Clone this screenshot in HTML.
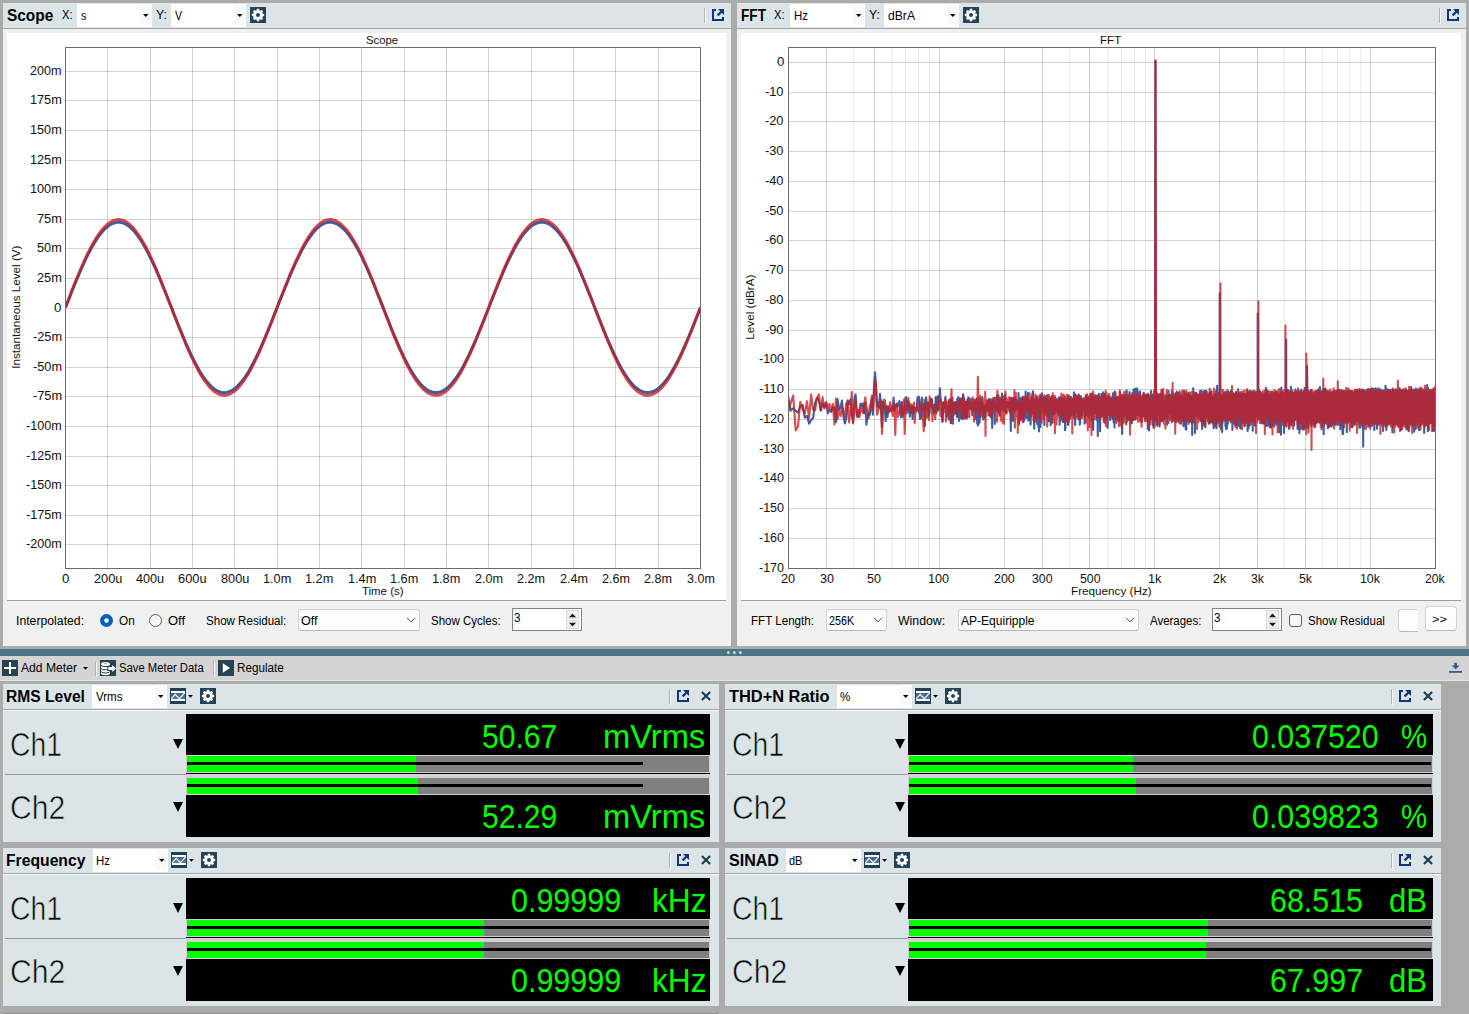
<!DOCTYPE html>
<html lang="en"><head><meta charset="utf-8"><title>Audio Analyzer</title>
<style>
html,body{margin:0;padding:0}
body{width:1469px;height:1014px;overflow:hidden;background:#ababab;position:relative;font-family:"Liberation Sans", sans-serif}
#root{position:absolute;left:0;top:0;width:1469px;height:1014px;overflow:hidden}
#root div{position:absolute}
.ic{position:absolute;display:block;overflow:visible}
.t{position:absolute;white-space:pre;line-height:1;transform-origin:0 50%;font-family:"Liberation Sans", sans-serif}
</style></head>
<body><div id="root">
<div style="left:3px;top:3px;width:728px;height:25px;background:#dbe5e7;"></div>
<div style="left:3px;top:28px;width:728px;height:1px;background:#a2a2a2;"></div>
<div style="left:3px;top:29px;width:728px;height:617px;background:#f0f0f0;"></div>
<div style="left:7px;top:33px;width:719px;height:567px;background:#fff;"></div>
<div style="left:7px;top:600px;width:719px;height:1px;background:#9f9f9f;"></div>
<div style="left:77px;top:4px;width:75px;height:23px;background:#fff;"></div>
<div style="left:140px;top:5px;width:11px;height:20px;background:#f9f9f9;"></div>
<svg class="ic" style="left:142.8px;top:13.9px" width="5.5" height="3" viewBox="0 0 5.5 3"><path d="M0 0H5.5L2.75 3Z" fill="#000"/></svg>
<div style="left:171px;top:4px;width:75px;height:23px;background:#fff;"></div>
<div style="left:234px;top:5px;width:11px;height:20px;background:#f9f9f9;"></div>
<svg class="ic" style="left:236.8px;top:13.9px" width="5.5" height="3" viewBox="0 0 5.5 3"><path d="M0 0H5.5L2.75 3Z" fill="#000"/></svg>
<svg class="ic" style="left:250px;top:7px" width="16" height="16" viewBox="0 0 16 16"><rect width="16" height="16" fill="#264356"/><path d="M6.61 3.51 L6.91 1.85 L9.09 1.85 L9.39 3.51 L10.19 3.84 L11.58 2.88 L13.12 4.42 L12.16 5.81 L12.49 6.61 L14.15 6.91 L14.15 9.09 L12.49 9.39 L12.16 10.19 L13.12 11.58 L11.58 13.12 L10.19 12.16 L9.39 12.49 L9.09 14.15 L6.91 14.15 L6.61 12.49 L5.81 12.16 L4.42 13.12 L2.88 11.58 L3.84 10.19 L3.51 9.39 L1.85 9.09 L1.85 6.91 L3.51 6.61 L3.84 5.81 L2.88 4.42 L4.42 2.88 L5.81 3.84Z M6.00 8.00 a2.00 2.00 0 1 0 4.00 0 a2.00 2.00 0 1 0 -4.00 0Z" fill="#fff" fill-rule="evenodd"/></svg>
<div style="left:704px;top:8px;width:1px;height:15px;background:#b4b4b4;"></div>
<div style="left:705px;top:9px;width:1px;height:15px;background:#fbfbfb;"></div>
<svg class="ic" style="left:712px;top:9px" width="12" height="12" viewBox="0 0 12 12"><path d="M0 0H4V2H2V10H10V8H12V12H0Z" fill="#12357e"/><path d="M6 0H12V6Z" fill="#12357e"/><path d="M10.8 1.2L5.6 6.4" stroke="#12357e" stroke-width="2.2" fill="none"/></svg>
<div style="left:737px;top:3px;width:729px;height:25px;background:#dbe5e7;"></div>
<div style="left:737px;top:28px;width:729px;height:1px;background:#a2a2a2;"></div>
<div style="left:737px;top:29px;width:729px;height:617px;background:#f0f0f0;"></div>
<div style="left:741px;top:33px;width:720px;height:567px;background:#fff;"></div>
<div style="left:741px;top:600px;width:720px;height:1px;background:#9f9f9f;"></div>
<div style="left:790px;top:4px;width:75px;height:23px;background:#fff;"></div>
<div style="left:853px;top:5px;width:11px;height:20px;background:#f9f9f9;"></div>
<svg class="ic" style="left:855.8px;top:13.9px" width="5.5" height="3" viewBox="0 0 5.5 3"><path d="M0 0H5.5L2.75 3Z" fill="#000"/></svg>
<div style="left:884px;top:4px;width:75px;height:23px;background:#fff;"></div>
<div style="left:947px;top:5px;width:11px;height:20px;background:#f9f9f9;"></div>
<svg class="ic" style="left:949.8px;top:13.9px" width="5.5" height="3" viewBox="0 0 5.5 3"><path d="M0 0H5.5L2.75 3Z" fill="#000"/></svg>
<svg class="ic" style="left:963px;top:7px" width="16" height="16" viewBox="0 0 16 16"><rect width="16" height="16" fill="#264356"/><path d="M6.61 3.51 L6.91 1.85 L9.09 1.85 L9.39 3.51 L10.19 3.84 L11.58 2.88 L13.12 4.42 L12.16 5.81 L12.49 6.61 L14.15 6.91 L14.15 9.09 L12.49 9.39 L12.16 10.19 L13.12 11.58 L11.58 13.12 L10.19 12.16 L9.39 12.49 L9.09 14.15 L6.91 14.15 L6.61 12.49 L5.81 12.16 L4.42 13.12 L2.88 11.58 L3.84 10.19 L3.51 9.39 L1.85 9.09 L1.85 6.91 L3.51 6.61 L3.84 5.81 L2.88 4.42 L4.42 2.88 L5.81 3.84Z M6.00 8.00 a2.00 2.00 0 1 0 4.00 0 a2.00 2.00 0 1 0 -4.00 0Z" fill="#fff" fill-rule="evenodd"/></svg>
<div style="left:1439px;top:8px;width:1px;height:15px;background:#b4b4b4;"></div>
<div style="left:1440px;top:9px;width:1px;height:15px;background:#fbfbfb;"></div>
<svg class="ic" style="left:1447px;top:9px" width="12" height="12" viewBox="0 0 12 12"><path d="M0 0H4V2H2V10H10V8H12V12H0Z" fill="#12357e"/><path d="M6 0H12V6Z" fill="#12357e"/><path d="M10.8 1.2L5.6 6.4" stroke="#12357e" stroke-width="2.2" fill="none"/></svg>
<svg class="ic" style="left:0;top:0" width="1469" height="646" viewBox="0 0 1469 646"><path d="M107.5 47.5V568.0M150.5 47.5V568.0M192.5 47.5V568.0M234.5 47.5V568.0M277.5 47.5V568.0M319.5 47.5V568.0M361.5 47.5V568.0M404.5 47.5V568.0M446.5 47.5V568.0M488.5 47.5V568.0M531.5 47.5V568.0M573.5 47.5V568.0M615.5 47.5V568.0M658.5 47.5V568.0" stroke="rgba(0,0,0,0.175)" stroke-width="1" fill="none" shape-rendering="crispEdges"/><path d="M65.5 544.5H700.5M65.5 515.5H700.5M65.5 485.5H700.5M65.5 456.5H700.5M65.5 426.5H700.5M65.5 396.5H700.5M65.5 367.5H700.5M65.5 337.5H700.5M65.5 308.5H700.5M65.5 278.5H700.5M65.5 248.5H700.5M65.5 219.5H700.5M65.5 189.5H700.5M65.5 160.5H700.5M65.5 130.5H700.5M65.5 100.5H700.5M65.5 71.5H700.5" stroke="rgba(0,0,0,0.175)" stroke-width="1" fill="none" shape-rendering="crispEdges"/><clipPath id="c1"><rect x="65.5" y="47.5" width="635.0" height="520.5"/></clipPath><g clip-path="url(#c1)" fill="none" stroke-linejoin="round"><path d="M65.5 307.4L67.1 303.4L68.7 299.4L70.3 295.4L71.8 291.4L73.4 287.5L75.0 283.6L76.6 279.8L78.2 276.1L79.8 272.4L81.4 268.7L83.0 265.2L84.5 261.8L86.1 258.4L87.7 255.2L89.3 252.1L90.9 249.1L92.5 246.2L94.1 243.5L95.7 240.9L97.2 238.5L98.8 236.2L100.4 234.1L102.0 232.1L103.6 230.3L105.2 228.7L106.8 227.3L108.4 226.0L109.9 224.9L111.5 224.0L113.1 223.3L114.7 222.8L116.3 222.4L117.9 222.3L119.5 222.3L121.1 222.5L122.7 222.9L124.2 223.5L125.8 224.3L127.4 225.3L129.0 226.4L130.6 227.7L132.2 229.2L133.8 230.9L135.4 232.8L136.9 234.8L138.5 237.0L140.1 239.3L141.7 241.8L143.3 244.4L144.9 247.2L146.5 250.1L148.1 253.1L149.6 256.3L151.2 259.5L152.8 262.9L154.4 266.4L156.0 269.9L157.6 273.6L159.2 277.3L160.8 281.1L162.3 284.9L163.9 288.8L165.5 292.8L167.1 296.7L168.7 300.7L170.3 304.7L171.9 308.7L173.4 312.7L175.0 316.7L176.6 320.7L178.2 324.7L179.8 328.6L181.4 332.4L183.0 336.2L184.6 340.0L186.1 343.7L187.7 347.2L189.3 350.7L190.9 354.2L192.5 357.5L194.1 360.6L195.7 363.7L197.3 366.7L198.8 369.5L200.4 372.2L202.0 374.7L203.6 377.1L205.2 379.3L206.8 381.4L208.4 383.3L210.0 385.0L211.5 386.6L213.1 388.0L214.7 389.2L216.3 390.2L217.9 391.1L219.5 391.7L221.1 392.2L222.7 392.5L224.2 392.6L225.8 392.5L227.4 392.2L229.0 391.7L230.6 391.1L232.2 390.2L233.8 389.2L235.4 388.0L237.0 386.6L238.5 385.0L240.1 383.3L241.7 381.4L243.3 379.3L244.9 377.1L246.5 374.7L248.1 372.2L249.7 369.5L251.2 366.7L252.8 363.7L254.4 360.6L256.0 357.5L257.6 354.2L259.2 350.8L260.8 347.3L262.4 343.7L263.9 340.0L265.5 336.3L267.1 332.4L268.7 328.6L270.3 324.7L271.9 320.7L273.5 316.8L275.0 312.8L276.6 308.7L278.2 304.7L279.8 300.7L281.4 296.7L283.0 292.8L284.6 288.8L286.2 284.9L287.8 281.1L289.3 277.3L290.9 273.6L292.5 269.9L294.1 266.4L295.7 262.9L297.3 259.5L298.9 256.3L300.5 253.1L302.0 250.1L303.6 247.2L305.2 244.4L306.8 241.8L308.4 239.3L310.0 237.0L311.6 234.8L313.1 232.8L314.7 230.9L316.3 229.2L317.9 227.7L319.5 226.4L321.1 225.3L322.7 224.3L324.3 223.5L325.8 222.9L327.4 222.5L329.0 222.3L330.6 222.3L332.2 222.4L333.8 222.8L335.4 223.3L337.0 224.0L338.6 224.9L340.1 226.0L341.7 227.3L343.3 228.7L344.9 230.3L346.5 232.1L348.1 234.1L349.7 236.2L351.2 238.5L352.8 240.9L354.4 243.5L356.0 246.2L357.6 249.1L359.2 252.1L360.8 255.2L362.4 258.4L363.9 261.8L365.5 265.2L367.1 268.7L368.7 272.3L370.3 276.0L371.9 279.8L373.5 283.6L375.1 287.5L376.6 291.4L378.2 295.4L379.8 299.4L381.4 303.4L383.0 307.4L384.6 311.4L386.2 315.4L387.8 319.4L389.4 323.3L390.9 327.3L392.5 331.2L394.1 335.0L395.7 338.7L397.3 342.4L398.9 346.1L400.5 349.6L402.1 353.0L403.6 356.4L405.2 359.6L406.8 362.7L408.4 365.7L410.0 368.5L411.6 371.3L413.2 373.9L414.8 376.3L416.3 378.6L417.9 380.7L419.5 382.7L421.1 384.5L422.7 386.1L424.3 387.5L425.9 388.8L427.4 389.9L429.0 390.8L430.6 391.5L432.2 392.0L433.8 392.4L435.4 392.5L437.0 392.5L438.6 392.3L440.2 391.9L441.7 391.3L443.3 390.5L444.9 389.5L446.5 388.4L448.1 387.1L449.7 385.6L451.3 383.9L452.8 382.0L454.4 380.0L456.0 377.8L457.6 375.5L459.2 373.0L460.8 370.4L462.4 367.6L464.0 364.7L465.5 361.7L467.1 358.5L468.7 355.3L470.3 351.9L471.9 348.4L473.5 344.9L475.1 341.2L476.7 337.5L478.2 333.7L479.8 329.9L481.4 326.0L483.0 322.1L484.6 318.1L486.2 314.1L487.8 310.1L489.4 306.1L490.9 302.1L492.5 298.1L494.1 294.1L495.7 290.1L497.3 286.2L498.9 282.4L500.5 278.6L502.1 274.8L503.6 271.2L505.2 267.6L506.8 264.1L508.4 260.7L510.0 257.4L511.6 254.2L513.2 251.1L514.8 248.1L516.3 245.3L517.9 242.7L519.5 240.1L521.1 237.7L522.7 235.5L524.3 233.4L525.9 231.5L527.5 229.8L529.0 228.2L530.6 226.8L532.2 225.6L533.8 224.6L535.4 223.8L537.0 223.1L538.6 222.6L540.2 222.3L541.8 222.2L543.3 222.3L544.9 222.6L546.5 223.1L548.1 223.7L549.7 224.6L551.3 225.6L552.9 226.8L554.5 228.2L556.0 229.8L557.6 231.5L559.2 233.4L560.8 235.5L562.4 237.7L564.0 240.1L565.6 242.6L567.2 245.3L568.7 248.1L570.3 251.1L571.9 254.1L573.5 257.3L575.1 260.6L576.7 264.0L578.3 267.5L579.9 271.1L581.4 274.8L583.0 278.5L584.6 282.3L586.2 286.2L587.8 290.1L589.4 294.1L591.0 298.0L592.6 302.0L594.1 306.0L595.7 310.1L597.3 314.1L598.9 318.1L600.5 322.0L602.1 326.0L603.7 329.9L605.2 333.7L606.8 337.5L608.4 341.2L610.0 344.9L611.6 348.4L613.2 351.9L614.8 355.3L616.4 358.5L617.9 361.7L619.5 364.7L621.1 367.6L622.7 370.4L624.3 373.0L625.9 375.5L627.5 377.8L629.1 380.0L630.6 382.0L632.2 383.9L633.8 385.6L635.4 387.1L637.0 388.4L638.6 389.5L640.2 390.5L641.8 391.3L643.4 391.9L644.9 392.3L646.5 392.5L648.1 392.5L649.7 392.4L651.3 392.0L652.9 391.5L654.5 390.8L656.1 389.9L657.6 388.8L659.2 387.5L660.8 386.1L662.4 384.5L664.0 382.7L665.6 380.7L667.2 378.6L668.8 376.3L670.3 373.9L671.9 371.3L673.5 368.6L675.1 365.7L676.7 362.7L678.3 359.6L679.9 356.4L681.5 353.0L683.0 349.6L684.6 346.1L686.2 342.5L687.8 338.8L689.4 335.0L691.0 331.2L692.6 327.3L694.1 323.4L695.7 319.4L697.3 315.4L698.9 311.4L700.5 307.4" stroke="#3f5ea2" stroke-width="2.9"/><path d="M65.5 307.4L67.1 303.3L68.7 299.1L70.3 295.0L71.8 290.9L73.4 286.9L75.0 282.9L76.6 278.9L78.2 275.1L79.8 271.2L81.4 267.5L83.0 263.9L84.5 260.3L86.1 256.9L87.7 253.5L89.3 250.3L90.9 247.2L92.5 244.3L94.1 241.5L95.7 238.8L97.2 236.3L98.8 234.0L100.4 231.8L102.0 229.7L103.6 227.9L105.2 226.2L106.8 224.7L108.4 223.4L109.9 222.3L111.5 221.4L113.1 220.6L114.7 220.1L116.3 219.7L117.9 219.5L119.5 219.6L121.1 219.8L122.7 220.2L124.2 220.8L125.8 221.6L127.4 222.6L129.0 223.8L130.6 225.2L132.2 226.8L133.8 228.5L135.4 230.4L136.9 232.5L138.5 234.7L140.1 237.1L141.7 239.7L143.3 242.4L144.9 245.3L146.5 248.3L148.1 251.4L149.6 254.6L151.2 258.0L152.8 261.5L154.4 265.1L156.0 268.7L157.6 272.5L159.2 276.3L160.8 280.2L162.3 284.2L163.9 288.2L165.5 292.3L167.1 296.4L168.7 300.5L170.3 304.6L171.9 308.8L173.4 312.9L175.0 317.0L176.6 321.1L178.2 325.2L179.8 329.2L181.4 333.2L183.0 337.2L184.6 341.0L186.1 344.8L187.7 348.5L189.3 352.1L190.9 355.6L192.5 359.0L194.1 362.3L195.7 365.5L197.3 368.5L198.8 371.5L200.4 374.2L202.0 376.8L203.6 379.3L205.2 381.6L206.8 383.7L208.4 385.7L210.0 387.5L211.5 389.1L213.1 390.5L214.7 391.8L216.3 392.8L217.9 393.7L219.5 394.4L221.1 394.9L222.7 395.2L224.2 395.3L225.8 395.2L227.4 394.9L229.0 394.4L230.6 393.7L232.2 392.8L233.8 391.8L235.4 390.5L237.0 389.1L238.5 387.5L240.1 385.7L241.7 383.7L243.3 381.6L244.9 379.3L246.5 376.8L248.1 374.2L249.7 371.5L251.2 368.6L252.8 365.5L254.4 362.3L256.0 359.1L257.6 355.6L259.2 352.1L260.8 348.5L262.4 344.8L263.9 341.0L265.5 337.2L267.1 333.2L268.7 329.3L270.3 325.2L271.9 321.2L273.5 317.0L275.0 312.9L276.6 308.8L278.2 304.6L279.8 300.5L281.4 296.4L283.0 292.3L284.6 288.2L286.2 284.2L287.8 280.3L289.3 276.3L290.9 272.5L292.5 268.7L294.1 265.1L295.7 261.5L297.3 258.0L298.9 254.6L300.5 251.4L302.0 248.3L303.6 245.3L305.2 242.4L306.8 239.7L308.4 237.1L310.0 234.7L311.6 232.5L313.1 230.4L314.7 228.5L316.3 226.8L317.9 225.2L319.5 223.8L321.1 222.6L322.7 221.6L324.3 220.8L325.8 220.2L327.4 219.8L329.0 219.6L330.6 219.5L332.2 219.7L333.8 220.1L335.4 220.6L337.0 221.4L338.6 222.3L340.1 223.4L341.7 224.7L343.3 226.2L344.9 227.9L346.5 229.7L348.1 231.8L349.7 234.0L351.2 236.3L352.8 238.8L354.4 241.5L356.0 244.3L357.6 247.2L359.2 250.3L360.8 253.5L362.4 256.9L363.9 260.3L365.5 263.9L367.1 267.5L368.7 271.2L370.3 275.0L371.9 278.9L373.5 282.9L375.1 286.9L376.6 290.9L378.2 295.0L379.8 299.1L381.4 303.3L383.0 307.4L384.6 311.5L386.2 315.7L387.8 319.8L389.4 323.9L390.9 327.9L392.5 331.9L394.1 335.9L395.7 339.7L397.3 343.6L398.9 347.3L400.5 350.9L402.1 354.5L403.6 357.9L405.2 361.2L406.8 364.5L408.4 367.5L410.0 370.5L411.6 373.3L413.2 376.0L414.8 378.5L416.3 380.8L417.9 383.0L419.5 385.1L421.1 386.9L422.7 388.6L424.3 390.1L425.9 391.4L427.4 392.5L429.0 393.4L430.6 394.2L432.2 394.7L433.8 395.1L435.4 395.3L437.0 395.2L438.6 395.0L440.2 394.6L441.7 394.0L443.3 393.2L444.9 392.2L446.5 391.0L448.1 389.6L449.7 388.0L451.3 386.3L452.8 384.4L454.4 382.3L456.0 380.1L457.6 377.7L459.2 375.1L460.8 372.4L462.4 369.5L464.0 366.5L465.5 363.4L467.1 360.2L468.7 356.8L470.3 353.3L471.9 349.7L473.5 346.1L475.1 342.3L476.7 338.5L478.2 334.6L479.8 330.6L481.4 326.6L483.0 322.5L484.6 318.4L486.2 314.3L487.8 310.2L489.4 306.0L490.9 301.9L492.5 297.8L494.1 293.7L495.7 289.6L497.3 285.6L498.9 281.6L500.5 277.6L502.1 273.8L503.6 270.0L505.2 266.3L506.8 262.7L508.4 259.2L510.0 255.8L511.6 252.5L513.2 249.3L514.8 246.3L516.3 243.4L517.9 240.6L519.5 238.0L521.1 235.5L522.7 233.2L524.3 231.1L525.9 229.1L527.5 227.3L529.0 225.7L530.6 224.3L532.2 223.0L533.8 222.0L535.4 221.1L537.0 220.4L538.6 219.9L540.2 219.6L541.8 219.5L543.3 219.6L544.9 219.9L546.5 220.4L548.1 221.1L549.7 222.0L551.3 223.0L552.9 224.3L554.5 225.7L556.0 227.3L557.6 229.1L559.2 231.1L560.8 233.2L562.4 235.5L564.0 238.0L565.6 240.6L567.2 243.3L568.7 246.2L570.3 249.3L571.9 252.4L573.5 255.7L575.1 259.1L576.7 262.7L578.3 266.3L579.9 270.0L581.4 273.8L583.0 277.6L584.6 281.5L586.2 285.5L587.8 289.6L589.4 293.6L591.0 297.7L592.6 301.9L594.1 306.0L595.7 310.1L597.3 314.3L598.9 318.4L600.5 322.5L602.1 326.6L603.7 330.6L605.2 334.5L606.8 338.4L608.4 342.3L610.0 346.0L611.6 349.7L613.2 353.3L614.8 356.8L616.4 360.1L617.9 363.4L619.5 366.5L621.1 369.5L622.7 372.4L624.3 375.1L625.9 377.7L627.5 380.1L629.1 382.3L630.6 384.4L632.2 386.3L633.8 388.0L635.4 389.6L637.0 391.0L638.6 392.2L640.2 393.2L641.8 394.0L643.4 394.6L644.9 395.0L646.5 395.2L648.1 395.3L649.7 395.1L651.3 394.7L652.9 394.2L654.5 393.4L656.1 392.5L657.6 391.4L659.2 390.1L660.8 388.6L662.4 386.9L664.0 385.1L665.6 383.0L667.2 380.9L668.8 378.5L670.3 376.0L671.9 373.3L673.5 370.5L675.1 367.6L676.7 364.5L678.3 361.3L679.9 357.9L681.5 354.5L683.0 350.9L684.6 347.3L686.2 343.6L687.8 339.8L689.4 335.9L691.0 331.9L692.6 327.9L694.1 323.9L695.7 319.8L697.3 315.7L698.9 311.6L700.5 307.4" stroke="rgba(201,28,30,0.78)" stroke-width="2.9"/></g><rect x="65.5" y="47.5" width="635.0" height="521.0" fill="none" stroke="#6c6c6c" stroke-width="1" shape-rendering="crispEdges"/><path d="M853.5 47.5V568.0M891.5 47.5V568.0M905.5 47.5V568.0M918.5 47.5V568.0M929.5 47.5V568.0M1069.5 47.5V568.0M1107.5 47.5V568.0M1121.5 47.5V568.0M1134.5 47.5V568.0M1145.5 47.5V568.0M1284.5 47.5V568.0M1322.5 47.5V568.0M1337.5 47.5V568.0M1349.5 47.5V568.0M1360.5 47.5V568.0" stroke="rgba(0,0,0,0.065)" stroke-width="1" fill="none" shape-rendering="crispEdges"/><path d="M826.5 47.5V568.0M874.5 47.5V568.0M939.5 47.5V568.0M1004.5 47.5V568.0M1042.5 47.5V568.0M1089.5 47.5V568.0M1154.5 47.5V568.0M1219.5 47.5V568.0M1257.5 47.5V568.0M1305.5 47.5V568.0M1370.5 47.5V568.0" stroke="rgba(0,0,0,0.175)" stroke-width="1" fill="none" shape-rendering="crispEdges"/><path d="M788.5 62.5H1435.5M788.5 92.5H1435.5M788.5 121.5H1435.5M788.5 151.5H1435.5M788.5 181.5H1435.5M788.5 211.5H1435.5M788.5 240.5H1435.5M788.5 270.5H1435.5M788.5 300.5H1435.5M788.5 330.5H1435.5M788.5 359.5H1435.5M788.5 389.5H1435.5M788.5 419.5H1435.5M788.5 449.5H1435.5M788.5 478.5H1435.5M788.5 508.5H1435.5M788.5 538.5H1435.5" stroke="rgba(0,0,0,0.175)" stroke-width="1" fill="none" shape-rendering="crispEdges"/><clipPath id="c2"><rect x="788.5" y="47.5" width="647.0" height="520.5"/></clipPath><g clip-path="url(#c2)" fill="none" stroke-linejoin="round" stroke-width="2.1"><path d="M788.2 396.5L790.7 410.6L793.2 408.3L795.7 410.9L798.0 412.7L800.3 405.8L802.6 405.0L804.8 417.6L807.0 415.8L809.1 423.7L811.1 420.0L813.1 418.0L815.1 402.8L817.0 397.5L818.9 400.4L820.8 410.5L822.6 403.5L824.4 407.5L826.1 402.7L827.9 413.3L829.5 409.6L831.2 411.9L832.8 407.3L834.4 407.5L836.0 422.1L837.6 399.1L839.1 409.3L840.6 407.2L842.0 400.5L843.5 417.0L844.9 423.5L846.3 418.2L847.7 400.4L849.1 404.0L850.4 399.6L851.8 414.8L853.1 422.1L854.4 399.0L855.6 394.2L856.9 414.6L858.1 417.0L859.4 411.2L860.6 403.5L861.8 405.1L862.9 403.5L864.1 413.3L865.3 402.9L866.4 424.7L867.5 416.7L868.6 413.2L869.7 414.8L870.8 408.7L871.9 399.0L872.9 414.6L874.0 385.9L875.0 372.2L876.0 385.9L877.1 406.5L878.1 402.0L879.0 407.3L880.0 393.9L881.0 407.9L882.0 427.0L882.9 401.6L883.8 403.9L884.8 408.3L885.7 421.1L886.6 406.0L887.5 417.0L888.4 407.4L889.3 410.8L890.2 408.5L891.1 411.1L891.9 406.4L892.8 409.5L893.6 397.5L894.5 411.2L895.3 408.7L896.1 405.0L896.9 406.5L897.8 403.9L898.6 405.6L899.4 401.1L900.1 412.8L900.9 417.1L901.7 402.0L902.5 417.2L903.2 416.0L904.0 406.6L904.7 413.0L905.5 397.4L906.2 397.1L907.0 410.3L907.7 401.2L908.4 412.5L909.1 402.6L909.9 416.8L910.6 406.4L911.3 408.4L912.0 406.0L912.6 419.0L913.3 407.6L914.0 412.9L914.7 407.7L915.4 410.5L916.0 407.7L916.7 410.3L917.4 397.5L918.0 397.1L918.7 396.5L919.3 399.6L919.9 419.0L920.6 418.8L921.2 416.6L921.8 397.5L922.4 407.2L923.1 409.8L923.7 404.8L924.3 404.4L924.9 426.3L925.5 404.8L926.1 397.3L926.7 402.6L927.3 409.7L927.9 402.9L928.5 416.2L929.0 415.1L929.6 412.4L930.2 400.3L930.8 406.0L931.3 398.7L931.9 399.5L932.4 406.8L933.0 408.6L933.5 413.5L934.1 404.8L934.6 405.8L935.2 411.0L935.7 397.0L936.3 413.3L936.8 409.2L937.3 397.4L937.9 396.1L938.4 410.5L938.9 400.3L939.4 401.3L939.9 388.4L940.5 398.9L941.0 399.8L941.5 404.0L942.0 410.5L942.5 421.6L943.0 409.3L943.5 402.2L944.0 404.2L944.5 406.9L944.9 408.4L945.4 396.9L945.9 405.9L946.4 412.8L946.9 416.5L947.4 414.7L947.8 406.2L948.3 406.7L948.8 419.7L949.2 401.3L949.7 403.2L950.2 399.4L950.6 408.8L951.1 423.3L951.5 416.4L952.0 405.9L952.4 397.7L952.9 423.7L953.3 406.2L953.8 415.0L954.2 403.3L954.7 405.9L955.1 402.0L955.5 409.3L956.0 413.7L956.4 410.7L956.8 408.3L957.3 398.7L957.7 416.7L958.1 403.0L958.5 397.1L959.0 420.9L959.4 408.4L959.8 418.3L960.2 398.7L960.6 404.8L961.0 398.2L961.5 418.4L961.9 400.4L962.3 401.5L962.7 419.3L963.1 394.4L963.5 407.0L963.9 408.7L964.3 398.6L964.7 418.2L965.1 404.7L965.5 402.1L965.8 405.7L966.2 403.6L966.6 413.5L967.0 418.3L967.4 399.8L967.8 409.9L968.2 397.4L968.5 405.0L968.9 407.6L969.3 403.0L969.7 398.6L970.0 408.9L970.4 403.5L970.8 403.7L971.2 399.6L971.5 402.9L971.9 404.9L972.3 415.2L972.6 402.6L973.0 406.5L973.3 403.2L973.7 410.8L974.1 399.8L974.4 408.5L974.8 407.3L975.1 406.8L975.5 418.6L975.8 415.6L976.2 402.8L976.5 398.8L976.9 402.5L977.2 423.4L977.6 414.6L977.9 425.4L978.3 425.1L978.6 403.4L978.9 409.3L979.3 398.0L979.6 422.6L980.0 408.9L980.3 414.6L980.6 409.8L981.0 406.5L981.3 400.3L981.6 410.5L981.9 404.4L982.3 396.8L982.6 407.1L982.9 409.3L983.2 419.6L983.6 418.0L983.9 413.3L984.2 407.4L984.5 406.0L984.9 408.6L985.2 417.6L985.5 405.1L985.8 409.6L986.1 406.6L986.4 411.7L986.7 408.0L987.1 401.3L987.4 408.5L987.7 410.0L988.0 403.7L988.3 405.3L988.6 399.3L988.9 404.1L989.2 402.5L989.5 415.6L989.8 399.2L990.1 410.4L990.4 400.0L990.7 416.9L991.0 408.7L991.3 399.4L991.6 405.7L991.9 407.7L992.2 428.0L992.5 400.6L992.8 404.8L993.1 400.4L993.4 410.6L993.7 410.2L994.0 404.0L994.2 403.5L994.5 397.9L994.8 424.0L995.1 402.2L995.4 410.8L995.7 408.6L996.0 407.4L996.2 405.8L996.5 410.8L996.8 409.4L997.1 398.0L997.4 395.0L997.6 405.2L997.9 396.4L998.2 406.9L998.5 395.2L998.7 410.8L999.0 413.2L999.3 403.4L999.6 398.5L999.8 415.6L1000.1 411.5L1000.4 406.1L1000.7 409.9L1000.9 403.5L1001.2 408.5L1001.5 406.0L1001.7 401.4L1002.0 393.6L1002.3 405.2L1002.5 402.7L1002.8 400.1L1003.0 410.0L1003.3 401.9L1003.6 403.2L1003.8 410.1L1004.1 405.2L1004.3 408.7L1004.6 411.5L1004.9 402.9L1005.1 394.9L1005.4 407.9L1005.6 404.2L1005.9 412.4L1006.1 404.8L1006.4 407.6L1006.6 402.4L1006.9 402.3L1007.1 406.7L1007.4 402.3L1007.6 406.8L1007.9 402.0L1008.1 404.1L1008.4 402.1L1008.6 402.1L1008.9 402.2L1009.1 407.9L1009.4 403.0L1009.6 401.4L1009.9 412.2L1010.1 402.2L1010.4 399.1L1010.6 418.6L1010.8 431.1L1011.1 398.3L1011.3 412.8L1011.6 402.8L1011.8 411.2L1012.0 402.5L1012.3 412.1L1012.5 398.5L1012.5 398.5L1013.0 421.1L1013.0 421.1L1013.2 409.0L1013.5 408.8L1013.7 413.4L1013.9 405.2L1014.2 400.7L1014.4 412.6L1014.6 397.3L1014.9 403.6L1015.1 409.6L1015.3 398.9L1015.5 404.3L1015.8 410.1L1016.0 403.0L1016.2 405.6L1016.5 400.3L1016.5 400.3L1016.7 406.7L1016.9 402.4L1017.1 405.1L1017.4 408.6L1017.6 403.5L1017.8 407.9L1018.0 405.0L1018.3 406.9L1018.5 393.1L1018.5 393.1L1018.7 404.1L1018.9 424.4L1019.2 409.6L1019.4 412.3L1019.6 409.3L1019.8 417.0L1020.0 400.5L1020.2 398.4L1020.5 417.0L1020.5 417.0L1020.7 408.4L1020.9 414.6L1021.1 419.3L1021.3 411.2L1021.6 398.6L1021.6 398.6L1022.0 411.9L1022.0 411.9L1022.2 416.0L1022.4 412.9L1022.6 402.0L1022.8 397.6L1023.0 403.3L1023.0 403.3L1023.5 422.3L1023.5 422.3L1023.7 398.3L1023.9 412.3L1024.1 409.5L1024.3 403.0L1024.5 420.1L1024.5 420.1L1024.7 398.3L1024.9 402.2L1025.1 399.4L1025.3 403.9L1025.6 391.5L1025.6 391.5L1025.8 412.9L1026.0 403.8L1026.2 405.4L1026.4 414.6L1026.6 411.0L1026.6 411.0L1026.8 417.9L1027.0 412.0L1027.2 415.4L1027.4 405.0L1027.6 395.8L1027.8 400.2L1028.0 392.9L1028.0 392.9L1028.2 413.2L1028.4 420.6L1028.6 401.9L1028.6 401.9L1029.0 419.5L1029.0 419.5L1029.2 403.6L1029.4 402.9L1029.6 400.5L1029.6 400.5L1029.8 403.4L1030.0 401.8L1030.2 400.9L1030.4 406.1L1030.6 424.5L1030.6 424.5L1031.0 402.6L1031.0 402.6L1031.2 411.3L1031.4 416.3L1031.5 397.4L1031.5 397.4L1031.9 413.2L1031.9 413.2L1032.1 408.6L1032.3 409.3L1032.5 396.6L1032.7 392.6L1032.9 403.3L1032.9 403.3L1033.1 391.4L1033.1 391.4L1033.3 404.5L1033.5 400.9L1033.7 402.2L1033.8 415.1L1034.0 408.5L1034.2 428.7L1034.4 407.6L1034.4 407.6L1034.6 409.9L1034.8 407.4L1035.0 417.2L1035.0 417.2L1035.2 400.1L1035.3 407.5L1035.5 411.8L1035.7 418.0L1035.9 402.3L1035.9 402.3L1036.1 411.1L1036.1 411.1L1036.3 396.5L1036.4 406.0L1036.6 401.0L1036.6 401.0L1037.0 411.5L1037.0 411.5L1037.2 424.1L1037.4 399.3L1037.5 399.3L1037.5 399.3L1037.7 405.8L1037.9 405.6L1038.1 410.4L1038.1 410.4L1038.3 405.5L1038.4 406.5L1038.6 427.2L1038.8 402.0L1039.0 431.5L1039.0 431.5L1039.2 417.7L1039.3 409.2L1039.5 417.9L1039.5 417.9L1039.7 395.2L1039.9 408.7L1040.1 426.3L1040.2 413.6L1040.4 427.1L1040.4 427.1L1040.6 406.7L1040.8 407.3L1040.9 404.0L1040.9 404.0L1041.1 413.0L1041.1 413.0L1041.5 400.7L1041.5 400.7L1041.6 405.5L1041.6 405.5L1041.8 393.3L1042.0 403.8L1042.1 402.2L1042.1 402.2L1042.3 405.9L1042.5 402.7L1042.7 408.0L1042.8 409.0L1043.0 400.8L1043.0 400.8L1043.2 403.8L1043.4 401.5L1043.5 397.5L1043.5 397.5L1043.9 409.9L1043.9 409.9L1044.0 413.6L1044.2 398.8L1044.4 425.0L1044.4 425.0L1044.5 405.5L1044.7 397.1L1044.9 408.9L1044.9 408.9L1045.0 406.3L1045.0 406.3L1045.2 401.8L1045.4 405.3L1045.5 396.5L1045.5 396.5L1045.7 411.3L1045.9 406.0L1046.0 402.3L1046.2 404.8L1046.4 395.9L1046.4 395.9L1046.5 402.5L1046.7 403.5L1046.9 399.8L1046.9 399.8L1047.0 403.4L1047.0 403.4L1047.2 413.1L1047.4 410.1L1047.5 417.1L1047.5 417.1L1047.7 395.1L1047.8 409.3L1048.0 406.5L1048.0 406.5L1048.3 414.1L1048.5 410.8L1048.7 409.5L1048.8 421.2L1049.0 408.8L1049.0 408.8L1049.1 409.1L1049.3 401.1L1049.5 412.0L1049.5 412.0L1049.6 418.2L1049.6 418.2L1049.8 402.1L1049.9 407.6L1050.1 411.7L1050.1 411.7L1050.4 398.4L1050.4 398.4L1050.6 413.5L1050.7 425.3L1050.9 397.7L1050.9 397.7L1051.0 407.6L1051.0 407.6L1051.4 400.3L1051.4 400.3L1051.5 410.2L1051.7 422.6L1052.0 403.7L1052.0 403.7L1052.1 413.1L1052.3 396.1L1052.4 413.3L1052.4 413.3L1052.6 408.1L1052.8 413.7L1052.9 397.5L1052.9 397.5L1053.1 404.0L1053.1 404.0L1053.2 411.2L1053.4 408.9L1053.5 404.4L1053.7 400.5L1053.8 409.6L1054.0 408.5L1054.1 405.4L1054.3 401.2L1054.4 414.4L1054.4 414.4L1054.6 404.8L1054.7 403.7L1054.9 405.6L1054.9 405.6L1055.0 399.8L1055.2 410.7L1055.5 398.0L1055.5 398.0L1055.6 407.5L1055.8 403.5L1055.9 410.4L1055.9 410.4L1056.1 406.4L1056.1 406.4L1056.2 411.2L1056.4 407.5L1056.5 399.2L1056.5 399.2L1057.0 410.3L1057.0 410.3L1057.1 409.4L1057.1 409.4L1057.4 405.9L1057.4 405.9L1057.6 404.9L1057.6 404.9L1057.7 399.3L1057.9 403.8L1058.0 409.8L1058.3 414.6L1058.4 406.1L1058.4 406.1L1058.6 405.5L1058.7 412.3L1058.9 404.4L1058.9 404.4L1059.0 397.3L1059.0 397.3L1059.2 407.0L1059.5 400.6L1059.6 424.7L1059.6 424.7L1059.9 409.0L1059.9 409.0L1060.0 401.3L1060.0 401.3L1060.5 421.0L1060.5 421.0L1060.6 406.9L1060.6 406.9L1060.9 397.4L1060.9 397.4L1061.0 408.4L1061.0 408.4L1061.4 414.3L1061.4 414.3L1061.6 408.8L1061.7 412.7L1061.9 400.6L1061.9 400.6L1062.0 416.7L1062.0 416.7L1062.4 402.3L1062.4 402.3L1062.6 406.1L1062.6 406.1L1063.0 422.0L1063.0 422.0L1063.1 398.4L1063.1 398.4L1063.3 413.0L1063.4 407.0L1063.5 402.6L1063.5 402.6L1063.9 413.7L1063.9 413.7L1064.1 415.0L1064.1 415.0L1064.5 400.9L1064.5 400.9L1064.6 397.1L1064.6 397.1L1064.9 409.0L1064.9 409.0L1065.0 430.3L1065.0 430.3L1065.3 403.1L1065.4 428.5L1065.6 415.9L1065.7 420.4L1065.8 406.9L1066.0 407.7L1066.1 403.5L1066.1 403.5L1066.2 414.3L1066.4 407.6L1066.5 407.0L1066.6 420.4L1066.9 401.1L1066.9 401.1L1067.0 404.0L1067.0 404.0L1067.4 421.5L1067.4 421.5L1067.6 398.0L1067.7 397.8L1068.0 425.0L1068.0 425.0L1068.1 402.8L1068.4 396.2L1068.5 409.4L1068.5 409.4L1068.6 403.6L1068.6 403.6L1068.7 422.2L1068.9 411.7L1069.0 404.6L1069.1 415.9L1069.3 399.4L1069.4 413.2L1069.5 414.2L1069.7 404.7L1069.8 417.2L1069.9 405.5L1070.0 401.3L1070.3 400.8L1070.4 412.6L1070.4 412.6L1070.6 398.6L1070.8 396.8L1070.9 414.5L1070.9 414.5L1071.1 409.3L1071.3 411.5L1071.4 399.3L1071.4 399.3L1071.6 413.5L1071.7 413.9L1071.8 404.9L1071.9 407.4L1072.1 414.6L1072.1 414.6L1072.3 399.0L1072.4 403.5L1072.6 406.3L1072.8 399.1L1072.9 413.9L1072.9 413.9L1073.1 403.3L1073.2 400.5L1073.3 413.2L1073.4 403.8L1073.6 410.9L1073.6 410.9L1073.9 392.4L1073.9 392.4L1074.1 414.5L1074.2 417.6L1074.3 410.8L1074.4 412.2L1074.5 410.2L1074.5 410.2L1074.9 405.1L1074.9 405.1L1075.0 410.3L1075.2 425.0L1075.4 394.6L1075.4 394.6L1075.5 405.0L1075.6 395.5L1075.9 409.0L1075.9 409.0L1076.0 410.9L1076.0 410.9L1076.1 401.5L1076.5 404.5L1076.6 403.8L1076.7 400.3L1077.0 411.0L1077.0 411.0L1077.1 403.8L1077.1 403.8L1077.2 412.6L1077.4 404.3L1077.6 405.2L1077.8 396.6L1077.9 416.5L1077.9 416.5L1078.0 412.3L1078.0 412.3L1078.4 396.8L1078.5 397.3L1078.6 407.7L1078.6 407.7L1078.8 395.2L1079.0 398.7L1079.1 418.0L1079.1 418.0L1079.2 397.8L1079.4 406.1L1079.5 401.8L1079.5 401.8L1079.8 424.8L1079.9 402.9L1080.0 397.7L1080.0 397.7L1080.1 423.4L1080.5 402.8L1080.6 411.3L1080.8 413.3L1080.9 400.6L1080.9 400.6L1081.0 396.4L1081.0 396.4L1081.2 403.8L1081.5 401.7L1081.6 408.8L1081.7 410.9L1081.8 400.3L1082.0 405.6L1082.1 415.5L1082.1 415.5L1082.3 400.6L1082.4 402.7L1082.5 406.6L1082.7 410.1L1083.0 403.0L1083.0 403.0L1083.1 404.3L1083.2 399.4L1083.4 409.8L1083.4 409.8L1083.5 406.6L1083.6 408.0L1083.7 398.1L1084.0 407.3L1084.1 404.7L1084.2 399.7L1084.4 410.1L1084.4 410.1L1084.5 405.9L1084.6 423.8L1085.0 403.0L1085.0 403.0L1085.1 406.3L1085.2 405.9L1085.4 411.4L1085.5 411.3L1085.6 407.5L1085.7 403.1L1085.8 415.0L1085.9 409.4L1086.0 402.1L1086.1 395.4L1086.4 409.1L1086.5 397.5L1086.6 405.2L1086.8 403.8L1086.9 411.0L1086.9 411.0L1087.0 415.0L1087.0 415.0L1087.3 404.2L1087.4 410.8L1087.5 404.2L1087.8 401.8L1088.0 416.2L1088.0 416.2L1088.1 409.3L1088.1 409.3L1088.3 397.6L1088.5 400.3L1088.6 408.4L1088.8 417.6L1088.9 402.7L1088.9 402.7L1089.0 406.8L1089.1 408.4L1089.3 398.4L1089.4 404.6L1089.5 407.7L1089.6 400.2L1089.8 409.4L1090.0 405.4L1090.1 400.3L1090.3 408.0L1090.5 393.8L1090.5 393.8L1090.6 402.2L1090.8 415.5L1091.0 396.5L1091.0 396.5L1091.1 405.6L1091.1 405.6L1091.2 397.6L1091.4 405.0L1091.5 410.4L1091.7 401.9L1091.8 420.9L1091.9 404.2L1092.0 405.9L1092.1 401.6L1092.3 418.3L1092.4 404.6L1092.5 394.0L1092.5 394.0L1092.9 427.5L1092.9 427.5L1093.0 397.2L1093.1 396.6L1093.2 430.0L1093.4 403.0L1093.5 407.9L1093.8 409.2L1093.9 397.6L1093.9 397.6L1094.0 410.4L1094.0 410.4L1094.3 402.3L1094.4 407.4L1094.5 405.4L1094.7 406.1L1094.9 399.7L1094.9 399.7L1095.0 396.3L1095.0 396.3L1095.3 413.2L1095.5 412.5L1095.6 405.5L1095.8 404.6L1096.0 411.2L1096.0 411.2L1096.1 401.0L1096.4 400.7L1096.5 419.8L1096.5 419.8L1096.6 398.1L1096.6 398.1L1096.9 414.2L1097.0 403.0L1097.0 395.6L1097.0 395.6L1097.2 410.5L1097.4 404.6L1097.5 402.2L1097.8 436.0L1097.9 399.3L1097.9 399.3L1098.0 408.3L1098.2 411.8L1098.5 398.4L1098.5 398.4L1098.6 407.2L1098.6 407.2L1098.8 393.8L1099.0 400.9L1099.0 399.4L1099.3 397.5L1099.4 421.0L1099.4 421.0L1099.5 419.9L1099.5 419.9L1100.0 401.5L1100.0 401.5L1100.1 431.3L1100.1 431.3L1100.4 402.6L1100.4 418.4L1100.5 403.6L1100.6 399.7L1100.7 415.1L1100.9 411.5L1101.0 406.7L1101.4 394.0L1101.5 416.3L1101.5 416.3L1101.6 411.0L1101.6 411.0L1101.7 403.0L1101.9 409.3L1102.0 403.5L1102.3 414.9L1102.4 396.1L1102.5 403.4L1102.6 402.1L1102.7 414.5L1102.9 396.6L1102.9 396.6L1103.0 402.2L1103.1 392.4L1103.5 411.5L1103.5 411.5L1103.5 401.1L1103.5 401.1L1103.9 414.9L1104.0 402.7L1104.1 406.4L1104.3 422.5L1104.4 394.5L1104.4 414.7L1104.5 406.6L1104.7 417.9L1105.0 393.9L1105.0 393.9L1105.1 415.2L1105.1 415.2L1105.4 396.3L1105.4 396.3L1105.5 407.0L1105.6 414.1L1105.8 399.7L1105.9 408.9L1106.0 405.0L1106.1 400.3L1106.4 417.8L1106.5 409.0L1106.6 402.3L1106.6 402.3L1107.0 415.1L1107.0 415.1L1107.1 413.3L1107.3 397.1L1107.4 414.1L1107.4 414.1L1107.5 402.8L1107.5 402.8L1107.7 427.9L1107.9 407.8L1108.0 407.2L1108.1 415.5L1108.3 398.5L1108.4 407.3L1108.5 399.5L1108.7 396.5L1108.9 407.7L1109.0 405.3L1109.0 397.8L1109.0 397.8L1109.5 410.6L1109.5 410.6L1109.5 398.5L1109.6 412.1L1109.9 398.3L1110.0 403.6L1110.0 411.1L1110.2 420.1L1110.3 401.3L1110.5 410.2L1110.5 409.6L1110.9 398.1L1111.0 411.3L1111.0 411.3L1111.0 400.4L1111.2 414.0L1111.4 397.5L1111.5 400.1L1111.5 407.1L1111.7 399.0L1111.9 409.6L1112.0 405.5L1112.0 411.9L1112.4 415.6L1112.4 402.5L1112.4 402.5L1112.5 411.8L1112.8 419.3L1112.9 393.2L1112.9 393.2L1113.0 404.1L1113.2 399.0L1113.4 414.4L1113.5 410.1L1113.6 404.2L1113.7 422.6L1113.9 395.5L1114.0 421.8L1114.1 395.0L1114.1 395.0L1114.4 418.7L1114.5 399.5L1114.5 427.4L1114.5 427.4L1114.7 391.6L1114.9 404.5L1115.0 407.9L1115.1 401.1L1115.3 419.7L1115.5 401.9L1115.6 403.9L1115.8 417.2L1116.0 402.2L1116.0 402.2L1116.0 399.8L1116.0 399.8L1116.4 405.0L1116.4 405.0L1116.5 412.3L1116.9 397.4L1117.0 416.6L1117.0 416.6L1117.1 405.7L1117.1 397.2L1117.3 415.2L1117.4 411.3L1117.5 414.7L1117.6 420.5L1117.7 400.4L1118.0 413.9L1118.1 399.9L1118.1 399.9L1118.4 412.0L1118.4 409.2L1118.5 410.6L1118.5 410.6L1118.7 400.1L1119.0 410.4L1119.1 415.5L1119.4 421.5L1119.4 397.0L1119.4 397.0L1119.5 418.8L1119.5 418.8L1119.8 399.1L1120.0 401.5L1120.0 392.2L1120.0 392.2L1120.5 413.9L1120.5 413.9L1120.6 415.7L1120.6 415.7L1120.9 397.3L1120.9 397.3L1121.0 402.9L1121.1 408.0L1121.5 401.3L1121.5 401.3L1121.5 398.5L1121.6 398.2L1122.0 425.2L1122.0 425.2L1122.1 395.5L1122.1 395.5L1122.1 433.9L1122.5 410.6L1122.6 403.4L1122.8 396.9L1122.9 412.4L1122.9 404.3L1123.0 419.2L1123.0 419.2L1123.2 399.3L1123.4 415.9L1123.5 410.9L1123.6 416.8L1123.7 402.4L1123.9 408.4L1124.0 408.4L1124.1 416.8L1124.4 398.9L1124.4 398.9L1124.5 408.5L1124.6 415.3L1124.8 395.0L1125.0 406.8L1125.0 402.4L1125.1 397.0L1125.2 413.4L1125.4 412.0L1125.5 408.2L1125.5 408.2L1125.9 395.0L1125.9 395.0L1126.0 408.8L1126.2 424.5L1126.3 395.2L1126.4 405.6L1126.5 404.2L1126.7 390.4L1126.9 412.3L1127.0 404.4L1127.1 408.3L1127.4 404.9L1127.5 419.3L1127.5 419.3L1127.6 397.9L1127.6 407.3L1127.9 397.6L1128.0 399.6L1128.0 398.3L1128.0 398.3L1128.4 419.9L1128.5 404.3L1128.5 417.4L1128.7 418.8L1128.9 395.3L1128.9 395.3L1129.0 419.6L1129.0 419.6L1129.4 398.5L1129.5 405.4L1129.5 392.0L1129.5 392.0L1129.6 410.4L1130.0 410.3L1130.0 410.0L1130.2 419.5L1130.4 398.7L1130.5 411.0L1130.6 409.0L1130.7 398.0L1130.8 414.2L1131.0 405.0L1131.0 404.9L1131.3 423.4L1131.4 397.2L1131.5 406.1L1131.6 416.0L1131.6 416.0L1131.8 396.5L1132.0 410.6L1132.0 416.0L1132.2 417.2L1132.4 395.4L1132.5 406.4L1132.6 402.2L1132.8 396.4L1133.0 405.9L1133.0 405.9L1133.0 415.5L1133.4 420.3L1133.5 396.2L1133.5 396.2L1133.5 389.5L1133.5 389.5L1133.9 416.3L1134.0 403.3L1134.1 407.3L1134.2 415.6L1134.4 392.7L1134.4 392.7L1134.5 404.4L1134.6 411.5L1135.0 393.2L1135.0 393.2L1135.0 403.1L1135.2 388.8L1135.5 419.6L1135.5 419.6L1135.5 406.0L1135.6 395.3L1135.8 415.2L1136.0 411.4L1136.0 407.6L1136.1 399.6L1136.5 415.5L1136.5 415.5L1136.6 405.4L1136.9 395.8L1136.9 415.3L1137.0 407.4L1137.1 409.1L1137.2 388.4L1137.4 413.6L1137.5 399.1L1137.6 391.1L1137.6 391.1L1137.6 413.8L1138.0 406.3L1138.1 400.9L1138.1 398.5L1138.2 414.2L1138.5 402.3L1138.5 397.9L1138.5 397.9L1138.7 415.2L1139.0 408.5L1139.0 407.1L1139.3 416.4L1139.5 402.5L1139.5 402.5L1139.5 401.3L1139.8 411.4L1140.0 391.5L1140.0 391.5L1140.0 414.4L1140.1 401.7L1140.3 415.0L1140.4 403.0L1140.5 409.2L1140.6 414.1L1140.9 398.4L1141.0 404.3L1141.0 398.5L1141.4 422.3L1141.5 397.0L1141.5 397.0L1141.5 403.7L1141.6 412.0L1141.7 400.6L1141.9 408.8L1142.0 410.5L1142.4 414.1L1142.4 396.7L1142.5 409.0L1142.5 412.9L1142.7 416.6L1142.8 394.8L1143.0 407.7L1143.0 415.6L1143.1 398.9L1143.3 415.8L1143.5 401.9L1143.5 413.2L1143.8 392.9L1143.9 416.1L1143.9 405.3L1144.0 399.3L1144.1 395.0L1144.4 412.7L1144.5 406.4L1144.5 398.6L1144.8 415.5L1144.8 396.9L1145.0 405.6L1145.0 405.2L1145.3 418.8L1145.4 399.9L1145.5 409.6L1145.5 413.0L1145.5 413.0L1145.7 395.0L1146.0 408.9L1146.0 403.1L1146.1 414.6L1146.4 397.0L1146.5 399.3L1146.5 403.5L1146.7 418.0L1146.8 399.8L1147.0 408.0L1147.0 414.8L1147.0 414.8L1147.2 397.7L1147.5 412.0L1147.5 406.5L1147.8 400.7L1147.8 428.9L1148.0 412.5L1148.1 410.0L1148.1 394.7L1148.3 417.5L1148.5 414.0L1148.6 406.4L1148.8 413.3L1149.0 400.5L1149.0 400.5L1149.1 430.5L1149.1 430.5L1149.4 397.7L1149.5 406.8L1149.5 414.0L1149.7 420.6L1149.8 397.0L1150.0 416.6L1150.0 416.6L1150.2 418.8L1150.3 400.2L1150.5 404.2L1150.5 399.3L1150.6 417.1L1150.7 394.6L1151.0 401.9L1151.0 406.5L1151.1 390.8L1151.2 419.0L1151.4 404.0L1151.5 400.2L1151.9 413.9L1151.9 399.4L1152.0 409.0L1152.0 415.3L1152.4 394.6L1152.4 421.7L1152.5 414.9L1152.5 414.6L1152.7 425.2L1152.9 400.1L1153.0 409.3L1153.0 400.7L1153.4 413.1L1153.5 396.1L1153.5 396.1L1153.5 399.6L1153.6 413.0L1153.7 396.4L1154.0 397.1L1154.0 409.1L1154.2 396.5L1154.5 413.7L1154.5 413.7L1154.5 406.5L1154.6 426.9L1154.6 400.2L1155.0 404.4L1155.0 392.1L1155.0 392.1L1155.5 70.3L1155.5 70.3L1155.5 60.7L1155.5 60.7L1156.0 396.1L1156.0 396.1L1156.0 401.8L1156.1 421.5L1156.1 393.7L1156.5 406.2L1156.5 399.4L1156.7 394.6L1156.9 424.6L1157.0 398.0L1157.0 410.4L1157.2 401.5L1157.4 415.4L1157.5 401.9L1157.5 414.4L1157.5 414.4L1157.7 398.6L1158.0 399.3L1158.0 404.0L1158.1 394.6L1158.1 408.5L1158.5 404.6L1158.5 398.0L1158.7 394.8L1158.7 414.6L1159.0 404.0L1159.0 403.4L1159.1 409.5L1159.3 394.5L1159.5 408.7L1159.5 401.4L1159.6 426.4L1159.8 398.0L1160.0 403.9L1160.0 405.5L1160.4 394.2L1160.4 420.3L1160.5 400.7L1160.5 405.9L1160.7 409.4L1160.8 397.1L1161.0 402.9L1161.0 409.1L1161.2 398.4L1161.3 421.4L1161.5 409.3L1161.5 417.7L1161.5 417.7L1161.8 396.6L1162.0 406.7L1162.0 406.3L1162.4 413.9L1162.5 391.1L1162.5 391.1L1162.5 415.3L1162.5 415.3L1162.9 396.6L1163.0 403.3L1163.0 421.2L1163.0 421.2L1163.4 399.1L1163.5 407.9L1163.5 398.8L1163.5 398.8L1163.6 411.1L1164.0 401.0L1164.0 405.0L1164.1 414.4L1164.5 399.0L1164.5 399.0L1164.5 409.8L1164.7 418.8L1164.9 398.1L1165.0 408.6L1165.0 399.8L1165.0 399.8L1165.1 415.8L1165.5 400.4L1165.5 404.3L1165.6 395.2L1165.6 413.8L1166.0 408.7L1166.0 410.8L1166.3 417.7L1166.4 396.2L1166.5 403.7L1166.5 404.7L1166.7 417.5L1166.7 396.1L1167.0 397.5L1167.0 413.1L1167.1 401.5L1167.2 424.8L1167.5 407.6L1167.5 408.2L1167.7 418.1L1167.9 397.3L1168.0 406.4L1168.0 407.0L1168.2 417.9L1168.5 390.9L1168.5 390.9L1168.5 399.0L1168.6 395.3L1168.7 413.3L1169.0 397.4L1169.0 404.7L1169.1 398.8L1169.3 410.4L1169.5 401.2L1169.5 411.0L1169.6 395.6L1169.7 413.8L1170.0 409.3L1170.0 398.6L1170.3 395.5L1170.4 413.7L1170.5 407.4L1170.5 401.0L1170.6 394.9L1170.6 413.9L1171.0 404.8L1171.0 399.6L1171.3 420.7L1171.4 396.6L1171.5 401.5L1171.5 407.9L1171.6 400.4L1171.9 422.1L1172.0 404.5L1172.0 402.9L1172.2 415.9L1172.5 397.6L1172.5 397.6L1172.5 406.3L1172.6 392.4L1173.0 416.4L1173.0 416.4L1173.0 405.6L1173.1 418.5L1173.4 398.3L1173.5 405.4L1173.5 412.1L1173.6 416.3L1173.7 396.3L1174.0 408.4L1174.0 401.4L1174.1 398.3L1174.3 414.9L1174.5 399.8L1174.5 409.9L1174.8 420.1L1175.0 395.0L1175.0 395.0L1175.0 400.9L1175.2 399.2L1175.3 418.0L1175.5 402.2L1175.5 410.3L1175.6 422.2L1175.7 393.4L1176.0 409.1L1176.0 410.9L1176.3 411.1L1176.4 396.7L1176.5 403.4L1176.5 401.0L1176.7 413.7L1176.8 391.5L1177.0 398.9L1177.0 406.4L1177.1 396.4L1177.2 412.5L1177.5 407.3L1177.5 398.2L1177.5 398.2L1177.8 421.0L1178.0 406.3L1178.0 399.6L1178.1 399.2L1178.3 416.2L1178.5 401.4L1178.5 402.8L1178.5 420.2L1178.8 392.6L1179.0 403.4L1179.0 400.8L1179.1 394.0L1179.3 413.1L1179.5 403.9L1179.5 395.1L1179.5 395.1L1179.7 411.5L1180.0 402.4L1180.0 403.4L1180.2 400.6L1180.3 419.1L1180.5 404.3L1180.5 408.2L1180.8 396.8L1180.8 423.8L1181.0 399.3L1181.0 406.3L1181.0 401.2L1181.4 416.8L1181.5 404.8L1181.5 404.0L1181.8 396.7L1182.0 418.3L1182.0 418.3L1182.0 402.5L1182.2 395.3L1182.3 417.7L1182.5 404.5L1182.5 411.8L1182.6 398.5L1182.6 418.1L1183.0 410.4L1183.0 398.4L1183.0 398.4L1183.4 426.3L1183.5 404.0L1183.5 412.0L1183.5 412.0L1183.9 390.6L1184.0 409.8L1184.0 408.1L1184.1 424.5L1184.3 396.0L1184.5 404.9L1184.5 422.5L1184.5 422.5L1184.5 397.0L1185.0 411.6L1185.0 403.8L1185.1 397.2L1185.5 420.3L1185.5 420.3L1185.5 405.5L1185.7 429.2L1185.9 400.8L1186.0 402.9L1186.0 405.7L1186.2 393.4L1186.3 429.7L1186.5 407.0L1186.5 400.8L1186.7 416.1L1187.0 397.5L1187.0 397.5L1187.0 403.9L1187.1 418.5L1187.3 395.6L1187.5 414.8L1187.5 401.1L1187.9 396.9L1188.0 420.1L1188.0 420.1L1188.0 415.2L1188.1 400.2L1188.2 421.6L1188.5 411.4L1188.5 400.1L1188.6 415.1L1188.6 392.5L1189.0 409.9L1189.0 410.9L1189.3 396.8L1189.3 412.8L1189.5 406.1L1189.5 415.2L1189.7 395.5L1190.0 421.6L1190.0 421.6L1190.0 405.3L1190.3 397.4L1190.3 416.3L1190.5 402.2L1190.5 400.6L1190.9 396.6L1190.9 420.1L1191.0 414.4L1191.0 405.8L1191.0 421.0L1191.4 399.1L1191.5 405.7L1191.5 402.3L1191.7 396.9L1191.7 411.7L1192.0 405.5L1192.0 404.2L1192.2 435.0L1192.5 396.5L1192.5 396.5L1192.5 402.0L1192.6 397.1L1192.7 416.3L1193.0 412.8L1193.0 414.3L1193.2 388.4L1193.4 421.5L1193.5 408.1L1193.5 402.0L1193.5 398.3L1193.7 417.2L1194.0 405.8L1194.0 408.5L1194.1 394.8L1194.2 418.0L1194.5 404.6L1194.5 413.1L1194.8 414.6L1195.0 396.0L1195.0 396.0L1195.0 432.9L1195.0 432.9L1195.0 395.8L1195.5 408.4L1195.5 405.2L1195.6 411.7L1195.9 392.8L1196.0 394.9L1196.0 405.5L1196.3 413.4L1196.4 393.9L1196.5 408.5L1196.5 397.2L1196.8 413.2L1196.9 395.1L1197.0 400.0L1197.0 396.1L1197.1 415.8L1197.2 395.9L1197.5 399.5L1197.5 406.2L1197.7 416.8L1197.8 396.3L1198.0 401.5L1198.0 410.2L1198.1 418.5L1198.5 395.2L1198.5 410.1L1198.5 404.3L1198.6 412.7L1198.7 399.0L1199.0 401.9L1199.0 401.4L1199.2 396.1L1199.4 416.2L1199.5 412.7L1199.5 402.8L1199.7 396.0L1199.9 417.1L1200.0 407.7L1200.0 398.7L1200.0 391.1L1200.2 417.2L1200.5 409.8L1200.5 405.7L1200.7 395.6L1200.8 421.1L1201.0 397.3L1201.0 404.9L1201.3 416.4L1201.3 398.0L1201.5 413.8L1201.5 390.6L1201.5 390.6L1201.6 417.0L1202.0 412.3L1202.0 404.4L1202.1 428.9L1202.3 395.1L1202.5 409.3L1202.5 419.1L1202.5 419.1L1202.6 398.0L1203.0 410.0L1203.0 413.4L1203.3 394.7L1203.3 415.6L1203.5 409.9L1203.5 424.4L1203.5 424.4L1203.8 400.5L1204.0 406.2L1204.0 411.7L1204.2 390.9L1204.2 421.5L1204.5 415.5L1204.5 403.5L1204.7 420.5L1205.0 391.8L1205.0 391.8L1205.0 402.7L1205.3 418.2L1205.4 396.9L1205.5 405.6L1205.5 426.8L1205.5 426.8L1205.9 390.5L1206.0 415.7L1206.0 411.3L1206.1 395.9L1206.3 416.3L1206.5 400.3L1206.5 408.9L1206.7 415.7L1207.0 393.8L1207.0 403.1L1207.0 412.7L1207.1 413.9L1207.2 395.8L1207.5 406.1L1207.5 406.6L1207.8 399.5L1207.8 415.9L1208.0 408.7L1208.0 404.6L1208.2 395.2L1208.4 420.1L1208.5 402.3L1208.5 415.0L1208.6 397.3L1208.7 423.5L1209.0 401.9L1209.0 406.0L1209.3 394.6L1209.3 419.8L1209.5 409.8L1209.5 397.8L1209.6 392.3L1209.7 422.8L1210.0 418.0L1210.0 415.7L1210.0 415.7L1210.2 396.9L1210.5 402.3L1210.5 405.5L1210.9 398.9L1210.9 422.6L1211.0 403.0L1211.0 399.1L1211.5 394.5L1211.5 418.0L1211.5 418.0L1211.5 404.4L1211.5 391.6L1211.6 415.9L1212.0 409.8L1212.0 398.2L1212.4 396.7L1212.5 422.0L1212.5 422.0L1212.5 414.9L1212.8 398.2L1212.9 420.3L1213.0 407.9L1213.0 405.6L1213.4 414.6L1213.5 397.0L1213.5 397.0L1213.5 401.3L1213.7 428.3L1213.9 398.2L1214.0 409.8L1214.0 405.5L1214.3 412.3L1214.3 398.5L1214.5 411.3L1214.5 418.2L1214.6 426.7L1214.8 393.7L1215.0 409.3L1215.0 403.0L1215.2 416.3L1215.5 395.5L1215.5 395.5L1215.5 401.8L1215.6 396.2L1215.6 417.4L1216.0 402.4L1216.0 398.9L1216.2 390.9L1216.5 428.3L1216.5 428.3L1216.5 397.0L1216.9 391.2L1217.0 417.4L1217.0 394.0L1217.0 398.6L1217.1 385.9L1217.4 416.6L1217.5 406.9L1217.5 400.4L1217.7 395.6L1217.9 415.7L1218.0 415.7L1218.0 400.0L1218.0 400.0L1218.3 420.0L1218.5 410.1L1218.5 407.9L1218.7 421.1L1218.7 398.6L1219.0 417.2L1219.0 413.1L1219.1 393.5L1219.5 426.6L1219.5 426.6L1219.5 408.4L1219.7 293.5L1219.8 418.6L1220.0 406.9L1220.0 406.1L1220.2 396.1L1220.4 415.4L1220.5 412.9L1220.5 402.4L1220.7 396.8L1220.9 421.6L1221.0 400.3L1221.0 404.4L1221.4 415.1L1221.5 396.8L1221.5 396.8L1221.5 407.7L1221.8 418.3L1221.9 395.8L1222.0 414.2L1222.0 405.8L1222.1 432.1L1222.3 395.0L1222.5 406.0L1222.5 417.4L1222.6 423.1L1222.9 396.0L1223.0 404.8L1223.0 402.5L1223.3 418.1L1223.4 394.9L1223.5 413.0L1223.5 402.6L1223.7 393.4L1223.9 415.4L1224.0 397.4L1224.0 397.6L1224.0 396.6L1224.2 415.9L1224.5 397.1L1224.5 404.3L1224.5 396.9L1224.9 412.8L1225.0 407.4L1225.0 411.4L1225.2 391.7L1225.4 425.9L1225.5 401.9L1225.5 412.9L1225.9 419.3L1225.9 397.6L1226.0 402.2L1226.0 400.8L1226.0 429.1L1226.4 392.6L1226.5 401.7L1226.5 405.8L1226.7 395.7L1226.9 428.4L1227.0 409.1L1227.0 398.6L1227.2 392.6L1227.4 416.5L1227.5 393.0L1227.5 415.1L1227.8 423.9L1227.8 394.9L1228.0 401.7L1228.0 407.1L1228.0 415.9L1228.3 391.6L1228.5 405.4L1228.5 401.3L1228.6 413.8L1228.7 396.2L1229.0 399.4L1229.0 408.7L1229.2 393.1L1229.3 419.5L1229.5 398.3L1229.5 416.2L1229.5 416.2L1229.5 397.4L1230.0 411.9L1230.0 411.3L1230.1 414.8L1230.4 392.1L1230.5 397.7L1230.5 408.2L1230.6 414.7L1231.0 390.9L1231.0 390.9L1231.0 411.0L1231.4 393.3L1231.4 421.3L1231.5 403.5L1231.5 407.8L1231.5 415.7L1231.9 393.8L1232.0 411.6L1232.0 407.1L1232.3 396.6L1232.4 430.0L1232.5 408.8L1232.5 401.6L1232.6 393.5L1232.9 420.0L1233.0 403.5L1233.0 401.9L1233.1 398.2L1233.3 417.5L1233.5 408.7L1233.5 411.8L1233.6 413.7L1233.7 393.5L1234.0 396.0L1234.0 405.3L1234.2 394.1L1234.3 416.8L1234.5 403.8L1234.5 408.3L1234.8 396.0L1234.8 424.4L1235.0 404.3L1235.0 403.5L1235.3 413.8L1235.4 395.8L1235.5 408.7L1235.5 410.8L1235.7 414.0L1235.9 392.1L1236.0 400.1L1236.0 409.2L1236.2 397.9L1236.5 427.0L1236.5 413.2L1236.5 410.6L1236.7 397.5L1236.8 425.8L1237.0 399.6L1237.0 412.2L1237.0 394.0L1237.4 420.2L1237.5 406.4L1237.5 412.3L1237.6 415.6L1237.8 394.2L1238.0 415.3L1238.0 399.9L1238.2 389.3L1238.3 418.2L1238.5 406.3L1238.5 401.1L1238.5 425.6L1238.9 393.6L1239.0 401.8L1239.0 398.7L1239.0 398.7L1239.1 419.1L1239.5 406.5L1239.5 412.1L1239.8 396.1L1240.0 413.3L1240.0 403.1L1240.0 397.1L1240.1 428.1L1240.3 393.6L1240.5 401.2L1240.5 407.7L1240.8 393.3L1240.8 428.3L1241.0 404.3L1241.0 404.2L1241.0 399.3L1241.4 415.1L1241.5 405.9L1241.5 418.1L1241.6 397.8L1241.7 419.2L1242.0 415.8L1242.0 408.4L1242.3 419.2L1242.4 397.1L1242.5 406.2L1242.5 405.1L1242.6 394.1L1242.8 422.7L1243.0 403.2L1243.0 402.5L1243.2 395.4L1243.3 418.4L1243.5 409.0L1243.5 398.8L1243.8 397.0L1244.0 415.1L1244.0 406.9L1244.0 407.0L1244.2 394.0L1244.2 417.0L1244.5 404.5L1244.5 413.1L1244.7 394.7L1244.8 426.1L1245.0 406.7L1245.0 402.5L1245.1 423.7L1245.4 395.8L1245.5 398.7L1245.5 411.3L1245.5 420.8L1245.9 394.0L1246.0 405.0L1246.0 404.0L1246.2 393.9L1246.3 414.4L1246.5 401.2L1246.5 408.7L1246.6 390.6L1246.7 417.8L1247.0 398.6L1247.0 402.4L1247.2 423.7L1247.3 394.7L1247.5 395.4L1247.5 404.5L1247.6 431.1L1247.7 396.3L1248.0 406.1L1248.0 408.5L1248.2 419.6L1248.3 392.0L1248.5 403.4L1248.5 428.5L1248.5 428.5L1248.8 391.6L1249.0 404.0L1249.0 408.7L1249.3 413.4L1249.5 397.8L1249.5 410.9L1249.5 402.2L1249.6 399.2L1249.8 425.5L1250.0 406.3L1250.0 406.3L1250.1 391.3L1250.3 416.4L1250.5 407.7L1250.5 399.1L1250.5 395.0L1250.8 416.4L1251.0 403.0L1251.0 406.6L1251.3 416.9L1251.4 392.6L1251.5 407.8L1251.5 412.4L1251.8 395.7L1251.9 413.0L1252.0 406.3L1252.0 402.8L1252.1 424.5L1252.2 393.5L1252.5 402.5L1252.5 401.3L1252.8 430.7L1252.8 391.7L1253.0 400.6L1253.0 409.7L1253.1 420.6L1253.5 395.2L1253.5 401.9L1253.5 409.5L1253.8 395.9L1253.9 418.7L1254.0 402.6L1254.0 417.9L1254.0 417.9L1254.2 390.8L1254.5 403.1L1254.5 400.4L1254.6 394.0L1255.0 425.6L1255.0 410.4L1255.0 408.7L1255.0 393.2L1255.2 417.6L1255.5 406.1L1255.5 401.2L1255.6 393.7L1255.9 415.9L1256.0 409.2L1256.0 395.4L1256.0 395.4L1256.3 414.6L1256.5 399.4L1256.5 403.8L1256.9 396.1L1257.0 416.0L1257.0 416.0L1257.0 394.3L1257.1 391.9L1257.5 417.6L1257.5 417.6L1257.5 409.8L1257.6 414.9L1257.7 313.4L1258.0 402.3L1258.0 409.0L1258.3 419.0L1258.4 396.5L1258.5 407.1L1258.5 400.2L1258.6 416.9L1258.8 396.0L1259.0 403.3L1259.0 396.6L1259.2 413.7L1259.2 390.2L1259.5 408.6L1259.5 406.7L1259.6 411.4L1260.0 392.3L1260.0 403.7L1260.0 402.8L1260.3 392.1L1260.3 423.3L1260.5 410.6L1260.5 405.2L1260.7 420.7L1260.8 397.8L1261.0 406.9L1261.0 417.6L1261.1 420.7L1261.3 395.6L1261.5 407.7L1261.5 399.7L1261.6 393.2L1261.8 422.2L1262.0 405.1L1262.0 408.9L1262.2 393.3L1262.4 419.0L1262.5 399.6L1262.5 403.7L1262.6 395.3L1262.9 423.5L1263.0 399.0L1263.0 402.1L1263.1 419.8L1263.2 397.0L1263.5 406.8L1263.5 397.9L1263.5 397.2L1263.9 419.6L1264.0 410.6L1264.0 395.0L1264.0 395.0L1264.1 423.2L1264.5 408.3L1264.5 411.4L1264.6 415.8L1265.0 393.8L1265.0 407.9L1265.0 404.9L1265.4 392.6L1265.4 418.6L1265.5 401.4L1265.5 422.2L1265.6 422.4L1265.9 387.9L1266.0 405.6L1266.0 402.9L1266.2 425.9L1266.2 389.6L1266.5 407.3L1266.5 403.3L1266.6 395.6L1266.9 413.4L1267.0 408.0L1267.0 403.5L1267.3 393.8L1267.5 423.4L1267.5 423.4L1267.5 405.7L1267.6 390.8L1267.9 425.7L1268.0 407.3L1268.0 407.3L1268.3 414.2L1268.4 395.4L1268.5 409.2L1268.5 407.2L1268.7 395.0L1268.8 417.5L1269.0 411.2L1269.0 418.6L1269.1 420.3L1269.5 394.2L1269.5 404.9L1269.5 407.0L1269.6 395.4L1269.9 427.4L1270.0 402.7L1270.0 404.3L1270.2 395.6L1270.4 418.7L1270.5 409.2L1270.5 407.9L1270.8 395.6L1271.0 417.3L1271.0 408.9L1271.0 399.7L1271.2 427.6L1271.3 392.0L1271.5 403.6L1271.5 404.4L1271.8 418.8L1271.9 394.6L1272.0 406.1L1272.0 404.2L1272.3 391.6L1272.5 421.6L1272.5 421.6L1272.5 395.9L1272.5 392.5L1272.9 425.3L1273.0 400.4L1273.0 410.9L1273.2 393.2L1273.5 412.6L1273.5 408.2L1273.5 399.8L1273.6 417.0L1274.0 395.6L1274.0 400.8L1274.0 401.0L1274.0 394.8L1274.3 426.6L1274.5 400.6L1274.5 405.7L1274.6 418.4L1274.7 392.5L1275.0 402.2L1275.0 413.1L1275.4 420.1L1275.5 392.1L1275.5 410.2L1275.5 403.2L1275.8 417.6L1275.9 394.5L1276.0 408.0L1276.0 407.2L1276.1 395.0L1276.1 423.2L1276.5 404.4L1276.5 412.7L1276.6 424.6L1276.7 395.9L1277.0 401.4L1277.0 400.0L1277.3 418.9L1277.4 392.3L1277.5 406.3L1277.5 397.9L1277.5 415.1L1277.7 395.5L1278.0 409.0L1278.0 396.1L1278.1 415.7L1278.4 394.7L1278.5 402.2L1278.5 421.7L1278.6 393.5L1279.0 424.2L1279.0 405.2L1279.0 402.3L1279.2 432.1L1279.4 394.7L1279.5 403.4L1279.5 415.4L1279.6 416.4L1279.9 393.9L1280.0 401.4L1280.0 422.9L1280.0 422.9L1280.3 395.5L1280.5 405.8L1280.5 402.8L1280.9 393.0L1281.0 434.7L1281.0 395.6L1281.0 396.8L1281.3 415.7L1281.4 387.6L1281.5 402.3L1281.5 398.1L1281.9 391.3L1282.0 421.3L1282.0 409.3L1282.0 410.3L1282.0 391.9L1282.4 420.6L1282.5 419.8L1282.5 404.0L1283.0 394.7L1283.0 421.0L1283.0 397.6L1283.0 401.9L1283.2 396.9L1283.4 419.5L1283.5 401.1L1283.5 402.3L1283.7 393.1L1284.0 433.0L1284.0 404.4L1284.0 407.2L1284.1 395.7L1284.3 419.5L1284.5 399.8L1284.5 417.9L1284.6 397.5L1284.6 419.9L1285.0 408.1L1285.0 408.5L1285.0 395.6L1285.3 412.1L1285.5 408.4L1285.5 407.7L1285.9 421.4L1286.0 393.4L1286.0 393.4L1286.0 387.7L1286.2 339.5L1286.3 426.5L1286.5 399.8L1286.5 400.4L1286.6 420.6L1287.0 390.9L1287.0 390.9L1287.0 406.4L1287.3 420.0L1287.4 395.8L1287.5 402.8L1287.5 410.6L1287.7 420.9L1287.9 389.9L1288.0 401.1L1288.0 402.4L1288.2 420.5L1288.4 393.8L1288.5 403.9L1288.5 401.7L1288.6 416.7L1288.7 392.2L1289.0 411.0L1289.0 410.7L1289.1 397.1L1289.4 428.4L1289.5 413.2L1289.5 412.9L1289.7 392.5L1290.0 422.5L1290.0 404.9L1290.0 401.7L1290.1 396.8L1290.3 419.9L1290.5 410.9L1290.5 397.0L1290.8 422.5L1290.9 386.9L1291.0 401.5L1291.0 408.0L1291.0 393.4L1291.2 424.2L1291.5 404.6L1291.5 402.6L1291.5 391.3L1291.9 419.1L1292.0 406.5L1292.0 415.0L1292.2 422.5L1292.5 393.3L1292.5 393.3L1292.5 412.6L1292.7 420.5L1293.0 395.3L1293.0 410.4L1293.0 416.0L1293.0 416.0L1293.4 396.7L1293.5 407.2L1293.5 405.0L1293.7 393.1L1293.7 418.5L1294.0 400.1L1294.0 411.4L1294.1 425.5L1294.2 395.9L1294.5 402.3L1294.5 402.4L1294.6 395.4L1294.6 418.2L1295.0 397.6L1295.0 407.0L1295.1 416.0L1295.2 389.6L1295.5 400.7L1295.5 409.8L1295.8 419.3L1296.0 392.8L1296.0 413.0L1296.0 402.7L1296.2 415.8L1296.2 395.3L1296.5 405.1L1296.5 406.6L1296.7 418.3L1296.9 395.1L1297.0 407.1L1297.0 401.4L1297.2 391.4L1297.4 416.6L1297.5 396.7L1297.5 429.0L1297.5 429.0L1297.7 390.6L1298.0 409.0L1298.0 402.1L1298.2 424.4L1298.5 392.9L1298.5 409.4L1298.5 408.0L1298.7 394.4L1298.9 419.4L1299.0 407.8L1299.0 404.8L1299.3 396.7L1299.4 433.1L1299.5 405.1L1299.5 406.1L1300.0 422.7L1300.0 391.3L1300.0 391.3L1300.0 406.7L1300.1 393.6L1300.2 423.1L1300.5 406.7L1300.5 408.4L1300.9 417.9L1300.9 394.0L1301.0 401.9L1301.0 401.0L1301.3 389.6L1301.5 417.2L1301.5 404.1L1301.5 408.1L1301.6 392.4L1301.7 416.7L1302.0 399.8L1302.0 410.1L1302.0 428.6L1302.5 392.2L1302.5 401.1L1302.5 398.7L1302.8 394.4L1302.9 429.7L1303.0 408.6L1303.0 412.5L1303.0 420.7L1303.1 393.0L1303.5 419.9L1303.5 397.8L1303.9 391.0L1303.9 424.1L1304.0 415.6L1304.0 416.8L1304.2 419.2L1304.3 393.7L1304.5 399.6L1304.5 399.1L1304.5 429.2L1304.7 387.7L1305.0 416.2L1305.0 400.2L1305.1 419.1L1305.4 391.3L1305.5 409.6L1305.5 400.4L1305.6 395.6L1306.0 422.0L1306.0 398.1L1306.0 415.5L1306.1 393.7L1306.2 417.2L1306.5 410.1L1306.5 407.9L1306.6 394.1L1306.7 427.5L1307.0 395.8L1307.0 400.5L1307.1 414.5L1307.1 365.7L1307.5 399.5L1307.5 408.3L1307.7 416.6L1307.7 390.0L1308.0 411.4L1308.0 391.3L1308.1 390.4L1308.2 427.8L1308.5 400.5L1308.5 406.8L1308.6 419.8L1308.9 396.3L1309.0 408.3L1309.0 401.3L1309.2 392.8L1309.4 418.4L1309.5 402.7L1309.5 400.9L1309.9 416.3L1310.0 393.0L1310.0 393.0L1310.0 399.0L1310.2 421.0L1310.3 395.2L1310.5 407.4L1310.5 417.9L1310.8 423.4L1311.0 390.0L1311.0 403.0L1311.0 400.2L1311.1 392.6L1311.2 426.2L1311.5 405.9L1311.5 394.4L1311.5 394.4L1311.9 417.5L1312.0 402.1L1312.0 409.0L1312.1 393.4L1312.2 423.6L1312.5 414.3L1312.5 401.9L1312.6 395.3L1312.8 423.7L1313.0 404.3L1313.0 403.7L1313.4 394.2L1313.5 423.3L1313.5 395.5L1313.5 408.1L1313.8 417.0L1314.0 393.5L1314.0 405.3L1314.0 404.5L1314.3 423.7L1314.3 394.3L1314.5 416.3L1314.5 408.9L1314.6 418.7L1314.6 391.9L1315.0 408.2L1315.0 414.6L1315.0 392.0L1315.3 426.8L1315.5 397.1L1315.5 397.8L1315.7 421.4L1315.8 393.3L1316.0 402.6L1316.0 405.7L1316.0 391.9L1316.5 422.1L1316.5 404.8L1316.5 413.0L1316.7 416.1L1316.7 394.8L1317.0 407.6L1317.0 398.0L1317.3 421.4L1317.4 394.5L1317.5 414.5L1317.5 390.3L1317.5 390.3L1317.5 418.5L1318.0 399.3L1318.0 410.8L1318.3 392.7L1318.5 417.8L1318.5 417.8L1318.5 391.1L1318.5 391.1L1318.9 419.7L1319.0 405.8L1319.0 403.6L1319.0 388.7L1319.3 422.8L1319.5 405.3L1319.5 406.7L1319.9 414.7L1319.9 387.1L1320.0 405.5L1320.0 408.2L1320.3 393.9L1320.4 419.9L1320.5 396.4L1320.5 410.1L1320.7 390.8L1321.0 421.4L1321.0 397.3L1321.0 403.4L1321.1 393.2L1321.4 416.4L1321.5 399.2L1321.5 407.3L1321.7 393.5L1321.7 424.6L1322.0 398.8L1322.0 396.5L1322.1 426.7L1322.3 391.7L1322.5 397.3L1322.5 401.5L1322.7 420.1L1323.0 393.2L1323.0 415.3L1323.0 403.8L1323.3 389.2L1323.4 416.9L1323.5 411.8L1323.5 420.3L1323.7 434.3L1323.7 394.5L1324.0 410.3L1324.0 400.9L1324.2 425.6L1324.4 394.8L1324.5 412.6L1324.5 400.5L1324.8 393.7L1324.9 423.1L1325.0 401.6L1325.0 393.2L1325.1 420.5L1325.4 388.7L1325.5 394.9L1325.5 407.9L1325.6 422.7L1325.7 393.0L1326.0 405.2L1326.0 405.7L1326.1 391.0L1326.5 423.1L1326.5 398.6L1326.5 422.1L1326.6 423.6L1326.8 391.9L1327.0 410.3L1327.0 401.5L1327.1 420.0L1327.2 393.6L1327.5 405.0L1327.5 408.5L1327.8 391.0L1327.9 428.2L1328.0 402.8L1328.0 409.4L1328.2 418.8L1328.4 394.7L1328.5 402.6L1328.5 406.9L1328.6 391.6L1328.8 419.8L1329.0 405.4L1329.0 399.9L1329.0 423.1L1329.4 392.9L1329.5 405.3L1329.5 408.8L1329.5 426.8L1329.6 394.4L1330.0 411.3L1330.0 395.2L1330.0 395.2L1330.4 424.8L1330.5 405.4L1330.5 399.8L1330.6 394.1L1330.8 419.6L1331.0 399.8L1331.0 416.6L1331.4 392.4L1331.5 426.6L1331.5 426.6L1331.5 408.8L1331.7 393.7L1331.9 425.7L1332.0 412.2L1332.0 403.3L1332.0 393.1L1332.2 423.1L1332.5 400.1L1332.5 402.3L1332.6 412.1L1332.9 391.6L1333.0 403.1L1333.0 415.7L1333.1 422.1L1333.4 393.7L1333.5 405.3L1333.5 399.1L1333.8 422.2L1333.9 392.4L1334.0 398.4L1334.0 397.3L1334.4 391.1L1334.5 424.5L1334.5 406.9L1334.5 400.4L1334.6 423.7L1334.9 396.7L1335.0 413.1L1335.0 405.0L1335.0 390.8L1335.5 419.1L1335.5 402.0L1335.5 394.9L1335.6 424.6L1335.7 391.7L1336.0 401.1L1336.0 418.1L1336.0 418.1L1336.2 391.1L1336.5 408.1L1336.5 400.6L1336.7 420.7L1336.9 390.8L1337.0 403.4L1337.0 406.5L1337.1 418.4L1337.3 391.8L1337.5 408.4L1337.5 409.6L1337.5 393.6L1337.7 425.3L1338.0 413.9L1338.0 413.8L1338.4 418.2L1338.5 394.6L1338.5 398.6L1338.5 403.1L1338.5 419.6L1339.0 395.0L1339.0 397.6L1339.0 410.9L1339.0 389.8L1339.2 423.1L1339.5 408.4L1339.5 397.8L1339.8 392.7L1339.8 424.0L1340.0 409.6L1340.0 401.3L1340.3 392.3L1340.3 429.2L1340.5 412.8L1340.5 394.6L1340.6 392.0L1340.6 424.9L1341.0 404.8L1341.0 405.2L1341.1 420.0L1341.1 393.3L1341.5 410.3L1341.5 394.0L1341.6 390.4L1341.6 424.0L1342.0 419.0L1342.0 394.7L1342.3 393.2L1342.3 421.3L1342.5 404.9L1342.5 415.1L1342.5 433.9L1342.7 392.6L1343.0 402.6L1343.0 396.8L1343.0 393.2L1343.1 434.0L1343.5 398.6L1343.5 414.3L1343.6 424.9L1343.9 390.8L1344.0 399.4L1344.0 396.5L1344.1 420.7L1344.3 393.9L1344.5 413.5L1344.5 411.2L1344.6 422.3L1344.8 391.1L1345.0 406.1L1345.0 408.6L1345.0 393.1L1345.4 417.6L1345.5 403.2L1345.5 406.4L1345.7 392.0L1346.0 422.9L1346.0 401.7L1346.0 410.8L1346.0 418.8L1346.5 394.7L1346.5 395.9L1346.5 400.8L1346.8 432.3L1347.0 392.5L1347.0 402.1L1347.0 402.6L1347.1 419.6L1347.3 391.8L1347.5 411.4L1347.5 402.1L1347.7 392.2L1348.0 420.6L1348.0 406.9L1348.0 416.7L1348.1 390.6L1348.3 421.5L1348.5 405.8L1348.5 406.9L1348.7 420.7L1348.8 393.1L1349.0 414.4L1349.0 403.0L1349.2 393.5L1349.3 419.6L1349.5 406.0L1349.5 398.4L1349.9 421.3L1350.0 391.4L1350.0 399.9L1350.0 401.7L1350.1 393.1L1350.2 419.7L1350.5 401.4L1350.5 411.8L1350.6 391.1L1351.0 420.6L1351.0 395.7L1351.0 410.4L1351.1 391.0L1351.3 427.1L1351.5 401.4L1351.5 415.8L1351.8 416.1L1351.9 394.9L1352.0 398.1L1352.0 394.3L1352.1 421.9L1352.3 392.2L1352.5 402.8L1352.5 393.9L1352.5 427.1L1352.6 392.9L1353.0 397.1L1353.0 402.3L1353.1 420.2L1353.2 393.2L1353.5 411.1L1353.5 409.1L1353.6 392.7L1353.6 421.5L1354.0 404.6L1354.0 399.1L1354.2 424.2L1354.4 394.4L1354.5 412.0L1354.5 401.9L1354.8 425.1L1354.9 391.8L1355.0 397.7L1355.0 408.8L1355.0 418.1L1355.3 393.0L1355.5 397.4L1355.5 412.7L1355.6 419.0L1355.7 395.2L1356.0 404.9L1356.0 402.3L1356.4 392.1L1356.4 421.1L1356.5 398.5L1356.5 404.7L1356.6 417.2L1356.8 389.7L1357.0 410.5L1357.0 401.8L1357.0 421.3L1357.1 390.3L1357.5 411.3L1357.5 398.3L1357.8 420.0L1358.0 391.5L1358.0 406.0L1358.0 403.3L1358.2 420.6L1358.3 390.7L1358.5 400.9L1358.5 399.6L1358.7 393.2L1358.7 422.9L1359.0 399.0L1359.0 410.4L1359.1 418.4L1359.2 389.3L1359.5 404.5L1359.5 413.3L1359.5 427.8L1359.6 392.9L1360.0 401.7L1360.0 407.2L1360.1 424.3L1360.2 392.6L1360.5 411.2L1360.5 411.4L1360.6 427.4L1360.6 393.4L1361.0 403.1L1361.0 408.5L1361.2 391.9L1361.4 415.8L1361.5 402.3L1361.5 417.2L1361.5 393.1L1361.7 423.1L1362.0 406.3L1362.0 402.2L1362.4 390.5L1362.4 422.6L1362.5 405.7L1362.5 398.1L1362.5 389.5L1362.7 416.1L1363.0 406.7L1363.0 404.5L1363.2 446.6L1363.3 395.0L1363.5 398.9L1363.5 397.8L1363.7 394.6L1363.9 418.5L1364.0 399.6L1364.0 401.8L1364.0 428.8L1364.4 390.1L1364.5 409.3L1364.5 403.9L1364.7 416.3L1364.7 391.8L1365.0 405.8L1365.0 405.0L1365.2 392.2L1365.4 423.9L1365.5 403.2L1365.5 405.2L1365.5 393.7L1366.0 420.5L1366.0 418.7L1366.0 401.4L1366.1 423.9L1366.5 391.5L1366.5 418.3L1366.5 417.9L1366.7 392.4L1367.0 423.2L1367.0 411.1L1367.0 389.8L1367.0 389.8L1367.0 421.5L1367.5 412.3L1367.5 416.2L1367.7 393.8L1367.7 420.8L1368.0 396.8L1368.0 402.3L1368.2 389.4L1368.3 418.1L1368.5 404.6L1368.5 404.8L1368.5 394.3L1368.7 426.8L1369.0 403.3L1369.0 398.2L1369.2 392.8L1369.2 420.3L1369.5 407.0L1369.5 415.6L1369.5 389.6L1369.8 416.7L1370.0 410.2L1370.0 400.3L1370.0 392.8L1370.5 425.6L1370.5 400.9L1370.5 401.9L1370.7 393.1L1371.0 422.6L1371.0 405.6L1371.0 403.3L1371.3 390.4L1371.3 421.7L1371.5 410.6L1371.5 399.7L1371.5 389.4L1371.9 422.2L1372.0 400.4L1372.0 412.4L1372.1 388.4L1372.5 419.7L1372.5 417.7L1372.5 395.7L1372.8 392.9L1372.9 417.7L1373.0 410.8L1373.0 399.2L1373.1 424.5L1373.3 392.0L1373.5 402.1L1373.5 398.6L1373.9 389.1L1373.9 424.0L1374.0 406.2L1374.0 401.7L1374.1 391.8L1374.3 430.1L1374.5 398.6L1374.5 405.7L1374.5 422.4L1374.7 393.8L1375.0 418.0L1375.0 405.2L1375.3 422.8L1375.4 388.3L1375.5 390.3L1375.5 402.2L1375.9 422.4L1375.9 392.3L1376.0 405.1L1376.0 402.5L1376.2 421.3L1376.4 391.8L1376.5 409.0L1376.5 405.8L1376.7 421.5L1376.7 388.9L1377.0 396.4L1377.0 396.4L1377.0 428.8L1377.4 393.6L1377.5 407.9L1377.5 396.5L1377.7 424.6L1378.0 393.8L1378.0 399.8L1378.0 402.8L1378.3 420.2L1378.3 390.3L1378.5 395.9L1378.5 404.0L1378.8 421.5L1378.9 391.7L1379.0 403.0L1379.0 401.6L1379.1 389.2L1379.4 423.5L1379.5 400.4L1379.5 403.5L1379.9 389.5L1379.9 423.1L1380.0 398.7L1380.0 411.3L1380.1 389.4L1380.2 423.3L1380.5 412.2L1380.5 402.6L1380.6 391.8L1380.9 421.6L1381.0 401.7L1381.0 406.4L1381.1 390.9L1381.4 423.5L1381.5 398.2L1381.5 413.3L1381.6 391.1L1381.8 418.4L1382.0 406.2L1382.0 398.2L1382.0 390.5L1382.1 425.7L1382.5 393.8L1382.5 401.7L1382.8 423.0L1383.0 390.3L1383.0 398.4L1383.0 405.2L1383.1 431.1L1383.4 391.2L1383.5 397.6L1383.5 401.6L1383.8 393.3L1383.9 423.8L1384.0 408.5L1384.0 396.8L1384.3 391.1L1384.4 422.8L1384.5 393.0L1384.5 408.9L1384.6 423.7L1384.9 390.5L1385.0 396.2L1385.0 410.5L1385.2 420.1L1385.5 385.7L1385.5 401.8L1385.5 401.8L1385.8 425.3L1385.9 391.9L1386.0 409.4L1386.0 409.5L1386.3 392.4L1386.4 430.1L1386.5 407.0L1386.5 405.4L1386.7 418.8L1386.9 389.3L1387.0 401.7L1387.0 416.6L1387.2 390.5L1387.3 424.8L1387.5 406.5L1387.5 392.7L1387.6 421.9L1387.8 390.9L1388.0 403.6L1388.0 405.8L1388.3 423.8L1388.4 389.9L1388.5 402.6L1388.5 399.3L1388.5 392.7L1389.0 424.1L1389.0 393.1L1389.0 400.5L1389.1 423.4L1389.4 392.9L1389.5 401.3L1389.5 405.0L1389.6 391.6L1389.9 419.7L1390.0 404.2L1390.0 389.9L1390.0 389.9L1390.4 421.7L1390.5 399.9L1390.5 400.6L1390.9 391.7L1390.9 423.5L1391.0 399.6L1391.0 405.7L1391.3 421.8L1391.4 392.7L1391.5 404.8L1391.5 409.9L1391.7 393.9L1391.7 421.7L1392.0 404.5L1392.0 401.2L1392.2 394.6L1392.4 432.5L1392.5 401.6L1392.5 406.6L1392.7 388.5L1392.9 425.5L1393.0 409.8L1393.0 402.9L1393.1 426.3L1393.2 389.9L1393.5 407.1L1393.5 404.2L1393.7 420.6L1393.7 392.3L1394.0 393.4L1394.0 409.1L1394.3 425.8L1394.5 393.2L1394.5 401.0L1394.5 400.9L1394.7 422.6L1394.7 393.0L1395.0 409.2L1395.0 415.5L1395.4 421.1L1395.4 390.3L1395.5 403.7L1395.5 408.9L1395.7 423.8L1395.7 389.3L1396.0 407.3L1396.0 408.1L1396.4 389.8L1396.4 422.6L1396.5 407.9L1396.5 406.6L1396.6 417.5L1396.7 392.2L1397.0 399.6L1397.0 398.9L1397.2 422.0L1397.3 389.9L1397.5 397.8L1397.5 401.3L1397.8 391.8L1398.0 425.9L1398.0 409.6L1398.0 402.4L1398.2 391.9L1398.5 420.3L1398.5 402.2L1398.5 407.5L1398.7 392.4L1398.9 416.9L1399.0 403.5L1399.0 400.6L1399.4 422.7L1399.4 393.5L1399.5 405.6L1399.5 411.2L1399.6 388.1L1399.9 419.6L1400.0 418.7L1400.0 398.1L1400.2 392.5L1400.4 427.2L1400.5 398.2L1400.5 407.3L1400.8 430.3L1401.0 390.1L1401.0 401.4L1401.0 406.6L1401.1 390.0L1401.4 429.3L1401.5 392.6L1401.5 404.4L1401.5 392.3L1401.7 419.5L1402.0 407.7L1402.0 398.0L1402.0 390.5L1402.4 422.5L1402.5 400.9L1402.5 402.7L1402.6 391.2L1402.7 424.8L1403.0 408.5L1403.0 405.9L1403.0 418.1L1403.3 392.5L1403.5 398.9L1403.5 399.1L1403.7 423.1L1403.8 390.9L1404.0 395.7L1404.0 402.4L1404.4 391.9L1404.5 423.5L1404.5 409.1L1404.5 406.0L1404.7 417.6L1404.9 390.8L1405.0 402.3L1405.0 400.4L1405.3 419.0L1405.3 391.8L1405.5 399.7L1405.5 407.6L1405.5 423.1L1406.0 389.4L1406.0 400.0L1406.0 401.0L1406.1 426.5L1406.2 391.2L1406.5 406.5L1406.5 408.0L1406.6 429.6L1406.6 390.6L1407.0 404.8L1407.0 400.4L1407.2 420.7L1407.5 391.5L1407.5 401.4L1407.5 396.4L1407.9 392.4L1407.9 421.0L1408.0 401.2L1408.0 401.2L1408.3 422.7L1408.4 392.2L1408.5 400.3L1408.5 403.1L1408.7 431.3L1408.9 390.9L1409.0 400.2L1409.0 414.3L1409.1 391.9L1409.2 419.1L1409.5 410.3L1409.5 400.0L1409.6 392.2L1409.9 422.3L1410.0 397.3L1410.0 411.8L1410.4 389.8L1410.4 423.7L1410.5 410.5L1410.5 406.9L1410.8 421.1L1410.9 393.3L1411.0 400.2L1411.0 412.0L1411.2 386.9L1411.3 424.9L1411.5 406.9L1411.5 408.4L1411.7 417.9L1411.8 391.2L1412.0 415.6L1412.0 407.9L1412.2 391.5L1412.2 425.2L1412.5 411.2L1412.5 399.5L1412.7 425.8L1412.8 392.9L1413.0 406.9L1413.0 405.7L1413.1 425.4L1413.4 393.0L1413.5 414.5L1413.5 389.6L1413.5 389.6L1414.0 426.1L1414.0 403.4L1414.0 407.6L1414.1 431.7L1414.3 392.2L1414.5 403.3L1414.5 401.3L1414.7 421.2L1414.7 390.1L1415.0 396.1L1415.0 410.1L1415.0 393.5L1415.3 417.3L1415.5 396.3L1415.5 406.8L1415.6 429.1L1415.8 388.5L1416.0 397.6L1416.0 401.5L1416.0 423.8L1416.5 392.1L1416.5 399.8L1416.5 411.3L1416.6 392.3L1416.7 419.6L1417.0 394.0L1417.0 408.1L1417.3 418.4L1417.3 389.2L1417.5 402.0L1417.5 404.0L1417.5 389.8L1417.9 421.9L1418.0 411.1L1418.0 391.1L1418.0 391.1L1418.4 425.1L1418.5 404.6L1418.5 403.8L1419.0 392.4L1419.0 422.7L1419.0 399.9L1419.0 405.8L1419.1 430.2L1419.3 390.5L1419.5 398.7L1419.5 399.4L1419.6 388.6L1419.9 423.1L1420.0 402.3L1420.0 397.0L1420.0 423.9L1420.3 389.8L1420.5 404.6L1420.5 400.0L1420.5 425.6L1420.8 393.4L1421.0 399.7L1421.0 402.5L1421.3 392.4L1421.4 421.0L1421.5 398.6L1421.5 406.3L1421.5 393.0L1421.6 421.4L1422.0 403.5L1422.0 406.4L1422.1 421.0L1422.5 389.8L1422.5 396.0L1422.5 397.1L1422.6 419.6L1422.8 391.2L1423.0 409.0L1423.0 399.6L1423.1 389.7L1423.2 423.1L1423.5 395.3L1423.5 404.5L1423.7 391.7L1423.9 417.4L1424.0 404.0L1424.0 400.7L1424.1 390.2L1424.2 433.0L1424.5 404.4L1424.5 405.2L1424.7 392.7L1424.9 425.6L1425.0 411.0L1425.0 409.8L1425.1 422.7L1425.2 390.6L1425.5 404.5L1425.5 399.1L1425.9 420.1L1425.9 391.0L1426.0 401.7L1426.0 410.4L1426.0 425.1L1426.3 390.9L1426.5 405.5L1426.5 400.9L1426.6 424.3L1426.8 392.1L1427.0 404.9L1427.0 412.5L1427.1 385.1L1427.2 425.2L1427.5 398.8L1427.5 398.0L1427.9 431.2L1428.0 387.8L1428.0 391.9L1428.0 395.5L1428.2 389.7L1428.3 420.5L1428.5 397.9L1428.5 412.0L1428.6 390.6L1428.7 421.3L1429.0 398.5L1429.0 403.5L1429.4 391.8L1429.5 422.9L1429.5 394.9L1429.5 412.2L1429.6 418.3L1430.0 390.6L1430.0 403.1L1430.0 407.2L1430.0 423.4L1430.2 391.0L1430.5 401.2L1430.5 414.9L1430.6 422.4L1430.7 392.8L1431.0 410.2L1431.0 397.4L1431.4 417.0L1431.5 391.0L1431.5 404.7L1431.5 403.5L1431.6 391.7L1432.0 423.2L1432.0 400.1L1432.0 395.1L1432.2 420.8L1432.3 392.8L1432.5 400.7L1432.5 398.1L1432.5 418.4L1433.0 393.0L1433.0 411.1L1433.0 404.6L1433.3 430.9L1433.4 390.8L1433.5 408.9L1433.5 410.3L1433.7 424.5L1433.7 389.4L1434.0 401.4L1434.0 397.6L1434.2 427.7L1434.2 391.6L1434.5 403.5L1434.5 406.9L1434.7 390.1L1434.8 422.9L1435.0 412.5L1435.0 405.3L1435.1 430.8L1435.3 389.6L1435.5 405.3L1435.5 400.1L1435.7 428.6L1435.8 391.7L1436.0 403.2L1436.0 399.4L1436.4 392.2L1436.5 424.2L1436.5 401.4L1436.5 409.4L1436.5 421.6L1436.6 395.5L1436.6 398.0" stroke="#3f5ea2"/><path d="M788.2 411.8L790.7 403.1L793.2 395.5L795.7 430.4L798.0 426.4L800.3 401.9L802.6 409.2L804.8 413.5L807.0 401.2L809.1 418.3L811.1 394.5L813.1 409.7L815.1 410.3L817.0 398.8L818.9 394.4L820.8 410.4L822.6 397.1L824.4 408.5L826.1 402.1L827.9 408.4L829.5 403.9L831.2 411.3L832.8 403.8L834.4 424.4L836.0 398.6L837.6 419.1L839.1 409.9L840.6 416.1L842.0 407.4L843.5 411.1L844.9 417.8L846.3 402.8L847.7 402.0L849.1 422.4L850.4 411.9L851.8 392.1L853.1 423.4L854.4 407.9L855.6 401.0L856.9 416.6L858.1 410.1L859.4 417.1L860.6 411.0L861.8 406.0L862.9 412.9L864.1 405.3L865.3 397.3L866.4 406.4L867.5 411.9L868.6 418.4L869.7 405.9L870.8 403.0L871.9 395.6L872.9 409.8L874.0 395.0L875.0 379.5L876.0 388.3L877.1 414.6L878.1 411.1L879.0 408.5L880.0 405.5L881.0 400.2L882.0 433.9L882.9 413.3L883.8 399.9L884.8 400.1L885.7 406.2L886.6 410.2L887.5 413.4L888.4 405.9L889.3 412.3L890.2 402.0L891.1 408.5L891.9 410.0L892.8 415.9L893.6 404.0L894.5 404.2L895.3 435.0L896.1 404.9L896.9 403.3L897.8 416.9L898.6 414.1L899.4 411.8L900.1 409.1L900.9 407.2L901.7 414.6L902.5 402.8L903.2 406.4L904.0 399.6L904.7 433.9L905.5 411.3L906.2 414.0L907.0 409.3L907.7 403.6L908.4 398.0L909.1 406.9L909.9 409.6L910.6 404.2L911.3 413.0L912.0 404.8L912.6 409.3L913.3 408.7L914.0 402.6L914.7 423.0L915.4 413.2L916.0 411.6L916.7 407.1L917.4 410.1L918.0 408.6L918.7 412.4L919.3 402.1L919.9 405.0L920.6 404.5L921.2 404.9L921.8 409.2L922.4 416.0L923.1 420.8L923.7 431.2L924.3 399.5L924.9 408.4L925.5 405.5L926.1 405.7L926.7 418.0L927.3 410.9L927.9 402.8L928.5 408.0L929.0 420.3L929.6 396.4L930.2 402.2L930.8 399.5L931.3 405.5L931.9 401.2L932.4 421.2L933.0 406.9L933.5 411.7L934.1 414.8L934.6 410.1L935.2 419.3L935.7 404.2L936.3 404.5L936.8 405.9L937.3 409.0L937.9 406.7L938.4 408.7L938.9 397.0L939.4 399.2L939.9 403.4L940.5 415.9L941.0 409.5L941.5 414.4L942.0 414.7L942.5 421.5L943.0 408.7L943.5 402.7L944.0 402.7L944.5 410.7L944.9 412.3L945.4 399.1L945.9 421.5L946.4 407.9L946.9 402.5L947.4 402.9L947.8 413.2L948.3 401.8L948.8 400.2L949.2 412.1L949.7 399.6L950.2 408.3L950.6 422.8L951.1 395.4L951.5 389.3L952.0 418.6L952.4 404.3L952.9 403.1L953.3 404.7L953.8 402.5L954.2 407.5L954.7 406.3L955.1 403.8L955.5 412.3L956.0 409.8L956.4 403.3L956.8 417.1L957.3 411.7L957.7 406.3L958.1 407.4L958.5 407.4L959.0 400.0L959.4 403.2L959.8 405.4L960.2 410.1L960.6 406.2L961.0 400.2L961.5 403.8L961.9 417.5L962.3 403.6L962.7 400.2L963.1 394.7L963.5 396.8L963.9 402.7L964.3 417.3L964.7 407.2L965.1 402.1L965.5 418.8L965.8 402.7L966.2 417.4L966.6 415.4L967.0 402.3L967.4 410.0L967.8 400.3L968.2 409.0L968.5 408.7L968.9 417.1L969.3 417.2L969.7 408.5L970.0 403.1L970.4 409.5L970.8 403.3L971.2 408.8L971.5 407.3L971.9 409.0L972.3 399.5L972.6 397.6L973.0 398.0L973.3 398.7L973.7 408.5L974.1 421.8L974.4 411.7L974.8 409.8L975.1 407.6L975.5 400.4L975.8 411.5L976.2 409.5L976.5 407.6L976.9 408.0L977.2 401.0L977.6 392.6L977.9 376.8L978.3 393.8L978.6 403.3L978.9 415.4L979.3 406.7L979.6 413.6L980.0 395.7L980.3 406.7L980.6 417.2L981.0 410.5L981.3 402.8L981.6 399.4L981.9 412.9L982.3 407.7L982.6 415.6L982.9 402.0L983.2 405.6L983.6 404.8L983.9 406.2L984.2 411.6L984.5 398.6L984.9 410.6L985.2 391.8L985.5 435.9L985.8 402.4L986.1 399.2L986.4 404.3L986.7 409.1L987.1 409.7L987.4 409.9L987.7 404.2L988.0 400.9L988.3 415.4L988.6 401.3L988.9 399.5L989.2 407.0L989.5 403.1L989.8 402.4L990.1 407.8L990.4 406.7L990.7 413.2L991.0 415.3L991.3 403.1L991.6 418.1L991.9 409.6L992.2 408.5L992.5 404.4L992.8 413.3L993.1 397.7L993.4 399.3L993.7 408.1L994.0 404.4L994.2 408.1L994.5 406.5L994.8 406.8L995.1 409.4L995.4 408.3L995.7 404.9L996.0 408.9L996.2 397.2L996.5 407.5L996.8 412.2L997.1 421.8L997.4 390.9L997.6 416.6L997.9 402.4L998.2 404.4L998.5 401.5L998.7 412.8L999.0 410.7L999.3 408.6L999.6 409.8L999.8 408.0L1000.1 406.6L1000.4 397.9L1000.7 400.9L1000.9 416.9L1001.2 420.9L1001.5 417.3L1001.7 408.3L1002.0 399.8L1002.3 404.5L1002.5 410.6L1002.8 422.9L1003.0 407.3L1003.3 406.7L1003.6 396.3L1003.8 412.4L1004.1 424.0L1004.3 415.4L1004.6 403.5L1004.9 409.2L1005.1 414.2L1005.4 391.6L1005.6 406.1L1005.9 401.6L1006.1 399.9L1006.4 397.8L1006.6 402.0L1006.9 413.2L1007.1 399.2L1007.4 402.3L1007.6 411.2L1007.9 404.8L1008.1 409.2L1008.4 406.8L1008.6 409.6L1008.9 400.5L1009.1 397.3L1009.4 397.0L1009.6 404.8L1009.9 407.8L1010.1 401.6L1010.4 412.7L1010.6 397.5L1010.8 401.4L1011.1 418.0L1011.3 401.4L1011.6 410.5L1011.8 398.1L1012.0 410.1L1012.3 409.0L1012.5 409.2L1012.5 409.2L1013.0 398.2L1013.0 398.2L1013.2 409.3L1013.5 407.7L1013.7 407.7L1013.9 405.3L1014.2 402.3L1014.4 390.1L1014.6 405.8L1014.9 427.8L1015.1 410.8L1015.3 399.5L1015.5 412.6L1015.8 392.9L1016.0 405.6L1016.0 405.6L1016.5 417.3L1016.5 417.3L1016.7 409.0L1016.9 401.9L1017.1 407.5L1017.4 416.7L1017.6 408.3L1017.8 433.0L1018.0 402.4L1018.0 402.4L1018.3 414.2L1018.5 410.2L1018.7 404.4L1018.9 403.7L1019.2 407.2L1019.4 405.3L1019.6 415.3L1019.8 403.0L1020.0 420.6L1020.0 420.6L1020.5 401.8L1020.5 401.8L1020.7 406.9L1020.9 402.1L1021.1 401.6L1021.3 410.7L1021.6 406.2L1021.8 411.4L1022.0 398.7L1022.0 398.7L1022.2 397.0L1022.4 406.9L1022.6 421.8L1022.8 396.5L1023.0 412.9L1023.3 410.0L1023.5 416.7L1023.5 416.7L1023.7 411.7L1023.9 413.2L1024.1 399.6L1024.3 397.1L1024.5 415.5L1024.7 417.0L1024.9 413.0L1024.9 413.0L1025.1 404.7L1025.3 404.1L1025.6 411.0L1025.6 411.0L1025.8 397.7L1026.0 403.5L1026.2 407.8L1026.4 404.7L1026.6 407.0L1026.6 407.0L1027.0 396.9L1027.0 396.9L1027.2 406.6L1027.4 402.9L1027.6 401.3L1027.6 401.3L1028.0 411.6L1028.0 411.6L1028.2 404.8L1028.4 405.5L1028.6 403.6L1028.6 403.6L1028.8 408.6L1029.0 407.4L1029.2 397.7L1029.4 410.5L1029.6 393.3L1029.6 393.3L1030.0 416.4L1030.0 416.4L1030.2 411.0L1030.4 416.9L1030.6 403.4L1030.8 402.7L1031.0 410.1L1031.0 410.1L1031.2 406.3L1031.4 404.6L1031.5 402.3L1031.5 402.3L1031.7 403.5L1031.9 402.8L1032.1 397.4L1032.3 394.3L1032.5 411.0L1032.7 414.3L1032.9 402.0L1032.9 402.0L1033.1 401.8L1033.1 401.8L1033.5 420.6L1033.5 420.6L1033.7 405.5L1033.8 405.1L1034.0 417.1L1034.0 417.1L1034.4 398.8L1034.4 398.8L1034.6 405.5L1034.8 402.6L1035.0 413.1L1035.0 413.1L1035.2 421.7L1035.3 394.5L1035.5 398.4L1035.5 398.4L1035.7 420.2L1035.9 399.0L1036.1 401.1L1036.1 401.1L1036.3 414.8L1036.4 403.4L1036.6 406.5L1036.8 399.7L1037.0 411.1L1037.0 411.1L1037.2 418.3L1037.4 417.5L1037.5 396.2L1037.5 396.2L1037.9 409.7L1037.9 409.7L1038.1 408.4L1038.1 408.4L1038.4 400.0L1038.4 400.0L1038.6 406.9L1038.6 406.9L1038.8 401.5L1039.0 403.2L1039.2 406.7L1039.3 399.4L1039.5 409.5L1039.5 409.5L1039.9 402.9L1039.9 402.9L1040.1 413.3L1040.2 412.6L1040.4 418.6L1040.4 418.6L1040.6 406.6L1040.6 406.6L1040.8 412.3L1040.9 409.1L1041.1 410.1L1041.1 410.1L1041.5 394.4L1041.5 394.4L1041.6 422.8L1041.6 422.8L1041.8 400.8L1042.0 402.8L1042.1 406.4L1042.3 403.6L1042.5 406.9L1042.5 406.9L1042.7 399.4L1042.8 401.1L1043.0 402.6L1043.0 402.6L1043.2 417.9L1043.4 407.4L1043.5 400.9L1043.5 400.9L1043.7 418.9L1043.9 413.0L1044.0 404.5L1044.0 404.5L1044.2 395.4L1044.4 402.7L1044.5 403.6L1044.7 399.3L1044.9 406.1L1044.9 406.1L1045.0 412.2L1045.0 412.2L1045.2 410.5L1045.4 411.1L1045.5 398.3L1045.5 398.3L1045.9 410.6L1045.9 410.6L1046.0 415.4L1046.0 415.4L1046.4 406.3L1046.4 406.3L1046.5 412.4L1046.5 412.4L1046.9 403.9L1046.9 403.9L1047.0 412.2L1047.2 426.6L1047.4 404.2L1047.4 404.2L1047.5 412.1L1047.5 412.1L1047.7 403.6L1047.8 407.7L1048.0 396.3L1048.0 396.3L1048.5 401.9L1048.5 401.9L1048.7 419.3L1048.7 419.3L1049.0 395.0L1049.0 395.0L1049.1 404.9L1049.1 404.9L1049.5 397.1L1049.5 397.1L1049.6 405.3L1049.8 399.4L1049.9 408.5L1049.9 408.5L1050.1 409.7L1050.1 409.7L1050.3 403.7L1050.4 407.9L1050.6 397.8L1050.6 397.8L1050.9 410.0L1050.9 410.0L1051.0 407.2L1051.0 407.2L1051.2 397.3L1051.4 405.8L1051.5 405.9L1051.5 405.9L1051.8 396.1L1052.0 400.3L1052.1 399.0L1052.1 399.0L1052.4 402.0L1052.4 402.0L1052.6 422.7L1052.6 422.7L1052.8 393.3L1052.9 419.2L1053.1 404.7L1053.2 408.9L1053.4 404.1L1053.4 404.1L1053.5 404.4L1053.7 409.1L1054.0 401.9L1054.0 401.9L1054.1 401.1L1054.3 395.7L1054.4 404.6L1054.4 404.6L1054.6 405.8L1054.7 405.7L1054.9 433.2L1054.9 433.2L1055.0 411.1L1055.0 411.1L1055.2 396.4L1055.5 407.7L1055.6 415.3L1055.6 415.3L1055.8 401.4L1055.9 413.1L1056.1 400.3L1056.1 400.3L1056.4 407.7L1056.4 407.7L1056.5 424.6L1056.5 424.6L1056.7 402.9L1057.0 409.0L1057.1 414.5L1057.3 417.7L1057.4 403.7L1057.4 403.7L1057.6 404.1L1057.6 404.1L1057.7 400.8L1057.9 401.1L1058.0 404.4L1058.0 404.4L1058.2 410.0L1058.4 406.2L1058.6 406.9L1058.7 411.7L1058.9 404.6L1058.9 404.6L1059.0 406.0L1059.3 405.5L1059.5 410.3L1059.5 410.3L1059.6 402.7L1059.6 402.7L1059.9 398.0L1059.9 398.0L1060.0 413.5L1060.0 413.5L1060.3 401.2L1060.5 406.2L1060.6 400.3L1060.6 400.3L1060.9 419.2L1060.9 419.2L1061.0 403.5L1061.2 408.4L1061.4 393.5L1061.4 393.5L1061.6 400.4L1061.6 400.4L1061.7 409.1L1061.9 404.4L1062.0 405.8L1062.1 413.6L1062.4 398.7L1062.4 398.7L1062.6 401.2L1062.6 401.2L1062.8 406.5L1063.0 404.1L1063.1 410.4L1063.1 410.4L1063.4 394.8L1063.4 394.8L1063.5 421.8L1063.5 421.8L1063.9 394.9L1063.9 394.9L1064.1 404.9L1064.4 410.4L1064.5 399.1L1064.5 399.1L1064.6 396.0L1064.6 396.0L1064.9 407.2L1064.9 407.2L1065.0 412.1L1065.2 411.0L1065.4 421.7L1065.4 421.7L1065.6 412.3L1065.6 412.3L1065.8 404.7L1066.0 411.5L1066.1 399.6L1066.1 399.6L1066.2 417.6L1066.4 408.1L1066.5 415.0L1066.5 415.0L1066.9 394.6L1066.9 394.6L1067.0 404.8L1067.2 402.3L1067.3 416.7L1067.4 415.5L1067.6 410.8L1067.7 419.7L1068.0 410.1L1068.0 410.1L1068.1 403.1L1068.2 395.6L1068.4 424.1L1068.5 403.2L1068.6 403.4L1068.7 418.9L1068.9 395.2L1068.9 395.2L1069.0 415.5L1069.0 415.5L1069.4 408.5L1069.4 408.5L1069.5 414.2L1069.8 406.7L1069.9 419.1L1069.9 419.1L1070.0 403.9L1070.0 403.9L1070.2 412.1L1070.4 407.5L1070.6 407.2L1070.7 400.8L1070.9 410.4L1070.9 410.4L1071.1 408.5L1071.1 408.5L1071.2 398.7L1071.4 402.3L1071.6 416.9L1071.6 416.9L1071.9 401.3L1071.9 401.3L1072.1 402.4L1072.2 400.5L1072.3 433.4L1072.4 406.7L1072.6 402.7L1072.6 402.7L1072.8 409.2L1072.9 404.2L1073.1 416.0L1073.1 416.0L1073.3 402.9L1073.4 408.5L1073.6 405.1L1073.7 411.2L1073.8 396.6L1073.9 410.9L1074.1 418.0L1074.1 418.0L1074.4 406.0L1074.4 406.0L1074.5 398.1L1074.5 398.1L1074.9 413.0L1074.9 413.0L1075.0 410.5L1075.0 410.5L1075.4 401.1L1075.4 401.1L1075.5 405.5L1075.6 409.1L1075.8 400.1L1075.9 405.0L1076.0 404.9L1076.0 404.9L1076.2 395.7L1076.5 397.5L1076.6 406.8L1076.8 401.4L1077.0 417.6L1077.0 417.6L1077.1 406.0L1077.2 399.1L1077.4 407.5L1077.4 407.5L1077.6 401.0L1077.8 412.6L1077.9 397.2L1077.9 397.2L1078.0 404.1L1078.1 419.2L1078.5 394.3L1078.5 394.3L1078.6 419.4L1078.6 419.4L1078.7 401.0L1079.0 404.9L1079.1 406.2L1079.2 401.3L1079.3 413.0L1079.4 408.8L1079.5 399.7L1079.5 399.7L1079.9 415.1L1079.9 415.1L1080.0 410.1L1080.1 396.4L1080.4 418.8L1080.5 404.3L1080.6 408.8L1080.7 418.3L1080.9 408.2L1080.9 408.2L1081.0 401.6L1081.0 401.6L1081.3 411.5L1081.5 410.1L1081.6 407.2L1081.7 414.9L1081.8 399.2L1082.0 412.9L1082.1 401.4L1082.1 401.4L1082.2 417.9L1082.4 408.7L1082.5 410.9L1082.5 410.9L1082.9 401.2L1083.0 402.2L1083.1 409.1L1083.1 409.1L1083.3 401.4L1083.4 403.8L1083.5 402.1L1083.6 400.2L1083.9 412.1L1084.0 409.4L1084.1 406.1L1084.3 412.9L1084.4 402.2L1084.4 402.2L1084.5 407.1L1084.8 417.8L1085.0 403.5L1085.0 403.5L1085.1 409.0L1085.2 412.4L1085.4 398.0L1085.5 408.1L1085.6 397.6L1085.7 422.6L1085.8 395.3L1085.9 409.3L1086.0 409.6L1086.1 407.3L1086.4 413.8L1086.5 411.9L1086.6 404.2L1086.7 411.4L1086.9 394.4L1086.9 394.4L1087.0 394.3L1087.0 394.3L1087.4 413.8L1087.4 413.8L1087.5 401.9L1087.8 430.4L1088.0 396.7L1088.0 396.7L1088.1 401.9L1088.1 401.9L1088.5 412.6L1088.5 412.6L1088.6 406.0L1088.7 412.8L1088.8 404.9L1088.9 411.5L1089.0 401.3L1089.1 404.0L1089.4 395.9L1089.4 395.9L1089.5 410.6L1089.6 398.4L1089.8 427.0L1090.0 400.1L1090.1 402.0L1090.2 413.0L1090.4 394.9L1090.5 396.2L1090.6 399.8L1090.8 410.7L1090.9 397.8L1091.0 402.1L1091.1 415.8L1091.1 415.8L1091.4 400.5L1091.4 400.5L1091.5 435.0L1091.5 435.0L1091.6 399.6L1091.9 415.0L1092.0 406.7L1092.0 406.7L1092.4 392.7L1092.4 392.7L1092.5 407.6L1092.5 407.6L1092.7 397.3L1092.9 406.9L1093.0 406.0L1093.1 391.4L1093.3 418.9L1093.4 409.1L1093.5 404.2L1093.6 401.0L1093.7 407.7L1093.9 404.0L1094.0 406.4L1094.0 406.4L1094.4 413.8L1094.4 413.8L1094.5 419.3L1094.5 419.3L1094.8 406.4L1094.9 413.9L1095.0 400.1L1095.2 394.9L1095.4 410.4L1095.5 400.3L1095.6 410.7L1095.6 410.7L1095.8 397.5L1096.0 404.7L1096.1 399.1L1096.1 399.1L1096.2 409.5L1096.5 400.4L1096.6 396.7L1096.6 396.7L1096.9 417.2L1097.0 411.3L1097.0 411.0L1097.0 411.0L1097.2 400.8L1097.4 403.3L1097.5 409.8L1097.6 413.9L1097.7 398.2L1097.9 408.1L1098.0 398.3L1098.0 398.3L1098.2 409.6L1098.5 407.9L1098.6 410.5L1098.7 412.8L1098.9 399.7L1099.0 404.2L1099.0 408.0L1099.1 397.0L1099.4 409.9L1099.4 409.9L1099.5 404.3L1099.5 404.3L1099.6 418.3L1100.0 416.6L1100.1 400.9L1100.2 408.7L1100.4 399.0L1100.4 405.4L1100.5 409.4L1100.6 414.0L1100.9 402.2L1100.9 402.2L1101.0 404.7L1101.2 399.6L1101.5 416.9L1101.5 416.9L1101.6 413.0L1101.6 413.0L1101.8 395.2L1101.9 407.1L1102.0 409.1L1102.0 409.1L1102.1 395.8L1102.5 406.0L1102.6 411.0L1102.6 411.0L1102.7 417.2L1102.9 415.4L1103.0 410.6L1103.0 410.6L1103.3 396.5L1103.5 404.8L1103.5 407.3L1103.8 421.4L1103.9 405.0L1104.0 405.2L1104.1 396.0L1104.1 396.0L1104.2 422.1L1104.4 412.1L1104.5 411.2L1104.5 411.2L1104.9 397.9L1105.0 401.0L1105.1 411.6L1105.2 394.6L1105.4 423.7L1105.4 423.7L1105.5 402.0L1105.7 390.9L1105.9 426.3L1105.9 410.1L1106.0 402.8L1106.1 415.5L1106.4 392.9L1106.5 411.5L1106.6 402.1L1106.7 400.5L1106.8 418.3L1107.0 401.4L1107.1 403.6L1107.2 399.3L1107.3 412.4L1107.4 402.4L1107.5 402.9L1107.7 395.6L1107.8 412.7L1107.9 409.5L1108.0 407.5L1108.3 410.6L1108.4 398.4L1108.4 398.4L1108.5 410.6L1108.7 399.6L1109.0 411.6L1109.0 411.6L1109.0 405.4L1109.1 393.8L1109.2 408.8L1109.5 402.9L1109.5 413.1L1109.5 413.1L1109.7 395.8L1110.0 405.8L1110.0 415.9L1110.0 415.9L1110.5 398.8L1110.5 398.8L1110.5 417.7L1110.5 417.7L1110.8 401.9L1111.0 408.9L1111.0 408.5L1111.2 400.1L1111.5 412.7L1111.5 412.7L1111.5 410.3L1111.5 410.3L1111.9 401.2L1112.0 407.0L1112.0 402.2L1112.0 402.2L1112.4 416.3L1112.4 415.8L1112.5 410.9L1112.8 418.9L1112.9 402.1L1112.9 415.3L1113.0 410.4L1113.3 414.5L1113.5 399.1L1113.5 399.1L1113.6 400.7L1113.9 399.4L1114.0 411.9L1114.0 411.9L1114.1 411.4L1114.4 404.2L1114.5 414.8L1114.5 414.8L1114.5 397.8L1114.5 397.8L1114.9 414.2L1114.9 414.2L1115.0 400.1L1115.3 412.4L1115.5 392.2L1115.5 392.2L1115.6 410.6L1115.6 410.6L1115.7 394.5L1116.0 404.8L1116.0 406.8L1116.1 406.1L1116.2 422.9L1116.4 408.2L1116.5 411.7L1116.6 417.3L1116.9 400.2L1117.0 409.8L1117.1 402.0L1117.1 416.7L1117.3 398.9L1117.4 413.0L1117.5 399.4L1117.8 417.7L1118.0 396.9L1118.0 396.9L1118.1 399.0L1118.1 399.0L1118.1 413.2L1118.4 406.1L1118.5 406.0L1118.7 399.5L1119.0 426.3L1119.0 426.3L1119.1 403.9L1119.1 403.9L1119.4 417.7L1119.4 417.7L1119.5 424.9L1119.5 424.9L1119.7 390.3L1120.0 405.4L1120.0 403.2L1120.2 394.6L1120.3 409.7L1120.5 403.4L1120.6 402.0L1120.6 402.0L1120.6 425.3L1120.9 404.0L1121.0 406.3L1121.1 410.4L1121.3 397.2L1121.5 406.8L1121.5 397.9L1121.5 397.9L1121.9 428.1L1122.0 403.5L1122.1 394.8L1122.1 394.8L1122.1 414.1L1122.5 411.1L1122.6 398.6L1122.6 397.5L1122.9 413.0L1122.9 413.0L1123.0 421.1L1123.1 398.6L1123.3 423.4L1123.4 418.3L1123.5 414.4L1123.9 422.4L1123.9 397.6L1123.9 397.6L1124.0 391.8L1124.0 391.8L1124.4 415.4L1124.4 399.7L1124.5 415.2L1124.5 415.2L1124.8 391.7L1125.0 406.9L1125.0 409.8L1125.1 400.7L1125.3 414.9L1125.4 406.3L1125.5 407.8L1125.6 398.6L1125.7 412.1L1125.9 405.7L1126.0 407.4L1126.3 401.5L1126.4 416.2L1126.4 416.2L1126.5 397.6L1126.5 397.6L1126.6 415.8L1127.0 402.0L1127.1 421.7L1127.1 421.7L1127.3 400.4L1127.5 412.6L1127.6 403.1L1127.6 407.0L1127.8 395.2L1128.0 406.7L1128.0 415.9L1128.1 401.2L1128.4 417.6L1128.5 410.8L1128.5 399.8L1128.5 399.8L1128.7 409.5L1128.9 402.4L1129.0 406.6L1129.3 398.5L1129.5 415.6L1129.5 415.6L1129.5 399.4L1129.9 394.1L1130.0 434.8L1130.0 434.8L1130.0 400.0L1130.2 398.2L1130.5 413.4L1130.5 413.4L1130.6 404.7L1130.6 402.0L1130.8 412.0L1131.0 408.4L1131.0 395.1L1131.0 395.1L1131.3 412.7L1131.5 407.2L1131.6 412.9L1131.6 398.4L1131.8 422.8L1132.0 398.5L1132.0 401.2L1132.2 419.1L1132.2 393.0L1132.5 409.8L1132.6 406.2L1132.7 400.6L1132.8 415.3L1133.0 402.9L1133.0 401.6L1133.1 396.4L1133.4 417.8L1133.5 403.0L1133.5 403.8L1133.6 419.0L1133.7 399.4L1134.0 406.6L1134.1 395.9L1134.1 395.9L1134.4 410.1L1134.4 403.1L1134.5 408.0L1134.6 415.1L1134.6 397.6L1135.0 403.1L1135.0 401.4L1135.3 397.8L1135.4 409.0L1135.5 406.4L1135.5 418.2L1135.5 418.2L1135.7 394.9L1136.0 408.4L1136.0 418.3L1136.1 394.2L1136.4 418.3L1136.5 406.6L1136.6 415.1L1136.6 415.1L1136.9 400.4L1137.0 400.4L1137.1 418.4L1137.2 418.5L1137.3 402.3L1137.5 413.4L1137.6 413.7L1137.9 400.1L1137.9 418.0L1138.0 406.3L1138.1 421.8L1138.1 421.8L1138.2 395.5L1138.5 410.4L1138.5 393.3L1138.5 393.3L1138.8 411.2L1139.0 408.6L1139.0 406.2L1139.2 421.2L1139.3 398.7L1139.5 406.1L1139.5 408.8L1139.8 421.1L1139.8 402.0L1140.0 403.0L1140.0 414.5L1140.0 414.5L1140.3 396.4L1140.4 409.5L1140.5 412.8L1140.5 412.8L1140.7 395.2L1141.0 404.9L1141.0 400.5L1141.0 400.5L1141.3 410.9L1141.5 401.3L1141.5 404.8L1141.6 426.8L1141.8 397.1L1141.9 397.8L1142.0 409.1L1142.1 399.2L1142.2 420.9L1142.5 409.6L1142.5 406.4L1142.7 416.8L1142.9 398.3L1143.0 407.7L1143.0 408.8L1143.1 413.5L1143.2 396.0L1143.5 408.3L1143.5 402.5L1143.6 393.5L1143.7 416.0L1143.9 407.1L1144.0 407.6L1144.1 413.5L1144.2 394.9L1144.5 404.0L1144.5 409.2L1144.8 397.8L1145.0 421.3L1145.0 421.3L1145.0 416.9L1145.0 416.9L1145.5 396.2L1145.5 396.2L1145.5 406.4L1145.7 409.0L1145.9 397.5L1146.0 406.1L1146.0 411.8L1146.2 394.6L1146.4 419.2L1146.5 412.5L1146.5 421.4L1146.5 421.4L1147.0 395.9L1147.0 395.9L1147.0 411.0L1147.3 419.2L1147.4 398.6L1147.5 417.3L1147.5 412.3L1147.5 412.3L1147.8 393.6L1148.0 404.9L1148.1 410.5L1148.1 416.4L1148.4 394.5L1148.5 397.1L1148.6 405.8L1148.6 426.6L1148.7 401.1L1149.0 404.6L1149.1 411.6L1149.2 398.1L1149.3 412.0L1149.5 409.9L1149.5 405.5L1149.6 395.7L1149.7 414.4L1150.0 402.4L1150.0 407.9L1150.3 397.4L1150.3 424.2L1150.5 400.1L1150.5 408.9L1150.6 397.5L1150.9 414.2L1151.0 400.5L1151.0 398.8L1151.1 398.6L1151.2 416.9L1151.4 408.7L1151.5 402.0L1151.8 411.0L1151.9 399.0L1152.0 408.2L1152.0 407.4L1152.1 398.5L1152.1 417.4L1152.5 400.0L1152.5 404.3L1152.8 416.0L1153.0 400.1L1153.0 400.1L1153.0 404.8L1153.3 396.8L1153.5 428.2L1153.5 428.2L1153.5 403.8L1153.6 398.6L1153.9 416.3L1154.0 405.8L1154.0 410.1L1154.1 390.6L1154.3 411.6L1154.5 398.3L1154.5 420.7L1154.5 420.7L1154.7 401.9L1155.0 408.1L1155.0 394.4L1155.0 394.4L1155.5 70.1L1155.5 70.1L1155.5 60.6L1155.5 60.6L1156.0 399.1L1156.0 399.1L1156.0 411.4L1156.1 397.3L1156.3 420.2L1156.5 405.0L1156.5 405.6L1156.6 391.9L1156.9 415.9L1157.0 402.2L1157.0 406.1L1157.4 396.9L1157.5 426.2L1157.5 426.2L1157.5 396.3L1157.7 417.6L1157.9 394.0L1158.0 412.0L1158.0 409.6L1158.2 398.4L1158.3 414.4L1158.5 400.1L1158.5 398.8L1158.8 421.7L1158.8 395.8L1159.0 400.5L1159.0 415.0L1159.4 395.3L1159.5 424.3L1159.5 424.3L1159.5 406.8L1159.7 396.6L1159.8 413.4L1160.0 406.9L1160.0 418.9L1160.0 418.9L1160.2 398.6L1160.5 410.6L1160.5 395.8L1160.6 393.4L1160.7 421.0L1161.0 417.4L1161.0 407.9L1161.1 415.7L1161.3 389.7L1161.5 405.5L1161.5 402.1L1161.7 412.6L1161.7 398.0L1162.0 407.1L1162.0 397.7L1162.0 397.7L1162.3 419.8L1162.5 411.1L1162.5 399.7L1162.7 395.3L1162.8 411.0L1163.0 401.4L1163.0 408.1L1163.2 388.8L1163.5 417.8L1163.5 417.8L1163.5 403.7L1163.6 393.4L1163.9 409.3L1164.0 404.7L1164.0 405.5L1164.1 423.8L1164.2 398.7L1164.5 417.5L1164.5 407.4L1164.7 425.0L1164.9 397.1L1165.0 414.9L1165.0 396.9L1165.0 396.9L1165.4 428.7L1165.5 412.1L1165.5 410.3L1165.6 397.3L1165.7 418.3L1166.0 406.8L1166.0 406.8L1166.1 396.0L1166.3 414.9L1166.5 403.9L1166.5 401.7L1166.7 416.4L1166.7 389.9L1167.0 400.2L1167.0 408.7L1167.0 408.7L1167.2 393.0L1167.5 396.4L1167.5 406.2L1167.7 395.8L1167.9 415.7L1168.0 414.9L1168.0 403.8L1168.3 415.0L1168.3 396.6L1168.5 402.2L1168.5 422.9L1168.5 422.9L1168.6 395.4L1169.0 406.7L1169.0 400.8L1169.0 400.8L1169.3 420.2L1169.5 405.0L1169.5 405.0L1169.9 396.7L1169.9 413.4L1170.0 407.3L1170.0 400.6L1170.0 400.6L1170.3 411.2L1170.5 409.2L1170.5 403.6L1170.8 418.1L1171.0 397.6L1171.0 401.2L1171.0 404.3L1171.3 416.8L1171.3 400.8L1171.5 408.5L1171.5 397.0L1171.7 411.1L1171.8 390.5L1172.0 401.1L1172.0 409.8L1172.3 418.7L1172.3 398.6L1172.5 407.8L1172.5 402.5L1172.6 382.7L1172.7 418.1L1173.0 402.7L1173.0 405.1L1173.3 421.0L1173.4 396.4L1173.5 413.7L1173.5 409.7L1173.7 398.3L1173.8 411.7L1174.0 404.7L1174.0 400.9L1174.2 396.6L1174.5 415.5L1174.5 415.5L1174.5 417.4L1174.5 417.4L1174.8 398.2L1175.0 405.3L1175.0 401.1L1175.2 433.8L1175.4 393.6L1175.5 394.8L1175.5 410.2L1175.8 397.1L1175.8 422.7L1176.0 407.1L1176.0 411.8L1176.1 416.3L1176.2 399.2L1176.5 404.3L1176.5 407.6L1176.7 400.3L1176.9 418.4L1177.0 413.8L1177.0 402.2L1177.2 416.8L1177.3 400.2L1177.5 400.8L1177.5 402.3L1177.9 393.8L1177.9 412.4L1178.0 408.2L1178.0 412.8L1178.3 422.0L1178.4 395.1L1178.5 402.5L1178.5 404.3L1178.7 395.0L1178.8 413.9L1179.0 406.7L1179.0 404.6L1179.3 414.7L1179.5 393.9L1179.5 393.9L1179.5 394.8L1179.6 423.5L1179.7 391.2L1180.0 409.9L1180.0 403.3L1180.2 393.1L1180.5 422.4L1180.5 403.9L1180.5 402.0L1180.7 400.9L1180.8 410.4L1181.0 406.5L1181.0 405.5L1181.2 414.3L1181.3 392.9L1181.5 403.8L1181.5 409.6L1181.6 393.0L1181.9 421.1L1182.0 403.7L1182.0 408.7L1182.2 390.9L1182.4 416.5L1182.5 401.7L1182.5 404.5L1182.7 398.0L1182.9 419.0L1183.0 402.6L1183.0 404.1L1183.4 397.7L1183.5 415.3L1183.5 415.3L1183.5 399.3L1183.6 398.5L1183.7 419.7L1184.0 402.0L1184.0 398.3L1184.1 419.7L1184.2 396.9L1184.5 410.6L1184.5 402.2L1184.6 406.5L1184.8 391.2L1185.0 406.0L1185.0 403.6L1185.4 421.2L1185.5 401.6L1185.5 403.4L1185.5 409.3L1185.6 395.2L1185.7 409.5L1186.0 401.3L1186.0 403.1L1186.4 417.2L1186.5 390.9L1186.5 390.9L1186.5 405.0L1186.6 396.2L1186.7 413.2L1187.0 397.3L1187.0 407.0L1187.1 416.7L1187.3 398.2L1187.5 401.4L1187.5 401.5L1187.6 399.3L1188.0 416.3L1188.0 402.1L1188.0 402.8L1188.2 399.7L1188.4 413.8L1188.5 410.2L1188.5 407.0L1188.6 424.0L1188.8 393.7L1189.0 398.9L1189.0 402.1L1189.1 413.3L1189.5 397.8L1189.5 397.8L1189.5 403.4L1189.6 412.5L1189.8 396.4L1190.0 397.5L1190.0 400.3L1190.3 392.5L1190.5 421.6L1190.5 421.6L1190.5 402.6L1190.7 392.6L1190.9 417.6L1191.0 413.4L1191.0 407.9L1191.1 396.2L1191.3 413.3L1191.5 400.1L1191.5 401.4L1191.5 392.0L1192.0 412.7L1192.0 412.7L1192.0 414.3L1192.1 422.6L1192.4 397.6L1192.5 400.8L1192.5 394.5L1192.5 394.5L1192.8 418.3L1193.0 404.3L1193.0 399.2L1193.1 397.9L1193.3 422.5L1193.5 403.0L1193.5 409.6L1193.5 412.1L1193.8 395.1L1194.0 405.7L1194.0 411.3L1194.2 414.4L1194.3 392.3L1194.5 412.9L1194.5 412.6L1194.5 412.6L1194.7 395.3L1195.0 401.1L1195.0 405.0L1195.0 396.3L1195.3 414.6L1195.5 407.3L1195.5 408.2L1195.7 395.7L1195.9 420.2L1196.0 407.1L1196.0 408.4L1196.4 392.7L1196.4 418.8L1196.5 401.0L1196.5 406.4L1196.6 397.0L1197.0 412.9L1197.0 409.1L1197.0 395.1L1197.1 428.9L1197.3 394.5L1197.5 403.9L1197.5 414.2L1197.7 416.6L1197.8 395.2L1198.0 403.0L1198.0 407.7L1198.0 399.4L1198.3 422.2L1198.5 406.3L1198.5 413.3L1198.9 397.9L1198.9 415.3L1199.0 405.7L1199.0 400.3L1199.0 418.2L1199.2 394.0L1199.5 401.6L1199.5 406.8L1199.8 400.3L1199.9 420.1L1200.0 405.5L1200.0 406.7L1200.1 398.5L1200.3 416.6L1200.5 409.2L1200.5 404.8L1200.7 418.5L1201.0 398.5L1201.0 398.5L1201.0 417.6L1201.1 395.9L1201.1 419.0L1201.5 407.5L1201.5 400.7L1201.6 394.6L1201.8 409.8L1202.0 409.0L1202.0 408.6L1202.0 393.1L1202.3 425.1L1202.5 410.4L1202.5 407.0L1202.7 413.5L1203.0 392.0L1203.0 392.0L1203.0 404.5L1203.1 413.6L1203.3 394.8L1203.5 412.1L1203.5 399.3L1203.7 394.4L1203.8 416.8L1204.0 412.7L1204.0 400.7L1204.4 395.5L1204.5 415.9L1204.5 415.9L1204.5 400.4L1204.5 392.9L1204.7 427.0L1205.0 408.3L1205.0 402.0L1205.4 397.4L1205.5 415.1L1205.5 415.1L1205.5 408.6L1205.7 399.6L1205.8 414.8L1206.0 407.7L1206.0 395.3L1206.0 395.3L1206.4 416.3L1206.5 395.5L1206.5 402.7L1206.7 392.2L1206.9 418.3L1207.0 400.9L1207.0 412.8L1207.0 391.7L1207.5 413.9L1207.5 411.4L1207.5 405.4L1207.8 421.2L1207.9 394.3L1208.0 398.6L1208.0 402.3L1208.2 420.8L1208.5 398.5L1208.5 403.7L1208.5 400.7L1208.7 400.1L1209.0 415.1L1209.0 415.1L1209.0 404.9L1209.1 423.7L1209.4 394.5L1209.5 415.2L1209.5 412.5L1209.7 388.8L1209.8 419.1L1210.0 405.8L1210.0 406.4L1210.1 394.4L1210.3 413.9L1210.5 411.9L1210.5 401.4L1210.6 422.1L1210.9 391.4L1211.0 397.0L1211.0 406.2L1211.3 394.9L1211.4 415.3L1211.5 396.2L1211.5 409.4L1211.7 395.5L1211.9 421.0L1212.0 399.4L1212.0 395.8L1212.1 416.4L1212.3 394.9L1212.5 406.4L1212.5 403.7L1212.9 423.9L1213.0 397.1L1213.0 397.1L1213.0 403.7L1213.0 396.8L1213.1 416.8L1213.5 415.9L1213.5 403.9L1213.5 413.9L1213.8 391.1L1214.0 411.2L1214.0 419.2L1214.0 419.2L1214.1 388.5L1214.5 413.0L1214.5 402.6L1214.6 418.4L1214.9 396.6L1215.0 414.7L1215.0 402.6L1215.2 395.6L1215.4 418.5L1215.5 409.6L1215.5 401.0L1215.6 424.0L1215.6 395.3L1216.0 402.5L1216.0 415.0L1216.2 396.5L1216.3 421.8L1216.5 398.4L1216.5 397.2L1216.5 397.2L1216.7 421.5L1217.0 404.5L1217.0 414.8L1217.3 415.6L1217.4 397.2L1217.5 404.8L1217.5 397.8L1217.6 423.6L1217.9 394.5L1218.0 404.3L1218.0 410.0L1218.0 393.7L1218.4 418.9L1218.5 403.5L1218.5 407.5L1218.6 397.0L1218.9 412.4L1219.0 401.7L1219.0 413.1L1219.0 413.1L1219.1 392.8L1219.5 406.9L1219.5 403.4L1219.8 396.6L1219.8 421.1L1220.0 419.3L1220.0 401.3L1220.3 413.8L1220.4 283.4L1220.5 357.5L1220.5 416.7L1220.7 396.9L1220.9 429.5L1221.0 408.5L1221.0 409.5L1221.2 389.5L1221.3 420.3L1221.5 419.8L1221.5 416.7L1221.5 416.7L1221.7 394.2L1222.0 408.0L1222.0 408.1L1222.2 396.9L1222.4 415.5L1222.5 413.6L1222.5 399.5L1222.9 419.9L1223.0 390.0L1223.0 390.0L1223.0 403.5L1223.2 393.8L1223.3 414.9L1223.5 408.2L1223.5 405.6L1223.6 419.0L1223.8 393.8L1224.0 404.4L1224.0 395.3L1224.0 395.3L1224.2 420.6L1224.5 399.1L1224.5 402.4L1224.6 397.5L1224.9 418.9L1225.0 401.1L1225.0 405.5L1225.1 414.3L1225.3 394.3L1225.5 397.7L1225.5 408.4L1225.9 419.2L1226.0 399.6L1226.0 399.9L1226.0 413.6L1226.3 394.7L1226.3 418.4L1226.5 411.6L1226.5 405.6L1226.7 420.0L1226.9 391.9L1227.0 399.0L1227.0 409.7L1227.1 415.2L1227.4 390.1L1227.5 403.2L1227.5 400.5L1227.7 393.6L1227.9 419.6L1228.0 399.9L1228.0 402.9L1228.0 412.5L1228.1 392.7L1228.5 408.3L1228.5 410.6L1228.7 416.7L1228.9 393.6L1229.0 406.2L1229.0 407.5L1229.2 398.5L1229.3 420.0L1229.5 398.9L1229.5 402.6L1229.8 394.9L1229.8 413.2L1230.0 409.4L1230.0 406.5L1230.3 421.7L1230.5 393.5L1230.5 393.5L1230.5 409.6L1230.8 422.5L1230.9 393.7L1231.0 399.6L1231.0 408.0L1231.3 398.5L1231.4 420.2L1231.5 404.8L1231.5 403.0L1231.9 413.5L1232.0 396.1L1232.0 401.2L1232.0 386.1L1232.0 386.1L1232.3 418.0L1232.5 408.9L1232.5 409.4L1232.8 418.2L1232.9 396.0L1233.0 400.0L1233.0 403.1L1233.1 393.0L1233.2 418.9L1233.5 409.1L1233.5 410.9L1233.9 423.5L1234.0 396.1L1234.0 411.2L1234.0 413.9L1234.1 395.2L1234.4 416.0L1234.5 403.4L1234.5 402.8L1234.6 399.8L1234.7 416.1L1235.0 411.3L1235.0 396.4L1235.0 396.4L1235.4 426.8L1235.5 411.1L1235.5 407.8L1235.9 396.5L1236.0 425.0L1236.0 398.3L1236.0 394.0L1236.2 392.1L1236.3 414.5L1236.5 400.5L1236.5 405.8L1236.9 428.9L1236.9 395.0L1237.0 409.7L1237.0 405.1L1237.2 395.0L1237.2 413.6L1237.5 409.5L1237.5 408.9L1237.6 397.4L1237.7 415.1L1238.0 405.4L1238.0 401.5L1238.2 398.4L1238.2 414.7L1238.5 407.7L1238.5 415.3L1238.5 415.3L1238.9 393.4L1239.0 406.2L1239.0 410.8L1239.2 418.9L1239.5 398.5L1239.5 398.5L1239.5 410.3L1239.6 413.2L1239.8 394.3L1240.0 395.2L1240.0 392.3L1240.0 392.3L1240.4 422.6L1240.5 400.0L1240.5 405.1L1240.7 420.2L1241.0 397.3L1241.0 397.3L1241.0 405.1L1241.1 413.5L1241.1 392.0L1241.5 406.6L1241.5 405.3L1241.9 391.5L1241.9 429.3L1242.0 400.1L1242.0 413.2L1242.2 394.7L1242.3 427.1L1242.5 418.4L1242.5 403.5L1242.6 395.1L1242.9 416.1L1243.0 413.5L1243.0 402.6L1243.2 414.6L1243.5 396.2L1243.5 396.2L1243.5 406.2L1243.5 421.2L1244.0 391.1L1244.0 391.1L1244.0 398.8L1244.2 390.2L1244.3 421.4L1244.5 406.2L1244.5 415.1L1244.5 425.6L1244.6 396.9L1245.0 417.8L1245.0 406.1L1245.1 394.9L1245.2 412.8L1245.5 405.1L1245.5 407.6L1245.7 420.5L1245.8 394.2L1246.0 395.5L1246.0 399.9L1246.0 394.4L1246.4 415.9L1246.5 397.8L1246.5 403.2L1246.6 396.3L1246.6 413.5L1247.0 411.4L1247.0 394.1L1247.3 389.1L1247.4 420.8L1247.5 405.1L1247.5 400.2L1247.7 395.6L1247.8 425.7L1248.0 403.6L1248.0 398.7L1248.3 422.3L1248.3 392.7L1248.5 396.0L1248.5 405.0L1248.8 420.2L1248.9 398.8L1249.0 416.1L1249.0 406.8L1249.3 393.2L1249.4 424.8L1249.5 397.4L1249.5 395.7L1249.5 395.7L1249.8 422.1L1250.0 402.1L1250.0 399.0L1250.4 390.7L1250.4 414.0L1250.5 402.3L1250.5 410.7L1250.6 419.0L1251.0 393.0L1251.0 393.0L1251.0 404.2L1251.2 411.8L1251.5 392.1L1251.5 403.6L1251.5 399.5L1251.5 394.9L1251.7 421.8L1252.0 401.5L1252.0 416.6L1252.1 419.0L1252.2 391.3L1252.5 399.5L1252.5 411.6L1252.5 392.0L1252.7 416.1L1253.0 411.2L1253.0 402.1L1253.2 393.1L1253.3 420.0L1253.5 398.3L1253.5 411.8L1253.5 422.0L1253.6 394.9L1254.0 400.1L1254.0 410.5L1254.3 394.5L1254.4 416.9L1254.5 399.4L1254.5 400.0L1254.8 393.4L1255.0 418.4L1255.0 402.8L1255.0 403.8L1255.2 393.4L1255.3 418.6L1255.5 400.3L1255.5 399.8L1255.9 394.1L1256.0 433.3L1256.0 404.0L1256.0 407.9L1256.1 391.5L1256.1 418.8L1256.5 398.8L1256.5 401.3L1256.5 396.7L1256.7 422.5L1257.0 402.8L1257.0 398.5L1257.1 422.4L1257.4 394.0L1257.5 421.1L1257.5 399.8L1257.6 420.0L1258.0 395.4L1258.0 395.4L1258.0 404.7L1258.3 419.6L1258.4 301.5L1258.5 409.1L1258.5 404.7L1258.8 393.9L1258.9 414.2L1259.0 408.3L1259.0 397.6L1259.3 419.8L1259.5 391.1L1259.5 410.7L1259.5 413.2L1259.5 397.7L1259.9 419.5L1260.0 397.8L1260.0 411.3L1260.1 393.5L1260.2 416.9L1260.5 402.3L1260.5 412.5L1260.8 396.2L1261.0 418.6L1261.0 414.1L1261.0 416.5L1261.0 416.5L1261.3 396.3L1261.5 403.3L1261.5 407.0L1261.8 394.6L1261.9 423.2L1262.0 408.0L1262.0 397.4L1262.2 395.1L1262.4 414.8L1262.5 399.8L1262.5 414.7L1262.8 391.5L1262.9 423.2L1263.0 403.3L1263.0 401.2L1263.1 395.0L1263.4 418.6L1263.5 406.2L1263.5 396.5L1263.8 391.2L1263.9 417.1L1264.0 405.8L1264.0 394.8L1264.3 394.6L1264.4 422.1L1264.5 397.2L1264.5 401.6L1264.8 390.5L1264.8 434.2L1265.0 409.8L1265.0 419.3L1265.0 419.3L1265.1 395.1L1265.5 402.1L1265.5 409.6L1265.7 391.9L1265.8 415.9L1266.0 399.3L1266.0 402.6L1266.2 393.4L1266.4 414.6L1266.5 413.8L1266.5 408.6L1266.6 418.8L1266.8 397.0L1267.0 406.6L1267.0 398.2L1267.1 416.8L1267.4 391.7L1267.5 413.9L1267.5 411.5L1267.7 393.8L1267.7 413.8L1268.0 408.6L1268.0 416.1L1268.0 416.1L1268.3 396.0L1268.5 397.1L1268.5 408.6L1268.8 393.5L1268.9 416.9L1269.0 401.9L1269.0 394.8L1269.0 394.8L1269.3 422.4L1269.5 407.0L1269.5 391.5L1269.5 391.5L1270.0 424.1L1270.0 412.3L1270.0 400.1L1270.4 420.0L1270.5 392.6L1270.5 395.8L1270.5 408.0L1270.8 418.6L1270.8 392.1L1271.0 402.7L1271.0 404.9L1271.2 391.9L1271.2 426.6L1271.5 395.3L1271.5 399.0L1271.7 394.6L1271.9 416.4L1272.0 402.7L1272.0 405.2L1272.2 392.1L1272.5 434.4L1272.5 407.1L1272.5 407.8L1272.7 420.8L1273.0 394.5L1273.0 394.5L1273.0 405.9L1273.2 394.5L1273.4 417.3L1273.5 412.4L1273.5 411.7L1273.7 421.6L1273.9 394.8L1274.0 406.3L1274.0 410.8L1274.1 416.6L1274.1 397.4L1274.5 403.4L1274.5 407.2L1274.6 390.0L1275.0 417.7L1275.0 417.7L1275.0 403.0L1275.3 391.0L1275.4 419.2L1275.5 400.6L1275.5 399.3L1275.5 395.5L1275.9 419.7L1276.0 408.5L1276.0 399.5L1276.2 421.2L1276.5 393.9L1276.5 407.6L1276.5 403.5L1276.5 394.6L1276.9 417.1L1277.0 404.8L1277.0 408.9L1277.1 391.4L1277.4 414.4L1277.5 397.0L1277.5 401.2L1277.5 395.6L1277.6 432.5L1278.0 407.2L1278.0 410.8L1278.2 427.9L1278.5 391.3L1278.5 408.2L1278.5 414.0L1278.8 389.5L1278.9 417.9L1279.0 409.3L1279.0 397.5L1279.0 419.5L1279.1 394.6L1279.5 398.4L1279.5 403.4L1279.7 389.0L1279.8 418.6L1280.0 402.9L1280.0 400.8L1280.1 393.4L1280.3 416.7L1280.5 405.5L1280.5 407.9L1280.6 393.9L1280.6 416.7L1281.0 405.9L1281.0 413.6L1281.0 413.6L1281.4 392.9L1281.5 410.4L1281.5 411.0L1281.7 421.7L1281.8 391.2L1282.0 403.3L1282.0 398.4L1282.2 395.2L1282.5 415.8L1282.5 415.8L1282.5 406.0L1282.7 425.0L1282.8 395.3L1283.0 399.8L1283.0 410.7L1283.1 423.2L1283.5 395.9L1283.5 395.9L1283.5 402.4L1283.5 423.0L1283.9 395.1L1284.0 406.7L1284.0 407.3L1284.1 390.3L1284.2 423.9L1284.5 399.6L1284.5 402.5L1284.7 418.8L1284.9 394.1L1285.0 400.5L1285.0 404.4L1285.3 423.6L1285.4 325.6L1285.5 407.1L1285.5 417.1L1285.7 421.8L1285.9 396.8L1286.0 396.8L1286.0 404.0L1286.4 396.8L1286.4 425.6L1286.5 404.1L1286.5 407.7L1286.7 420.7L1286.9 395.6L1287.0 402.9L1287.0 416.0L1287.2 395.2L1287.3 422.3L1287.5 401.8L1287.5 401.6L1287.5 390.5L1287.8 412.8L1288.0 404.8L1288.0 413.2L1288.1 418.6L1288.3 393.7L1288.5 395.3L1288.5 395.8L1288.8 428.7L1288.9 391.4L1289.0 405.3L1289.0 393.7L1289.0 393.7L1289.2 418.8L1289.5 399.7L1289.5 397.4L1289.7 392.9L1289.8 419.0L1290.0 398.4L1290.0 407.0L1290.2 391.4L1290.3 421.1L1290.5 404.6L1290.5 410.0L1290.7 393.0L1290.9 419.4L1291.0 410.3L1291.0 400.6L1291.4 392.8L1291.4 425.7L1291.5 402.3L1291.5 400.6L1291.7 421.0L1291.8 394.7L1292.0 405.7L1292.0 406.3L1292.1 392.7L1292.2 421.1L1292.5 407.3L1292.5 401.8L1292.5 390.3L1293.0 420.2L1293.0 416.1L1293.0 413.4L1293.1 429.0L1293.3 393.5L1293.5 400.8L1293.5 403.8L1293.7 395.5L1293.9 417.2L1294.0 401.7L1294.0 414.4L1294.0 424.1L1294.4 394.3L1294.5 403.0L1294.5 410.4L1294.5 395.6L1294.6 414.8L1295.0 398.7L1295.0 413.6L1295.1 420.2L1295.1 392.9L1295.5 398.5L1295.5 410.4L1295.8 417.8L1295.9 393.2L1296.0 411.0L1296.0 409.1L1296.1 417.7L1296.4 391.9L1296.5 404.0L1296.5 411.8L1296.7 414.7L1297.0 393.0L1297.0 393.0L1297.0 396.0L1297.4 392.8L1297.4 422.6L1297.5 399.0L1297.5 398.2L1297.6 424.1L1298.0 388.2L1298.0 405.0L1298.0 411.6L1298.1 424.0L1298.3 393.3L1298.5 402.9L1298.5 398.6L1298.6 418.0L1298.6 391.0L1299.0 401.5L1299.0 406.2L1299.3 418.1L1299.4 393.3L1299.5 401.1L1299.5 401.3L1299.9 416.9L1300.0 394.5L1300.0 402.9L1300.0 411.1L1300.2 429.4L1300.5 393.3L1300.5 393.3L1300.5 409.0L1300.5 422.3L1300.7 394.9L1301.0 414.4L1301.0 399.0L1301.1 421.4L1301.3 394.6L1301.5 409.9L1301.5 412.9L1301.9 423.6L1302.0 392.9L1302.0 404.7L1302.0 409.1L1302.3 418.5L1302.5 394.9L1302.5 406.1L1302.5 420.8L1302.5 420.8L1302.9 393.2L1303.0 404.1L1303.0 409.4L1303.1 417.2L1303.2 391.8L1303.5 402.8L1303.5 406.8L1303.5 392.0L1304.0 428.7L1304.0 428.7L1304.0 402.0L1304.2 416.0L1304.3 390.9L1304.5 402.5L1304.5 395.9L1304.6 390.8L1304.8 424.9L1305.0 408.4L1305.0 398.5L1305.1 422.3L1305.3 394.3L1305.5 399.8L1305.5 404.4L1305.8 417.7L1305.9 392.0L1306.0 397.5L1306.0 404.9L1306.3 353.5L1306.3 434.2L1306.5 394.7L1306.5 405.4L1306.6 394.3L1306.9 421.4L1307.0 401.4L1307.0 399.4L1307.2 392.3L1307.5 422.3L1307.5 403.8L1307.5 408.1L1307.6 390.9L1307.8 426.0L1308.0 403.7L1308.0 405.5L1308.2 417.6L1308.5 390.8L1308.5 397.9L1308.5 397.1L1308.6 432.4L1308.7 390.8L1309.0 396.2L1309.0 407.7L1309.4 393.0L1309.5 422.5L1309.5 403.3L1309.5 423.7L1309.5 423.7L1309.6 395.1L1310.0 399.1L1310.0 415.8L1310.1 393.0L1310.4 424.0L1310.5 421.4L1310.5 416.6L1310.9 392.2L1310.9 418.9L1311.0 406.6L1311.0 398.9L1311.2 392.6L1311.3 419.7L1311.5 401.0L1311.5 411.0L1311.5 449.9L1311.8 389.7L1312.0 402.5L1312.0 402.3L1312.3 420.8L1312.4 394.0L1312.5 397.7L1312.5 399.9L1312.7 424.7L1312.9 391.5L1313.0 400.4L1313.0 413.8L1313.1 419.7L1313.3 393.0L1313.5 411.0L1313.5 411.5L1313.6 419.8L1313.6 393.5L1314.0 409.3L1314.0 407.8L1314.2 427.3L1314.4 392.8L1314.5 409.6L1314.5 400.4L1314.7 394.2L1314.9 415.2L1315.0 404.8L1315.0 396.1L1315.2 393.7L1315.5 420.5L1315.5 420.5L1315.5 416.3L1315.6 390.8L1315.8 422.8L1316.0 410.3L1316.0 401.7L1316.3 422.4L1316.4 396.1L1316.5 409.7L1316.5 398.7L1316.7 423.3L1316.9 391.4L1317.0 399.5L1317.0 397.9L1317.1 393.3L1317.3 418.2L1317.5 410.0L1317.5 409.2L1317.8 390.5L1317.8 416.8L1318.0 401.8L1318.0 407.8L1318.1 393.6L1318.3 418.2L1318.5 401.9L1318.5 416.4L1318.5 416.4L1318.7 392.8L1319.0 406.8L1319.0 403.6L1319.1 392.4L1319.4 422.0L1319.5 404.6L1319.5 401.3L1319.6 419.4L1320.0 393.6L1320.0 395.8L1320.0 404.3L1320.4 393.8L1320.4 418.3L1320.5 399.7L1320.5 397.0L1320.7 426.9L1320.9 393.3L1321.0 414.9L1321.0 405.1L1321.3 418.9L1321.5 394.1L1321.5 411.3L1321.5 405.2L1321.5 429.5L1321.6 394.6L1322.0 398.9L1322.0 405.4L1322.2 415.6L1322.4 392.1L1322.5 403.3L1322.5 402.1L1322.6 392.8L1322.7 418.6L1323.0 401.4L1323.0 410.2L1323.2 419.0L1323.3 378.6L1323.5 392.8L1323.5 403.8L1323.5 388.9L1323.7 423.1L1324.0 412.9L1324.0 399.4L1324.2 394.1L1324.4 423.4L1324.5 398.6L1324.5 402.8L1324.5 391.9L1324.8 418.6L1325.0 401.1L1325.0 411.8L1325.1 418.0L1325.4 388.7L1325.5 396.1L1325.5 406.6L1325.8 393.2L1325.9 419.6L1326.0 398.4L1326.0 407.9L1326.4 420.8L1326.5 395.1L1326.5 395.1L1326.5 422.0L1326.5 422.0L1326.9 394.3L1327.0 412.3L1327.0 399.2L1327.2 394.6L1327.3 421.4L1327.5 402.9L1327.5 412.2L1327.7 393.7L1327.9 426.8L1328.0 402.1L1328.0 408.0L1328.0 426.2L1328.1 393.8L1328.5 401.9L1328.5 405.2L1328.5 391.3L1328.6 422.7L1329.0 407.5L1329.0 411.2L1329.2 426.1L1329.2 393.2L1329.5 413.5L1329.5 395.3L1329.6 392.9L1330.0 420.2L1330.0 420.2L1330.0 417.6L1330.0 417.6L1330.2 389.2L1330.5 399.0L1330.5 398.0L1330.7 422.7L1330.8 395.8L1331.0 402.2L1331.0 406.6L1331.0 418.9L1331.0 391.6L1331.5 409.9L1331.5 398.0L1331.8 393.5L1331.9 417.4L1332.0 411.2L1332.0 407.6L1332.2 395.6L1332.4 420.1L1332.5 414.6L1332.5 401.8L1332.6 394.5L1332.9 424.1L1333.0 405.2L1333.0 412.1L1333.1 395.0L1333.2 413.9L1333.5 402.4L1333.5 412.6L1333.6 388.4L1333.7 421.6L1334.0 403.2L1334.0 396.3L1334.1 428.8L1334.3 395.4L1334.5 411.6L1334.5 392.7L1334.8 392.3L1334.8 419.1L1335.0 410.7L1335.0 400.6L1335.2 422.5L1335.4 393.5L1335.5 402.1L1335.5 403.4L1335.7 392.4L1335.9 418.2L1336.0 399.7L1336.0 402.3L1336.3 393.6L1336.5 421.6L1336.5 406.0L1336.5 404.3L1336.6 390.9L1336.8 417.5L1337.0 398.5L1337.0 400.6L1337.2 419.4L1337.3 390.9L1337.5 418.6L1337.5 400.8L1337.5 421.5L1337.8 381.2L1338.0 404.7L1338.0 403.8L1338.1 392.2L1338.4 420.0L1338.5 406.7L1338.5 398.7L1338.5 393.3L1338.7 417.0L1339.0 410.8L1339.0 404.2L1339.1 390.1L1339.2 420.0L1339.5 400.7L1339.5 411.7L1339.7 418.5L1340.0 391.8L1340.0 418.4L1340.0 414.1L1340.1 394.5L1340.2 425.1L1340.5 421.3L1340.5 404.6L1340.7 390.4L1340.9 417.7L1341.0 406.7L1341.0 410.6L1341.3 418.0L1341.4 393.5L1341.5 399.8L1341.5 408.2L1341.6 419.7L1341.6 392.9L1342.0 407.9L1342.0 402.1L1342.1 390.6L1342.3 420.6L1342.5 408.6L1342.5 397.4L1342.5 394.0L1342.6 418.9L1343.0 401.1L1343.0 408.8L1343.1 395.9L1343.4 426.7L1343.5 407.6L1343.5 401.8L1343.6 416.2L1344.0 391.2L1344.0 408.1L1344.0 401.9L1344.0 427.4L1344.1 391.7L1344.5 405.5L1344.5 404.2L1344.6 393.0L1344.7 422.2L1345.0 407.9L1345.0 401.5L1345.1 393.5L1345.3 421.3L1345.5 408.9L1345.5 407.6L1345.6 418.8L1345.6 391.2L1346.0 399.6L1346.0 407.2L1346.2 387.9L1346.2 421.0L1346.5 407.3L1346.5 407.6L1346.5 420.7L1346.7 390.0L1347.0 415.5L1347.0 410.5L1347.0 417.3L1347.3 393.8L1347.5 406.5L1347.5 409.4L1347.6 423.4L1347.9 395.7L1348.0 397.6L1348.0 403.1L1348.3 418.6L1348.4 388.2L1348.5 406.8L1348.5 401.1L1348.7 392.9L1349.0 419.0L1349.0 403.0L1349.0 397.1L1349.3 423.7L1349.4 390.2L1349.5 394.4L1349.5 400.3L1349.6 391.2L1349.7 430.8L1350.0 401.1L1350.0 399.5L1350.4 392.2L1350.5 420.8L1350.5 397.2L1350.5 410.2L1350.6 394.2L1350.6 419.0L1351.0 402.5L1351.0 400.4L1351.0 421.0L1351.4 393.0L1351.5 405.4L1351.5 406.6L1351.6 393.2L1351.8 419.8L1352.0 402.9L1352.0 402.3L1352.2 426.6L1352.3 391.1L1352.5 400.9L1352.5 401.4L1352.5 391.1L1352.7 420.9L1353.0 406.6L1353.0 404.6L1353.2 416.9L1353.3 393.3L1353.5 401.5L1353.5 408.5L1353.6 395.3L1353.6 421.3L1354.0 407.2L1354.0 398.1L1354.2 415.0L1354.4 391.9L1354.5 402.1L1354.5 412.2L1354.6 420.4L1354.8 389.5L1355.0 409.6L1355.0 398.3L1355.1 389.7L1355.4 423.6L1355.5 404.3L1355.5 409.6L1355.6 415.8L1355.6 392.7L1356.0 408.6L1356.0 412.4L1356.2 420.6L1356.4 391.7L1356.5 397.5L1356.5 399.3L1356.8 389.7L1356.9 424.2L1357.0 403.7L1357.0 402.7L1357.1 390.9L1357.1 432.9L1357.5 412.5L1357.5 415.8L1357.6 420.2L1357.6 394.2L1358.0 401.4L1358.0 401.1L1358.3 393.2L1358.3 415.6L1358.5 415.0L1358.5 414.1L1358.6 390.9L1358.9 417.9L1359.0 400.9L1359.0 411.4L1359.1 424.3L1359.5 392.7L1359.5 403.3L1359.5 410.1L1359.6 389.3L1360.0 418.3L1360.0 397.9L1360.0 409.4L1360.4 392.2L1360.5 423.9L1360.5 400.2L1360.5 403.3L1360.6 392.6L1360.6 417.1L1361.0 416.7L1361.0 400.7L1361.1 389.5L1361.1 417.7L1361.5 404.9L1361.5 395.3L1361.6 419.5L1362.0 390.7L1362.0 390.7L1362.0 400.7L1362.1 425.2L1362.5 390.6L1362.5 406.7L1362.5 407.3L1362.5 417.9L1362.5 391.9L1363.0 412.5L1363.0 399.2L1363.2 422.0L1363.4 391.1L1363.5 405.4L1363.5 405.1L1363.6 422.4L1363.7 393.3L1364.0 400.2L1364.0 407.3L1364.1 422.4L1364.2 393.3L1364.5 399.9L1364.5 398.8L1364.8 421.9L1364.9 392.0L1365.0 413.0L1365.0 404.3L1365.1 392.7L1365.2 420.5L1365.5 395.3L1365.5 417.5L1365.8 429.3L1366.0 391.6L1366.0 394.8L1366.0 402.6L1366.0 395.2L1366.3 420.0L1366.5 409.0L1366.5 411.2L1366.7 427.2L1366.8 392.8L1367.0 410.3L1367.0 407.1L1367.1 422.8L1367.4 391.4L1367.5 409.1L1367.5 409.4L1367.9 415.5L1368.0 390.6L1368.0 407.7L1368.0 403.6L1368.3 425.1L1368.3 389.3L1368.5 408.8L1368.5 405.0L1368.5 424.2L1368.8 394.8L1369.0 404.4L1369.0 409.1L1369.1 393.5L1369.2 420.6L1369.5 414.1L1369.5 403.8L1369.8 393.7L1369.9 419.8L1370.0 408.3L1370.0 406.9L1370.2 428.7L1370.4 390.1L1370.5 397.2L1370.5 395.7L1370.7 422.1L1370.9 388.8L1371.0 405.6L1371.0 400.1L1371.1 391.9L1371.5 421.9L1371.5 401.2L1371.5 397.5L1371.8 393.0L1372.0 426.1L1372.0 400.8L1372.0 407.9L1372.3 388.7L1372.4 419.6L1372.5 405.9L1372.5 411.3L1372.8 391.9L1373.0 422.1L1373.0 407.0L1373.0 412.1L1373.2 392.2L1373.3 421.9L1373.5 401.6L1373.5 405.4L1373.6 391.8L1373.9 423.2L1374.0 408.7L1374.0 404.8L1374.1 392.9L1374.2 422.7L1374.5 404.6L1374.5 399.6L1374.5 422.7L1374.7 393.9L1375.0 398.5L1375.0 401.8L1375.4 418.2L1375.4 395.0L1375.5 409.2L1375.5 401.8L1375.8 424.0L1375.9 391.3L1376.0 403.6L1376.0 397.9L1376.2 419.7L1376.2 393.5L1376.5 406.0L1376.5 400.4L1376.8 394.6L1376.8 418.8L1377.0 407.8L1377.0 401.7L1377.0 392.6L1377.1 416.2L1377.5 405.3L1377.5 396.5L1377.6 394.3L1377.8 421.2L1378.0 408.3L1378.0 404.9L1378.2 393.4L1378.3 424.6L1378.5 420.9L1378.5 402.1L1378.5 388.2L1378.8 422.4L1379.0 398.8L1379.0 403.0L1379.1 424.1L1379.3 390.4L1379.5 400.4L1379.5 397.7L1379.6 390.6L1379.9 420.1L1380.0 413.3L1380.0 402.6L1380.4 434.0L1380.5 393.9L1380.5 393.9L1380.5 393.0L1380.9 423.4L1380.9 390.6L1381.0 406.2L1381.0 402.5L1381.1 421.0L1381.1 395.4L1381.5 402.6L1381.5 399.0L1381.8 391.9L1382.0 419.9L1382.0 401.5L1382.0 406.1L1382.3 391.9L1382.3 421.5L1382.5 405.4L1382.5 403.6L1382.5 421.7L1382.7 391.0L1383.0 409.9L1383.0 399.2L1383.2 416.9L1383.3 393.3L1383.5 410.4L1383.5 405.4L1383.7 422.8L1383.8 391.5L1384.0 396.3L1384.0 399.6L1384.0 392.6L1384.4 421.6L1384.5 405.6L1384.5 401.7L1384.7 423.6L1384.8 394.0L1385.0 412.9L1385.0 400.1L1385.0 394.6L1385.1 426.3L1385.5 408.8L1385.5 398.1L1385.5 419.0L1385.9 392.0L1386.0 406.0L1386.0 409.2L1386.1 427.5L1386.4 391.9L1386.5 396.3L1386.5 404.3L1386.8 391.9L1386.9 424.2L1387.0 400.0L1387.0 403.5L1387.3 393.1L1387.5 425.7L1387.5 399.0L1387.5 399.3L1387.5 391.2L1387.6 418.3L1388.0 403.0L1388.0 408.9L1388.2 421.7L1388.3 390.5L1388.5 406.3L1388.5 403.0L1388.8 420.7L1388.9 392.2L1389.0 405.4L1389.0 401.4L1389.3 422.5L1389.4 390.4L1389.5 408.8L1389.5 393.7L1389.6 422.4L1389.9 389.8L1390.0 407.8L1390.0 418.0L1390.4 423.7L1390.5 392.7L1390.5 401.9L1390.5 413.6L1390.8 426.6L1390.9 392.2L1391.0 397.2L1391.0 408.2L1391.4 421.0L1391.5 393.1L1391.5 406.4L1391.5 398.6L1391.5 422.7L1391.8 394.0L1392.0 403.8L1392.0 402.4L1392.2 389.9L1392.3 425.9L1392.5 405.7L1392.5 401.9L1392.9 393.9L1392.9 421.2L1393.0 402.0L1393.0 406.3L1393.1 390.6L1393.1 427.8L1393.5 396.8L1393.5 404.6L1393.8 391.2L1393.9 422.2L1394.0 399.6L1394.0 402.9L1394.3 432.4L1394.3 390.2L1394.5 394.7L1394.5 412.9L1394.5 419.5L1394.8 389.7L1395.0 401.5L1395.0 418.2L1395.3 392.7L1395.3 426.6L1395.5 402.2L1395.5 400.3L1395.7 420.4L1395.7 394.5L1396.0 401.4L1396.0 405.9L1396.1 392.5L1396.3 422.6L1396.5 401.1L1396.5 412.0L1396.5 392.7L1396.6 424.2L1397.0 396.3L1397.0 404.3L1397.3 420.7L1397.5 392.4L1397.5 399.8L1397.5 402.5L1397.6 417.0L1397.9 380.5L1398.0 407.5L1398.0 394.7L1398.0 391.5L1398.3 420.3L1398.5 395.5L1398.5 400.3L1398.7 427.4L1398.8 390.8L1399.0 411.4L1399.0 410.9L1399.2 391.7L1399.4 419.7L1399.5 405.3L1399.5 400.9L1399.7 390.8L1399.9 430.9L1400.0 401.3L1400.0 404.3L1400.1 424.4L1400.1 392.1L1400.5 396.2L1400.5 407.3L1400.5 425.6L1400.6 391.9L1401.0 406.7L1401.0 408.7L1401.2 394.1L1401.3 420.6L1401.5 396.7L1401.5 410.7L1401.5 391.7L1402.0 421.5L1402.0 421.5L1402.0 400.7L1402.1 392.0L1402.2 429.2L1402.5 392.7L1402.5 415.1L1402.7 419.5L1402.9 392.4L1403.0 404.9L1403.0 410.7L1403.2 422.9L1403.3 389.1L1403.5 415.6L1403.5 404.5L1403.6 391.7L1403.9 425.9L1404.0 418.5L1404.0 402.0L1404.0 425.1L1404.5 392.3L1404.5 397.2L1404.5 404.5L1404.6 422.1L1405.0 393.1L1405.0 393.1L1405.0 412.2L1405.4 388.4L1405.4 427.5L1405.5 406.7L1405.5 397.4L1406.0 390.4L1406.0 418.8L1406.0 401.7L1406.0 402.1L1406.5 419.2L1406.5 393.5L1406.5 411.2L1406.5 404.3L1406.6 391.9L1406.7 420.1L1407.0 401.9L1407.0 398.6L1407.1 416.9L1407.1 392.6L1407.5 411.4L1407.5 395.4L1407.7 427.3L1407.9 390.7L1408.0 417.0L1408.0 414.4L1408.3 423.2L1408.5 391.5L1408.5 411.9L1408.5 393.7L1408.5 393.7L1408.9 430.3L1409.0 401.2L1409.0 406.0L1409.1 386.8L1409.3 422.1L1409.5 397.3L1409.5 400.7L1409.7 388.2L1409.7 418.3L1410.0 410.9L1410.0 401.2L1410.3 391.0L1410.4 420.0L1410.5 404.2L1410.5 405.2L1410.5 417.9L1410.8 391.3L1411.0 404.7L1411.0 406.5L1411.3 389.4L1411.3 424.6L1411.5 409.1L1411.5 410.3L1411.6 427.2L1411.7 390.0L1412.0 402.9L1412.0 397.6L1412.1 432.9L1412.4 392.0L1412.5 408.2L1412.5 412.7L1412.5 390.6L1412.6 421.6L1413.0 403.0L1413.0 403.3L1413.2 422.2L1413.2 390.3L1413.5 407.3L1413.5 406.0L1413.6 391.0L1414.0 420.6L1414.0 403.2L1414.0 411.7L1414.2 390.9L1414.4 425.7L1414.5 400.2L1414.5 410.0L1414.9 391.3L1414.9 423.3L1415.0 405.3L1415.0 402.6L1415.1 423.3L1415.2 391.5L1415.5 400.9L1415.5 405.7L1415.9 390.9L1415.9 423.6L1416.0 411.7L1416.0 399.5L1416.3 391.5L1416.4 422.1L1416.5 396.5L1416.5 396.0L1416.7 391.4L1416.9 420.4L1417.0 404.1L1417.0 403.6L1417.2 427.8L1417.5 392.1L1417.5 406.2L1417.5 403.9L1417.7 424.6L1418.0 391.9L1418.0 408.9L1418.0 404.5L1418.1 420.1L1418.4 390.7L1418.5 400.9L1418.5 407.2L1418.6 392.8L1418.7 416.9L1419.0 404.5L1419.0 404.9L1419.0 390.0L1419.5 420.7L1419.5 406.0L1419.5 395.6L1419.7 423.9L1420.0 389.7L1420.0 389.7L1420.0 405.0L1420.4 387.6L1420.4 429.6L1420.5 398.4L1420.5 402.3L1420.7 426.1L1420.8 390.7L1421.0 406.7L1421.0 399.1L1421.1 420.5L1421.2 391.1L1421.5 406.0L1421.5 412.9L1421.6 417.0L1421.7 388.3L1422.0 404.1L1422.0 397.6L1422.1 424.5L1422.4 389.4L1422.5 410.0L1422.5 403.0L1422.8 416.4L1422.9 391.6L1423.0 405.6L1423.0 404.6L1423.4 390.2L1423.4 422.9L1423.5 398.8L1423.5 407.2L1423.7 421.9L1423.9 391.0L1424.0 408.6L1424.0 403.7L1424.1 391.0L1424.4 421.6L1424.5 399.8L1424.5 406.0L1424.7 426.9L1424.9 385.9L1425.0 392.5L1425.0 416.9L1425.1 419.9L1425.5 391.8L1425.5 391.8L1425.5 401.0L1425.5 392.0L1425.8 420.2L1426.0 402.7L1426.0 406.7L1426.1 391.4L1426.3 422.5L1426.5 400.7L1426.5 403.3L1426.6 391.4L1426.9 423.5L1427.0 404.2L1427.0 395.5L1427.3 420.7L1427.4 391.3L1427.5 407.8L1427.5 407.0L1427.6 391.8L1427.8 424.2L1428.0 402.6L1428.0 397.1L1428.3 427.6L1428.3 391.9L1428.5 398.8L1428.5 408.9L1428.6 391.3L1428.8 423.4L1429.0 399.7L1429.0 402.1L1429.2 429.9L1429.2 393.5L1429.5 405.6L1429.5 404.0L1429.6 391.0L1429.7 422.9L1430.0 408.0L1430.0 399.4L1430.0 418.5L1430.2 389.5L1430.5 409.1L1430.5 400.9L1430.7 421.6L1431.0 390.8L1431.0 403.7L1431.0 400.3L1431.0 420.7L1431.0 391.4L1431.5 407.6L1431.5 389.7L1431.5 389.7L1431.6 421.8L1432.0 392.5L1432.0 402.0L1432.1 431.3L1432.3 390.5L1432.5 405.2L1432.5 405.9L1432.6 389.7L1433.0 419.9L1433.0 399.6L1433.0 401.0L1433.1 425.8L1433.4 388.4L1433.5 403.9L1433.5 412.5L1433.9 392.2L1433.9 420.3L1434.0 402.1L1434.0 406.0L1434.4 392.4L1434.5 426.1L1434.5 403.4L1434.5 406.0L1434.6 427.1L1435.0 386.7L1435.0 401.5L1435.0 399.7L1435.5 425.7L1435.5 390.3L1435.5 404.1L1435.5 410.8L1435.8 430.8L1435.9 392.1L1436.0 403.1L1436.0 408.5L1436.0 389.3L1436.4 418.7L1436.5 412.4L1436.5 407.4L1436.5 393.8L1436.5 414.0L1436.6 402.3" stroke="rgba(201,28,30,0.78)"/></g><rect x="788.5" y="47.5" width="647.0" height="521.0" fill="none" stroke="#6c6c6c" stroke-width="1" shape-rendering="crispEdges"/></svg>
<svg class="ic" style="left:99px;top:613px" width="15" height="15" viewBox="0 0 15 15"><circle cx="7.5" cy="7.5" r="6.5" fill="#0560bf"/><circle cx="7.5" cy="7.5" r="2.3" fill="#fff"/></svg>
<svg class="ic" style="left:148px;top:613px" width="15" height="15" viewBox="0 0 15 15"><circle cx="7.5" cy="7.5" r="6" fill="#f6f6f6" stroke="#5c5c5c" stroke-width="1"/></svg>
<div style="left:297.5px;top:608.5px;width:122px;height:22.5px;background:#fdfdfd;border:1px solid #d2d2d2;border-bottom-color:#b9b9b9;border-radius:3px;box-sizing:border-box"></div>
<svg class="ic" style="left:406px;top:617.45px" width="10" height="6" viewBox="0 0 10 6"><path d="M1 0.8L5 4.8L9 0.8" fill="none" stroke="#4a4a4a" stroke-width="1"/></svg>
<div style="left:512px;top:608px;width:69.5px;height:23px;background:#fff;border:1px solid #7c8393;box-sizing:border-box"></div>
<div style="left:566.3px;top:610px;width:13px;height:8.9px;background:#f1f1f1;border:1px solid #dadada;box-sizing:border-box"></div>
<div style="left:566.3px;top:620.1px;width:13px;height:8.9px;background:#f1f1f1;border:1px solid #dadada;box-sizing:border-box"></div>
<svg class="ic" style="left:569.3px;top:612.5px" width="7" height="14" viewBox="0 0 7 14"><path d="M0 4.2L3.5 0.6L7 4.2Z M0 9.8L3.5 13.4L7 9.8Z" fill="#1a1a1a"/></svg>
<div style="left:825.5px;top:608.5px;width:61px;height:22.5px;background:#fdfdfd;border:1px solid #d2d2d2;border-bottom-color:#b9b9b9;border-radius:3px;box-sizing:border-box"></div>
<svg class="ic" style="left:873px;top:617.45px" width="10" height="6" viewBox="0 0 10 6"><path d="M1 0.8L5 4.8L9 0.8" fill="none" stroke="#4a4a4a" stroke-width="1"/></svg>
<div style="left:957.5px;top:608.5px;width:181px;height:22.5px;background:#fdfdfd;border:1px solid #d2d2d2;border-bottom-color:#b9b9b9;border-radius:3px;box-sizing:border-box"></div>
<svg class="ic" style="left:1125px;top:617.45px" width="10" height="6" viewBox="0 0 10 6"><path d="M1 0.8L5 4.8L9 0.8" fill="none" stroke="#4a4a4a" stroke-width="1"/></svg>
<div style="left:1212px;top:608px;width:69.5px;height:23px;background:#fff;border:1px solid #7c8393;box-sizing:border-box"></div>
<div style="left:1266.3px;top:610px;width:13px;height:8.9px;background:#f1f1f1;border:1px solid #dadada;box-sizing:border-box"></div>
<div style="left:1266.3px;top:620.1px;width:13px;height:8.9px;background:#f1f1f1;border:1px solid #dadada;box-sizing:border-box"></div>
<svg class="ic" style="left:1269.3px;top:612.5px" width="7" height="14" viewBox="0 0 7 14"><path d="M0 4.2L3.5 0.6L7 4.2Z M0 9.8L3.5 13.4L7 9.8Z" fill="#1a1a1a"/></svg>
<div style="left:1289px;top:613.5px;width:13px;height:13px;background:#f7f7f7;border:1px solid #5c5c5c;border-radius:3px;box-sizing:border-box"></div>
<div style="left:1397.5px;top:609px;width:20.5px;height:22.5px;background:#fdfdfd;border:1px solid #d2d2d2;border-right:none;border-bottom-color:#b9b9b9;border-radius:4px 0 0 4px;box-sizing:border-box"></div>
<div style="left:1425px;top:606px;width:31.5px;height:24.7px;background:#fdfdfd;border:1px solid #d2d2d2;border-bottom-color:#b9b9b9;border-radius:4px;box-sizing:border-box"></div>
<div style="left:0px;top:649px;width:1469px;height:7px;background:#497584;"></div>
<svg class="ic" style="left:725px;top:649px" width="20" height="7" viewBox="0 0 20 7"><g fill="#c9d6da"><circle cx="3.4" cy="3.5" r="1.5"/><circle cx="9.4" cy="3.5" r="1.5"/><circle cx="15.4" cy="3.5" r="1.5"/></g></svg>
<div style="left:0px;top:656px;width:1469px;height:24.5px;background:#d4d4d4;"></div>
<div style="left:0px;top:680.4px;width:1469px;height:1px;background:#dde6e8;"></div>
<svg class="ic" style="left:2px;top:660px" width="16" height="16" viewBox="0 0 16 16"><rect width="16" height="16" fill="#264356"/><path d="M8 2V14M2 8H14" stroke="#fff" stroke-width="2"/></svg>
<svg class="ic" style="left:83px;top:667px" width="5" height="2.8" viewBox="0 0 5 2.8"><path d="M0 0H5L2.5 2.8Z" fill="#000"/></svg>
<div style="left:95px;top:661px;width:1px;height:15px;background:#b4b4b4;"></div>
<div style="left:96px;top:662px;width:1px;height:15px;background:#fbfbfb;"></div>
<svg class="ic" style="left:100px;top:660px;overflow:hidden" width="16" height="16" viewBox="0 0 16 16"><rect width="16" height="16" fill="#264356"/><g fill="#fff"><ellipse cx="5.5" cy="4" rx="4.5" ry="2.1"/><path d="M1 5.6c0.6 2 8.4 2 9 0v2.3c0 1.9-9 1.9-9 0z"/><path d="M1 8.9c0.6 1.8 8.4 1.8 9 0v2.2c0 1.9-9 1.9-9 0z"/><path d="M1 12.1c0.6 1.8 8.4 1.8 9 0v1.5c0 2.1-9 2.1-9 0z"/></g><ellipse cx="5.5" cy="3.7" rx="1.5" ry="0.55" fill="#4f8a95"/><path d="M8.3 7H12.2V4.9L16 8.5L12.2 12.1V10H8.3z" fill="#fff" stroke="#264356" stroke-width="2" paint-order="stroke" stroke-linejoin="miter"/></svg>
<div style="left:213px;top:661px;width:1px;height:15px;background:#b4b4b4;"></div>
<div style="left:214px;top:662px;width:1px;height:15px;background:#fbfbfb;"></div>
<svg class="ic" style="left:218px;top:660px" width="16" height="16" viewBox="0 0 16 16"><rect width="16" height="16" fill="#264356"/><path d="M4.8 3.2L12 8L4.8 12.8Z" fill="#fff"/></svg>
<svg class="ic" style="left:1449px;top:662px" width="14" height="12" viewBox="0 0 14 12"><path d="M5.3 0.8h2.6v2.6h2.9L6.6 7.2 2.4 3.4h2.9z" fill="#3b5786"/><rect x="0" y="9" width="13" height="1.8" fill="#3b5786"/></svg>
<div style="left:3px;top:684px;width:716px;height:158px;background:#dbe5e7;"></div>
<div style="left:3px;top:709px;width:716px;height:1px;background:#a6a6a6;"></div>
<div style="left:3px;top:710px;width:716px;height:1px;background:#f6f8f8;"></div>
<div style="left:92px;top:685px;width:75px;height:23px;background:#fff;"></div>
<div style="left:155px;top:686px;width:11px;height:20px;background:#f9f9f9;"></div>
<svg class="ic" style="left:157.8px;top:694.9px" width="5.5" height="3" viewBox="0 0 5.5 3"><path d="M0 0H5.5L2.75 3Z" fill="#000"/></svg>
<svg class="ic" style="left:170.2px;top:688px" width="16" height="16" viewBox="0 0 16 16"><rect width="16" height="16" fill="#1f3f52"/><rect x="1" y="3" width="14" height="10" fill="#fff"/><rect x="1" y="5" width="14" height="3" fill="#505fa0"/><rect x="1" y="8" width="14" height="3" fill="#4a7c8a"/><path d="M1 11 L5.2 6.4 L9.3 10.6 L15 4.6" fill="none" stroke="#fff" stroke-width="1.1"/></svg>
<svg class="ic" style="left:188px;top:694.8px" width="5" height="2.8" viewBox="0 0 5 2.8"><path d="M0 0H5L2.5 2.8Z" fill="#000"/></svg>
<svg class="ic" style="left:200.2px;top:688px" width="16" height="16" viewBox="0 0 16 16"><rect width="16" height="16" fill="#264356"/><path d="M6.61 3.51 L6.91 1.85 L9.09 1.85 L9.39 3.51 L10.19 3.84 L11.58 2.88 L13.12 4.42 L12.16 5.81 L12.49 6.61 L14.15 6.91 L14.15 9.09 L12.49 9.39 L12.16 10.19 L13.12 11.58 L11.58 13.12 L10.19 12.16 L9.39 12.49 L9.09 14.15 L6.91 14.15 L6.61 12.49 L5.81 12.16 L4.42 13.12 L2.88 11.58 L3.84 10.19 L3.51 9.39 L1.85 9.09 L1.85 6.91 L3.51 6.61 L3.84 5.81 L2.88 4.42 L4.42 2.88 L5.81 3.84Z M6.00 8.00 a2.00 2.00 0 1 0 4.00 0 a2.00 2.00 0 1 0 -4.00 0Z" fill="#fff" fill-rule="evenodd"/></svg>
<div style="left:669px;top:689px;width:1px;height:15px;background:#b4b4b4;"></div>
<div style="left:670px;top:690px;width:1px;height:15px;background:#fbfbfb;"></div>
<svg class="ic" style="left:677px;top:690px" width="12" height="12" viewBox="0 0 12 12"><path d="M0 0H4V2H2V10H10V8H12V12H0Z" fill="#12357e"/><path d="M6 0H12V6Z" fill="#12357e"/><path d="M10.8 1.2L5.6 6.4" stroke="#12357e" stroke-width="2.2" fill="none"/></svg>
<svg class="ic" style="left:701px;top:691px" width="10" height="10" viewBox="0 0 10 10"><path d="M0.9 0.9L9.1 9.1M9.1 0.9L0.9 9.1" stroke="#1c3a4c" stroke-width="2.1" fill="none"/></svg>
<svg class="ic" style="left:173px;top:739px" width="10" height="10" viewBox="0 0 10 10"><path d="M0 0H10L5 10Z" fill="#000"/></svg>
<svg class="ic" style="left:173px;top:802px" width="10" height="10" viewBox="0 0 10 10"><path d="M0 0H10L5 10Z" fill="#000"/></svg>
<div style="left:5px;top:774px;width:181px;height:1px;background:#9a9a9a;"></div>
<div style="left:186px;top:714px;width:524px;height:41px;background:#000;"></div>
<div style="left:186px;top:795px;width:524px;height:42px;background:#000;"></div>
<div style="left:186px;top:773px;width:524px;height:1px;background:#000;"></div>
<div style="left:186px;top:774px;width:524px;height:3px;background:#d2d2d2;"></div>
<div style="left:186px;top:755px;width:524px;height:18px;background:#808080;border:1px solid #d4d0d0;box-sizing:border-box"></div>
<div style="left:187px;top:756px;width:229.3px;height:16px;background:#00ff00;"></div>
<div style="left:187px;top:762px;width:456.3px;height:3px;background:#000;"></div>
<div style="left:186px;top:777px;width:524px;height:18px;background:#808080;border:1px solid #d4d0d0;box-sizing:border-box"></div>
<div style="left:187px;top:778px;width:230.5px;height:16px;background:#00ff00;"></div>
<div style="left:187px;top:784px;width:456.3px;height:3px;background:#000;"></div>
<div style="left:725px;top:684px;width:716px;height:158px;background:#dbe5e7;"></div>
<div style="left:725px;top:709px;width:716px;height:1px;background:#a6a6a6;"></div>
<div style="left:725px;top:710px;width:716px;height:1px;background:#f6f8f8;"></div>
<div style="left:836.8px;top:685px;width:75px;height:23px;background:#fff;"></div>
<div style="left:899.8px;top:686px;width:11px;height:20px;background:#f9f9f9;"></div>
<svg class="ic" style="left:902.6px;top:694.9px" width="5.5" height="3" viewBox="0 0 5.5 3"><path d="M0 0H5.5L2.75 3Z" fill="#000"/></svg>
<svg class="ic" style="left:915px;top:688px" width="16" height="16" viewBox="0 0 16 16"><rect width="16" height="16" fill="#1f3f52"/><rect x="1" y="3" width="14" height="10" fill="#fff"/><rect x="1" y="5" width="14" height="3" fill="#505fa0"/><rect x="1" y="8" width="14" height="3" fill="#4a7c8a"/><path d="M1 11 L5.2 6.4 L9.3 10.6 L15 4.6" fill="none" stroke="#fff" stroke-width="1.1"/></svg>
<svg class="ic" style="left:932.8px;top:694.8px" width="5" height="2.8" viewBox="0 0 5 2.8"><path d="M0 0H5L2.5 2.8Z" fill="#000"/></svg>
<svg class="ic" style="left:945px;top:688px" width="16" height="16" viewBox="0 0 16 16"><rect width="16" height="16" fill="#264356"/><path d="M6.61 3.51 L6.91 1.85 L9.09 1.85 L9.39 3.51 L10.19 3.84 L11.58 2.88 L13.12 4.42 L12.16 5.81 L12.49 6.61 L14.15 6.91 L14.15 9.09 L12.49 9.39 L12.16 10.19 L13.12 11.58 L11.58 13.12 L10.19 12.16 L9.39 12.49 L9.09 14.15 L6.91 14.15 L6.61 12.49 L5.81 12.16 L4.42 13.12 L2.88 11.58 L3.84 10.19 L3.51 9.39 L1.85 9.09 L1.85 6.91 L3.51 6.61 L3.84 5.81 L2.88 4.42 L4.42 2.88 L5.81 3.84Z M6.00 8.00 a2.00 2.00 0 1 0 4.00 0 a2.00 2.00 0 1 0 -4.00 0Z" fill="#fff" fill-rule="evenodd"/></svg>
<div style="left:1391px;top:689px;width:1px;height:15px;background:#b4b4b4;"></div>
<div style="left:1392px;top:690px;width:1px;height:15px;background:#fbfbfb;"></div>
<svg class="ic" style="left:1399px;top:690px" width="12" height="12" viewBox="0 0 12 12"><path d="M0 0H4V2H2V10H10V8H12V12H0Z" fill="#12357e"/><path d="M6 0H12V6Z" fill="#12357e"/><path d="M10.8 1.2L5.6 6.4" stroke="#12357e" stroke-width="2.2" fill="none"/></svg>
<svg class="ic" style="left:1423px;top:691px" width="10" height="10" viewBox="0 0 10 10"><path d="M0.9 0.9L9.1 9.1M9.1 0.9L0.9 9.1" stroke="#1c3a4c" stroke-width="2.1" fill="none"/></svg>
<svg class="ic" style="left:895px;top:739px" width="10" height="10" viewBox="0 0 10 10"><path d="M0 0H10L5 10Z" fill="#000"/></svg>
<svg class="ic" style="left:895px;top:802px" width="10" height="10" viewBox="0 0 10 10"><path d="M0 0H10L5 10Z" fill="#000"/></svg>
<div style="left:727px;top:774px;width:181px;height:1px;background:#9a9a9a;"></div>
<div style="left:908px;top:714px;width:524.5px;height:41px;background:#000;"></div>
<div style="left:908px;top:795px;width:524.5px;height:42px;background:#000;"></div>
<div style="left:908px;top:773px;width:524.5px;height:1px;background:#000;"></div>
<div style="left:908px;top:774px;width:524.5px;height:3px;background:#d2d2d2;"></div>
<div style="left:908px;top:755px;width:524.5px;height:18px;background:#808080;border:1px solid #d4d0d0;box-sizing:border-box"></div>
<div style="left:909px;top:756px;width:224.3px;height:16px;background:#00ff00;"></div>
<div style="left:909px;top:762px;width:522px;height:3px;background:#000;"></div>
<div style="left:908px;top:777px;width:524.5px;height:18px;background:#808080;border:1px solid #d4d0d0;box-sizing:border-box"></div>
<div style="left:909px;top:778px;width:226.6px;height:16px;background:#00ff00;"></div>
<div style="left:909px;top:784px;width:522px;height:3px;background:#000;"></div>
<div style="left:3px;top:848px;width:716px;height:158px;background:#dbe5e7;"></div>
<div style="left:3px;top:873px;width:716px;height:1px;background:#a6a6a6;"></div>
<div style="left:3px;top:874px;width:716px;height:1px;background:#f6f8f8;"></div>
<div style="left:92.9px;top:849px;width:75px;height:23px;background:#fff;"></div>
<div style="left:155.9px;top:850px;width:11px;height:20px;background:#f9f9f9;"></div>
<svg class="ic" style="left:158.7px;top:858.9px" width="5.5" height="3" viewBox="0 0 5.5 3"><path d="M0 0H5.5L2.75 3Z" fill="#000"/></svg>
<svg class="ic" style="left:171.1px;top:852px" width="16" height="16" viewBox="0 0 16 16"><rect width="16" height="16" fill="#1f3f52"/><rect x="1" y="3" width="14" height="10" fill="#fff"/><rect x="1" y="5" width="14" height="3" fill="#505fa0"/><rect x="1" y="8" width="14" height="3" fill="#4a7c8a"/><path d="M1 11 L5.2 6.4 L9.3 10.6 L15 4.6" fill="none" stroke="#fff" stroke-width="1.1"/></svg>
<svg class="ic" style="left:188.9px;top:858.8px" width="5" height="2.8" viewBox="0 0 5 2.8"><path d="M0 0H5L2.5 2.8Z" fill="#000"/></svg>
<svg class="ic" style="left:201.1px;top:852px" width="16" height="16" viewBox="0 0 16 16"><rect width="16" height="16" fill="#264356"/><path d="M6.61 3.51 L6.91 1.85 L9.09 1.85 L9.39 3.51 L10.19 3.84 L11.58 2.88 L13.12 4.42 L12.16 5.81 L12.49 6.61 L14.15 6.91 L14.15 9.09 L12.49 9.39 L12.16 10.19 L13.12 11.58 L11.58 13.12 L10.19 12.16 L9.39 12.49 L9.09 14.15 L6.91 14.15 L6.61 12.49 L5.81 12.16 L4.42 13.12 L2.88 11.58 L3.84 10.19 L3.51 9.39 L1.85 9.09 L1.85 6.91 L3.51 6.61 L3.84 5.81 L2.88 4.42 L4.42 2.88 L5.81 3.84Z M6.00 8.00 a2.00 2.00 0 1 0 4.00 0 a2.00 2.00 0 1 0 -4.00 0Z" fill="#fff" fill-rule="evenodd"/></svg>
<div style="left:669px;top:853px;width:1px;height:15px;background:#b4b4b4;"></div>
<div style="left:670px;top:854px;width:1px;height:15px;background:#fbfbfb;"></div>
<svg class="ic" style="left:677px;top:854px" width="12" height="12" viewBox="0 0 12 12"><path d="M0 0H4V2H2V10H10V8H12V12H0Z" fill="#12357e"/><path d="M6 0H12V6Z" fill="#12357e"/><path d="M10.8 1.2L5.6 6.4" stroke="#12357e" stroke-width="2.2" fill="none"/></svg>
<svg class="ic" style="left:701px;top:855px" width="10" height="10" viewBox="0 0 10 10"><path d="M0.9 0.9L9.1 9.1M9.1 0.9L0.9 9.1" stroke="#1c3a4c" stroke-width="2.1" fill="none"/></svg>
<svg class="ic" style="left:173px;top:903px" width="10" height="10" viewBox="0 0 10 10"><path d="M0 0H10L5 10Z" fill="#000"/></svg>
<svg class="ic" style="left:173px;top:966px" width="10" height="10" viewBox="0 0 10 10"><path d="M0 0H10L5 10Z" fill="#000"/></svg>
<div style="left:5px;top:938px;width:181px;height:1px;background:#9a9a9a;"></div>
<div style="left:186px;top:878px;width:524px;height:41px;background:#000;"></div>
<div style="left:186px;top:959px;width:524px;height:42px;background:#000;"></div>
<div style="left:186px;top:937px;width:524px;height:1px;background:#000;"></div>
<div style="left:186px;top:938px;width:524px;height:3px;background:#d2d2d2;"></div>
<div style="left:186px;top:919px;width:524px;height:18px;background:#808080;border:1px solid #d4d0d0;box-sizing:border-box"></div>
<div style="left:187px;top:920px;width:296.8px;height:16px;background:#00ff00;"></div>
<div style="left:187px;top:926px;width:522px;height:3px;background:#000;"></div>
<div style="left:186px;top:941px;width:524px;height:18px;background:#808080;border:1px solid #d4d0d0;box-sizing:border-box"></div>
<div style="left:187px;top:942px;width:296.8px;height:16px;background:#00ff00;"></div>
<div style="left:187px;top:948px;width:522px;height:3px;background:#000;"></div>
<div style="left:725px;top:848px;width:716px;height:158px;background:#dbe5e7;"></div>
<div style="left:725px;top:873px;width:716px;height:1px;background:#a6a6a6;"></div>
<div style="left:725px;top:874px;width:716px;height:1px;background:#f6f8f8;"></div>
<div style="left:785.8px;top:849px;width:75px;height:23px;background:#fff;"></div>
<div style="left:848.8px;top:850px;width:11px;height:20px;background:#f9f9f9;"></div>
<svg class="ic" style="left:851.6px;top:858.9px" width="5.5" height="3" viewBox="0 0 5.5 3"><path d="M0 0H5.5L2.75 3Z" fill="#000"/></svg>
<svg class="ic" style="left:864px;top:852px" width="16" height="16" viewBox="0 0 16 16"><rect width="16" height="16" fill="#1f3f52"/><rect x="1" y="3" width="14" height="10" fill="#fff"/><rect x="1" y="5" width="14" height="3" fill="#505fa0"/><rect x="1" y="8" width="14" height="3" fill="#4a7c8a"/><path d="M1 11 L5.2 6.4 L9.3 10.6 L15 4.6" fill="none" stroke="#fff" stroke-width="1.1"/></svg>
<svg class="ic" style="left:881.8px;top:858.8px" width="5" height="2.8" viewBox="0 0 5 2.8"><path d="M0 0H5L2.5 2.8Z" fill="#000"/></svg>
<svg class="ic" style="left:894px;top:852px" width="16" height="16" viewBox="0 0 16 16"><rect width="16" height="16" fill="#264356"/><path d="M6.61 3.51 L6.91 1.85 L9.09 1.85 L9.39 3.51 L10.19 3.84 L11.58 2.88 L13.12 4.42 L12.16 5.81 L12.49 6.61 L14.15 6.91 L14.15 9.09 L12.49 9.39 L12.16 10.19 L13.12 11.58 L11.58 13.12 L10.19 12.16 L9.39 12.49 L9.09 14.15 L6.91 14.15 L6.61 12.49 L5.81 12.16 L4.42 13.12 L2.88 11.58 L3.84 10.19 L3.51 9.39 L1.85 9.09 L1.85 6.91 L3.51 6.61 L3.84 5.81 L2.88 4.42 L4.42 2.88 L5.81 3.84Z M6.00 8.00 a2.00 2.00 0 1 0 4.00 0 a2.00 2.00 0 1 0 -4.00 0Z" fill="#fff" fill-rule="evenodd"/></svg>
<div style="left:1391px;top:853px;width:1px;height:15px;background:#b4b4b4;"></div>
<div style="left:1392px;top:854px;width:1px;height:15px;background:#fbfbfb;"></div>
<svg class="ic" style="left:1399px;top:854px" width="12" height="12" viewBox="0 0 12 12"><path d="M0 0H4V2H2V10H10V8H12V12H0Z" fill="#12357e"/><path d="M6 0H12V6Z" fill="#12357e"/><path d="M10.8 1.2L5.6 6.4" stroke="#12357e" stroke-width="2.2" fill="none"/></svg>
<svg class="ic" style="left:1423px;top:855px" width="10" height="10" viewBox="0 0 10 10"><path d="M0.9 0.9L9.1 9.1M9.1 0.9L0.9 9.1" stroke="#1c3a4c" stroke-width="2.1" fill="none"/></svg>
<svg class="ic" style="left:895px;top:903px" width="10" height="10" viewBox="0 0 10 10"><path d="M0 0H10L5 10Z" fill="#000"/></svg>
<svg class="ic" style="left:895px;top:966px" width="10" height="10" viewBox="0 0 10 10"><path d="M0 0H10L5 10Z" fill="#000"/></svg>
<div style="left:727px;top:938px;width:181px;height:1px;background:#9a9a9a;"></div>
<div style="left:908px;top:878px;width:524.5px;height:41px;background:#000;"></div>
<div style="left:908px;top:959px;width:524.5px;height:42px;background:#000;"></div>
<div style="left:908px;top:937px;width:524.5px;height:1px;background:#000;"></div>
<div style="left:908px;top:938px;width:524.5px;height:3px;background:#d2d2d2;"></div>
<div style="left:908px;top:919px;width:524.5px;height:18px;background:#808080;border:1px solid #d4d0d0;box-sizing:border-box"></div>
<div style="left:909px;top:920px;width:298.8px;height:16px;background:#00ff00;"></div>
<div style="left:909px;top:926px;width:522px;height:3px;background:#000;"></div>
<div style="left:908px;top:941px;width:524.5px;height:18px;background:#808080;border:1px solid #d4d0d0;box-sizing:border-box"></div>
<div style="left:909px;top:942px;width:296.8px;height:16px;background:#00ff00;"></div>
<div style="left:909px;top:948px;width:522px;height:3px;background:#000;"></div>
<div style="left:3px;top:1013px;width:715px;height:1px;background:#8e8e8e;"></div>
<span class="t" id="t1" style="left:6.86px;top:8px;font-size:16px;font-weight:700;color:#000;transform:scaleX(0.9637);">Scope</span>
<span class="t" id="t2" style="left:62.15px;top:9px;font-size:12.5px;font-weight:400;color:#000;transform:scaleX(0.8856);">X:</span>
<span class="t" id="t3" style="left:81.21px;top:10px;font-size:12.5px;font-weight:400;color:#000;transform:scaleX(0.8440);">s</span>
<span class="t" id="t4" style="left:155.73px;top:9px;font-size:12.5px;font-weight:400;color:#000;transform:scaleX(0.9789);">Y:</span>
<span class="t" id="t5" style="left:175.45px;top:10px;font-size:12.5px;font-weight:400;color:#000;transform:scaleX(0.8508);">V</span>
<span class="t" id="t6" style="left:740.69px;top:8px;font-size:16px;font-weight:700;color:#000;transform:scaleX(0.8512);">FFT</span>
<span class="t" id="t7" style="left:774.35px;top:9px;font-size:12.5px;font-weight:400;color:#000;transform:scaleX(0.8856);">X:</span>
<span class="t" id="t8" style="left:793.56px;top:10px;font-size:12.5px;font-weight:400;color:#000;transform:scaleX(0.9172);">Hz</span>
<span class="t" id="t9" style="left:869.03px;top:9px;font-size:12.5px;font-weight:400;color:#000;transform:scaleX(0.9789);">Y:</span>
<span class="t" id="t10" style="left:887.99px;top:10px;font-size:12.5px;font-weight:400;color:#000;transform:scaleX(0.9728);">dBrA</span>
<span class="t" id="t11" style="left:25.99px;top:538px;font-size:12px;font-weight:400;color:#111;transform:scaleX(1.0477);">-200m</span>
<span class="t" id="t12" style="left:25.99px;top:509px;font-size:12px;font-weight:400;color:#111;transform:scaleX(1.0477);">-175m</span>
<span class="t" id="t13" style="left:25.99px;top:479px;font-size:12px;font-weight:400;color:#111;transform:scaleX(1.0477);">-150m</span>
<span class="t" id="t14" style="left:25.99px;top:450px;font-size:12px;font-weight:400;color:#111;transform:scaleX(1.0477);">-125m</span>
<span class="t" id="t15" style="left:25.99px;top:420px;font-size:12px;font-weight:400;color:#111;transform:scaleX(1.0477);">-100m</span>
<span class="t" id="t16" style="left:32.53px;top:390px;font-size:12px;font-weight:400;color:#111;transform:scaleX(1.0647);">-75m</span>
<span class="t" id="t17" style="left:32.53px;top:361px;font-size:12px;font-weight:400;color:#111;transform:scaleX(1.0647);">-50m</span>
<span class="t" id="t18" style="left:32.53px;top:331px;font-size:12px;font-weight:400;color:#111;transform:scaleX(1.0647);">-25m</span>
<span class="t" id="t19" style="left:53.99px;top:302px;font-size:12px;font-weight:400;color:#111;transform:scaleX(1.0983);">0</span>
<span class="t" id="t20" style="left:36.76px;top:272px;font-size:12px;font-weight:400;color:#111;transform:scaleX(1.0661);">25m</span>
<span class="t" id="t21" style="left:36.89px;top:242px;font-size:12px;font-weight:400;color:#111;transform:scaleX(1.0602);">50m</span>
<span class="t" id="t22" style="left:36.74px;top:213px;font-size:12px;font-weight:400;color:#111;transform:scaleX(1.0667);">75m</span>
<span class="t" id="t23" style="left:29.88px;top:183px;font-size:12px;font-weight:400;color:#111;transform:scaleX(1.0578);">100m</span>
<span class="t" id="t24" style="left:29.88px;top:154px;font-size:12px;font-weight:400;color:#111;transform:scaleX(1.0578);">125m</span>
<span class="t" id="t25" style="left:29.88px;top:124px;font-size:12px;font-weight:400;color:#111;transform:scaleX(1.0578);">150m</span>
<span class="t" id="t26" style="left:29.88px;top:94px;font-size:12px;font-weight:400;color:#111;transform:scaleX(1.0578);">175m</span>
<span class="t" id="t27" style="left:30.22px;top:65px;font-size:12px;font-weight:400;color:#111;transform:scaleX(1.0464);">200m</span>
<span class="t" id="t28" style="left:61.84px;top:573px;font-size:12px;font-weight:400;color:#111;transform:scaleX(1.0983);">0</span>
<span class="t" id="t29" style="left:93.69px;top:573px;font-size:12px;font-weight:400;color:#111;transform:scaleX(1.0674);">200u</span>
<span class="t" id="t30" style="left:136.38px;top:573px;font-size:12px;font-weight:400;color:#111;transform:scaleX(1.0537);">400u</span>
<span class="t" id="t31" style="left:178.35px;top:573px;font-size:12px;font-weight:400;color:#111;transform:scaleX(1.0677);">600u</span>
<span class="t" id="t32" style="left:220.78px;top:573px;font-size:12px;font-weight:400;color:#111;transform:scaleX(1.0640);">800u</span>
<span class="t" id="t33" style="left:262.95px;top:573px;font-size:12px;font-weight:400;color:#111;transform:scaleX(1.0612);">1.0m</span>
<span class="t" id="t34" style="left:305.28px;top:573px;font-size:12px;font-weight:400;color:#111;transform:scaleX(1.0612);">1.2m</span>
<span class="t" id="t35" style="left:347.61px;top:573px;font-size:12px;font-weight:400;color:#111;transform:scaleX(1.0612);">1.4m</span>
<span class="t" id="t36" style="left:389.95px;top:573px;font-size:12px;font-weight:400;color:#111;transform:scaleX(1.0612);">1.6m</span>
<span class="t" id="t37" style="left:432.28px;top:573px;font-size:12px;font-weight:400;color:#111;transform:scaleX(1.0612);">1.8m</span>
<span class="t" id="t38" style="left:474.95px;top:573px;font-size:12px;font-weight:400;color:#111;transform:scaleX(1.0481);">2.0m</span>
<span class="t" id="t39" style="left:517.28px;top:573px;font-size:12px;font-weight:400;color:#111;transform:scaleX(1.0481);">2.2m</span>
<span class="t" id="t40" style="left:559.62px;top:573px;font-size:12px;font-weight:400;color:#111;transform:scaleX(1.0481);">2.4m</span>
<span class="t" id="t41" style="left:601.95px;top:573px;font-size:12px;font-weight:400;color:#111;transform:scaleX(1.0481);">2.6m</span>
<span class="t" id="t42" style="left:644.28px;top:573px;font-size:12px;font-weight:400;color:#111;transform:scaleX(1.0481);">2.8m</span>
<span class="t" id="t43" style="left:686.77px;top:573px;font-size:12px;font-weight:400;color:#111;transform:scaleX(1.0421);">3.0m</span>
<span class="t" id="t44" style="left:366.49px;top:35px;font-size:11.5px;font-weight:400;color:#111;transform:scaleX(0.9818);">Scope</span>
<span class="t" id="t45" style="left:361.99px;top:586px;font-size:11.5px;font-weight:400;color:#111;transform:scaleX(0.9936);">Time (s)</span>
<span class="t" id="t46" style="left:21.00px;top:358.54px;font-size:11.5px;font-weight:400;color:#111;transform-origin:0 9.73px;transform:rotate(-90deg) scaleX(1.0143);">Instantaneous Level (V)</span>
<span class="t" id="t47" style="left:776.59px;top:56px;font-size:12px;font-weight:400;color:#111;transform:scaleX(1.0983);">0</span>
<span class="t" id="t48" style="left:765.43px;top:86px;font-size:12px;font-weight:400;color:#111;transform:scaleX(1.0648);">-10</span>
<span class="t" id="t49" style="left:765.43px;top:115px;font-size:12px;font-weight:400;color:#111;transform:scaleX(1.0648);">-20</span>
<span class="t" id="t50" style="left:765.43px;top:145px;font-size:12px;font-weight:400;color:#111;transform:scaleX(1.0648);">-30</span>
<span class="t" id="t51" style="left:765.43px;top:175px;font-size:12px;font-weight:400;color:#111;transform:scaleX(1.0648);">-40</span>
<span class="t" id="t52" style="left:765.43px;top:205px;font-size:12px;font-weight:400;color:#111;transform:scaleX(1.0648);">-50</span>
<span class="t" id="t53" style="left:765.43px;top:234px;font-size:12px;font-weight:400;color:#111;transform:scaleX(1.0648);">-60</span>
<span class="t" id="t54" style="left:765.43px;top:264px;font-size:12px;font-weight:400;color:#111;transform:scaleX(1.0648);">-70</span>
<span class="t" id="t55" style="left:765.43px;top:294px;font-size:12px;font-weight:400;color:#111;transform:scaleX(1.0648);">-80</span>
<span class="t" id="t56" style="left:765.43px;top:324px;font-size:12px;font-weight:400;color:#111;transform:scaleX(1.0648);">-90</span>
<span class="t" id="t57" style="left:758.90px;top:353px;font-size:12px;font-weight:400;color:#111;transform:scaleX(1.0406);">-100</span>
<span class="t" id="t58" style="left:758.87px;top:383px;font-size:12px;font-weight:400;color:#111;transform:scaleX(1.0825);">-110</span>
<span class="t" id="t59" style="left:758.90px;top:413px;font-size:12px;font-weight:400;color:#111;transform:scaleX(1.0406);">-120</span>
<span class="t" id="t60" style="left:758.90px;top:443px;font-size:12px;font-weight:400;color:#111;transform:scaleX(1.0406);">-130</span>
<span class="t" id="t61" style="left:758.90px;top:472px;font-size:12px;font-weight:400;color:#111;transform:scaleX(1.0406);">-140</span>
<span class="t" id="t62" style="left:758.90px;top:502px;font-size:12px;font-weight:400;color:#111;transform:scaleX(1.0406);">-150</span>
<span class="t" id="t63" style="left:758.90px;top:532px;font-size:12px;font-weight:400;color:#111;transform:scaleX(1.0406);">-160</span>
<span class="t" id="t64" style="left:758.90px;top:562px;font-size:12px;font-weight:400;color:#111;transform:scaleX(1.0406);">-170</span>
<span class="t" id="t65" style="left:781.36px;top:573px;font-size:12px;font-weight:400;color:#111;transform:scaleX(1.0590);">20</span>
<span class="t" id="t66" style="left:819.50px;top:573px;font-size:12px;font-weight:400;color:#111;transform:scaleX(1.0465);">30</span>
<span class="t" id="t67" style="left:867.32px;top:573px;font-size:12px;font-weight:400;color:#111;transform:scaleX(1.0485);">50</span>
<span class="t" id="t68" style="left:928.48px;top:573px;font-size:12px;font-weight:400;color:#111;transform:scaleX(1.0516);">100</span>
<span class="t" id="t69" style="left:993.74px;top:573px;font-size:12px;font-weight:400;color:#111;transform:scaleX(1.0343);">200</span>
<span class="t" id="t70" style="left:1031.87px;top:573px;font-size:12px;font-weight:400;color:#111;transform:scaleX(1.0264);">300</span>
<span class="t" id="t71" style="left:1079.70px;top:573px;font-size:12px;font-weight:400;color:#111;transform:scaleX(1.0277);">500</span>
<span class="t" id="t72" style="left:1147.69px;top:573px;font-size:12px;font-weight:400;color:#111;transform:scaleX(1.0614);">1k</span>
<span class="t" id="t73" style="left:1212.96px;top:573px;font-size:12px;font-weight:400;color:#111;transform:scaleX(1.0341);">2k</span>
<span class="t" id="t74" style="left:1251.09px;top:573px;font-size:12px;font-weight:400;color:#111;transform:scaleX(1.0217);">3k</span>
<span class="t" id="t75" style="left:1298.91px;top:573px;font-size:12px;font-weight:400;color:#111;transform:scaleX(1.0237);">5k</span>
<span class="t" id="t76" style="left:1360.14px;top:573px;font-size:12px;font-weight:400;color:#111;transform:scaleX(1.0297);">10k</span>
<span class="t" id="t77" style="left:1425.39px;top:573px;font-size:12px;font-weight:400;color:#111;transform:scaleX(1.0127);">20k</span>
<span class="t" id="t78" style="left:1100.05px;top:35px;font-size:11.5px;font-weight:400;color:#111;transform:scaleX(1.0067);">FFT</span>
<span class="t" id="t79" style="left:1070.54px;top:586px;font-size:11.5px;font-weight:400;color:#111;transform:scaleX(1.0182);">Frequency (Hz)</span>
<span class="t" id="t80" style="left:754.50px;top:330.23px;font-size:11.5px;font-weight:400;color:#111;transform-origin:0 9.73px;transform:rotate(-90deg) scaleX(1.0200);">Level (dBrA)</span>
<span class="t" id="t81" style="left:16.27px;top:615px;font-size:12px;font-weight:400;color:#000;transform:scaleX(1.0200);">Interpolated:</span>
<span class="t" id="t82" style="left:119.24px;top:615px;font-size:12px;font-weight:400;color:#000;transform:scaleX(0.9823);">On</span>
<span class="t" id="t83" style="left:167.88px;top:615px;font-size:12px;font-weight:400;color:#000;transform:scaleX(1.0831);">Off</span>
<span class="t" id="t84" style="left:205.78px;top:615px;font-size:12px;font-weight:400;color:#000;transform:scaleX(0.9628);">Show Residual:</span>
<span class="t" id="t85" style="left:301.40px;top:615px;font-size:12px;font-weight:400;color:#000;transform:scaleX(1.0503);">Off</span>
<span class="t" id="t86" style="left:430.78px;top:615px;font-size:12px;font-weight:400;color:#000;transform:scaleX(0.9571);">Show Cycles:</span>
<span class="t" id="t87" style="left:514.06px;top:612px;font-size:12px;font-weight:400;color:#000;transform:scaleX(0.9667);">3</span>
<span class="t" id="t88" style="left:750.55px;top:615px;font-size:12px;font-weight:400;color:#000;transform:scaleX(0.9655);">FFT Length:</span>
<span class="t" id="t89" style="left:828.86px;top:615px;font-size:12px;font-weight:400;color:#000;transform:scaleX(0.8942);">256K</span>
<span class="t" id="t90" style="left:898.35px;top:615px;font-size:12px;font-weight:400;color:#000;transform:scaleX(1.0253);">Window:</span>
<span class="t" id="t91" style="left:961.28px;top:615px;font-size:12px;font-weight:400;color:#000;transform:scaleX(1.0025);">AP-Equiripple</span>
<span class="t" id="t92" style="left:1149.68px;top:615px;font-size:12px;font-weight:400;color:#000;transform:scaleX(0.9546);">Averages:</span>
<span class="t" id="t93" style="left:1214.06px;top:612px;font-size:12px;font-weight:400;color:#000;transform:scaleX(0.9667);">3</span>
<span class="t" id="t94" style="left:1308.18px;top:615px;font-size:12px;font-weight:400;color:#000;transform:scaleX(0.9606);">Show Residual</span>
<span class="t" id="t95" style="left:1432.07px;top:614px;font-size:11px;font-weight:400;color:#000;transform:scaleX(1.1642);">&gt;&gt;</span>
<span class="t" id="t96" style="left:21.38px;top:662px;font-size:12px;font-weight:400;color:#000;transform:scaleX(1.0102);">Add Meter</span>
<span class="t" id="t97" style="left:118.79px;top:662px;font-size:12px;font-weight:400;color:#000;transform:scaleX(0.9408);">Save Meter Data</span>
<span class="t" id="t98" style="left:236.64px;top:662px;font-size:12px;font-weight:400;color:#000;transform:scaleX(0.9760);">Regulate</span>
<span class="t" id="t99" style="left:6.36px;top:689px;font-size:16px;font-weight:700;color:#000;transform:scaleX(0.9757);">RMS Level</span>
<span class="t" id="t100" style="left:96.05px;top:691px;font-size:12px;font-weight:400;color:#000;transform:scaleX(0.9607);">Vrms</span>
<span class="t" id="t101" style="left:9.66px;top:728px;font-size:33px;font-weight:400;color:#0a0a0a;transform:scaleX(0.8594);-webkit-text-stroke:0.65px #dbe5e7;">Ch1</span>
<span class="t" id="t102" style="left:9.57px;top:791px;font-size:33px;font-weight:400;color:#0a0a0a;transform:scaleX(0.9126);-webkit-text-stroke:0.65px #dbe5e7;">Ch2</span>
<span class="t" id="t103" style="left:481.50px;top:721px;font-size:32.5px;font-weight:400;color:#00ff00;transform:scaleX(0.9248);">50.67</span>
<span class="t" id="t104" style="left:603.03px;top:721px;font-size:32.5px;font-weight:400;color:#00ff00;transform:scaleX(1.0045);">mVrms</span>
<span class="t" id="t105" style="left:481.50px;top:801px;font-size:32.5px;font-weight:400;color:#00ff00;transform:scaleX(0.9237);">52.29</span>
<span class="t" id="t106" style="left:603.03px;top:801px;font-size:32.5px;font-weight:400;color:#00ff00;transform:scaleX(1.0045);">mVrms</span>
<span class="t" id="t107" style="left:729.22px;top:689px;font-size:16px;font-weight:700;color:#000;transform:scaleX(1.0234);">THD+N Ratio</span>
<span class="t" id="t108" style="left:840.49px;top:691px;font-size:12px;font-weight:400;color:#000;transform:scaleX(0.9680);">%</span>
<span class="t" id="t109" style="left:731.66px;top:728px;font-size:33px;font-weight:400;color:#0a0a0a;transform:scaleX(0.8594);-webkit-text-stroke:0.65px #dbe5e7;">Ch1</span>
<span class="t" id="t110" style="left:731.57px;top:791px;font-size:33px;font-weight:400;color:#0a0a0a;transform:scaleX(0.9126);-webkit-text-stroke:0.65px #dbe5e7;">Ch2</span>
<span class="t" id="t111" style="left:1252.01px;top:721px;font-size:32.5px;font-weight:400;color:#00ff00;transform:scaleX(0.9337);">0.037520</span>
<span class="t" id="t112" style="left:1401.15px;top:721px;font-size:32.5px;font-weight:400;color:#00ff00;transform:scaleX(0.9029);">%</span>
<span class="t" id="t113" style="left:1252.01px;top:801px;font-size:32.5px;font-weight:400;color:#00ff00;transform:scaleX(0.9348);">0.039823</span>
<span class="t" id="t114" style="left:1401.15px;top:801px;font-size:32.5px;font-weight:400;color:#00ff00;transform:scaleX(0.9029);">%</span>
<span class="t" id="t115" style="left:6.35px;top:853px;font-size:16px;font-weight:700;color:#000;transform:scaleX(0.9817);">Frequency</span>
<span class="t" id="t116" style="left:96.06px;top:855px;font-size:12px;font-weight:400;color:#000;transform:scaleX(0.9554);">Hz</span>
<span class="t" id="t117" style="left:9.66px;top:892px;font-size:33px;font-weight:400;color:#0a0a0a;transform:scaleX(0.8594);-webkit-text-stroke:0.65px #dbe5e7;">Ch1</span>
<span class="t" id="t118" style="left:9.57px;top:955px;font-size:33px;font-weight:400;color:#0a0a0a;transform:scaleX(0.9126);-webkit-text-stroke:0.65px #dbe5e7;">Ch2</span>
<span class="t" id="t119" style="left:510.81px;top:885px;font-size:32.5px;font-weight:400;color:#00ff00;transform:scaleX(0.9375);">0.99999</span>
<span class="t" id="t120" style="left:652.17px;top:885px;font-size:32.5px;font-weight:400;color:#00ff00;transform:scaleX(0.9739);">kHz</span>
<span class="t" id="t121" style="left:510.81px;top:965px;font-size:32.5px;font-weight:400;color:#00ff00;transform:scaleX(0.9375);">0.99999</span>
<span class="t" id="t122" style="left:652.17px;top:965px;font-size:32.5px;font-weight:400;color:#00ff00;transform:scaleX(0.9739);">kHz</span>
<span class="t" id="t123" style="left:728.94px;top:853px;font-size:16px;font-weight:700;color:#000;transform:scaleX(1.0031);">SINAD</span>
<span class="t" id="t124" style="left:789.44px;top:855px;font-size:12px;font-weight:400;color:#000;transform:scaleX(0.9157);">dB</span>
<span class="t" id="t125" style="left:731.66px;top:892px;font-size:33px;font-weight:400;color:#0a0a0a;transform:scaleX(0.8594);-webkit-text-stroke:0.65px #dbe5e7;">Ch1</span>
<span class="t" id="t126" style="left:731.57px;top:955px;font-size:33px;font-weight:400;color:#0a0a0a;transform:scaleX(0.9126);-webkit-text-stroke:0.65px #dbe5e7;">Ch2</span>
<span class="t" id="t127" style="left:1270.46px;top:885px;font-size:32.5px;font-weight:400;color:#00ff00;transform:scaleX(0.9337);">68.515</span>
<span class="t" id="t128" style="left:1388.70px;top:885px;font-size:32.5px;font-weight:400;color:#00ff00;transform:scaleX(0.9544);">dB</span>
<span class="t" id="t129" style="left:1270.45px;top:965px;font-size:32.5px;font-weight:400;color:#00ff00;transform:scaleX(0.9363);">67.997</span>
<span class="t" id="t130" style="left:1388.70px;top:965px;font-size:32.5px;font-weight:400;color:#00ff00;transform:scaleX(0.9544);">dB</span>
</div></body></html>
